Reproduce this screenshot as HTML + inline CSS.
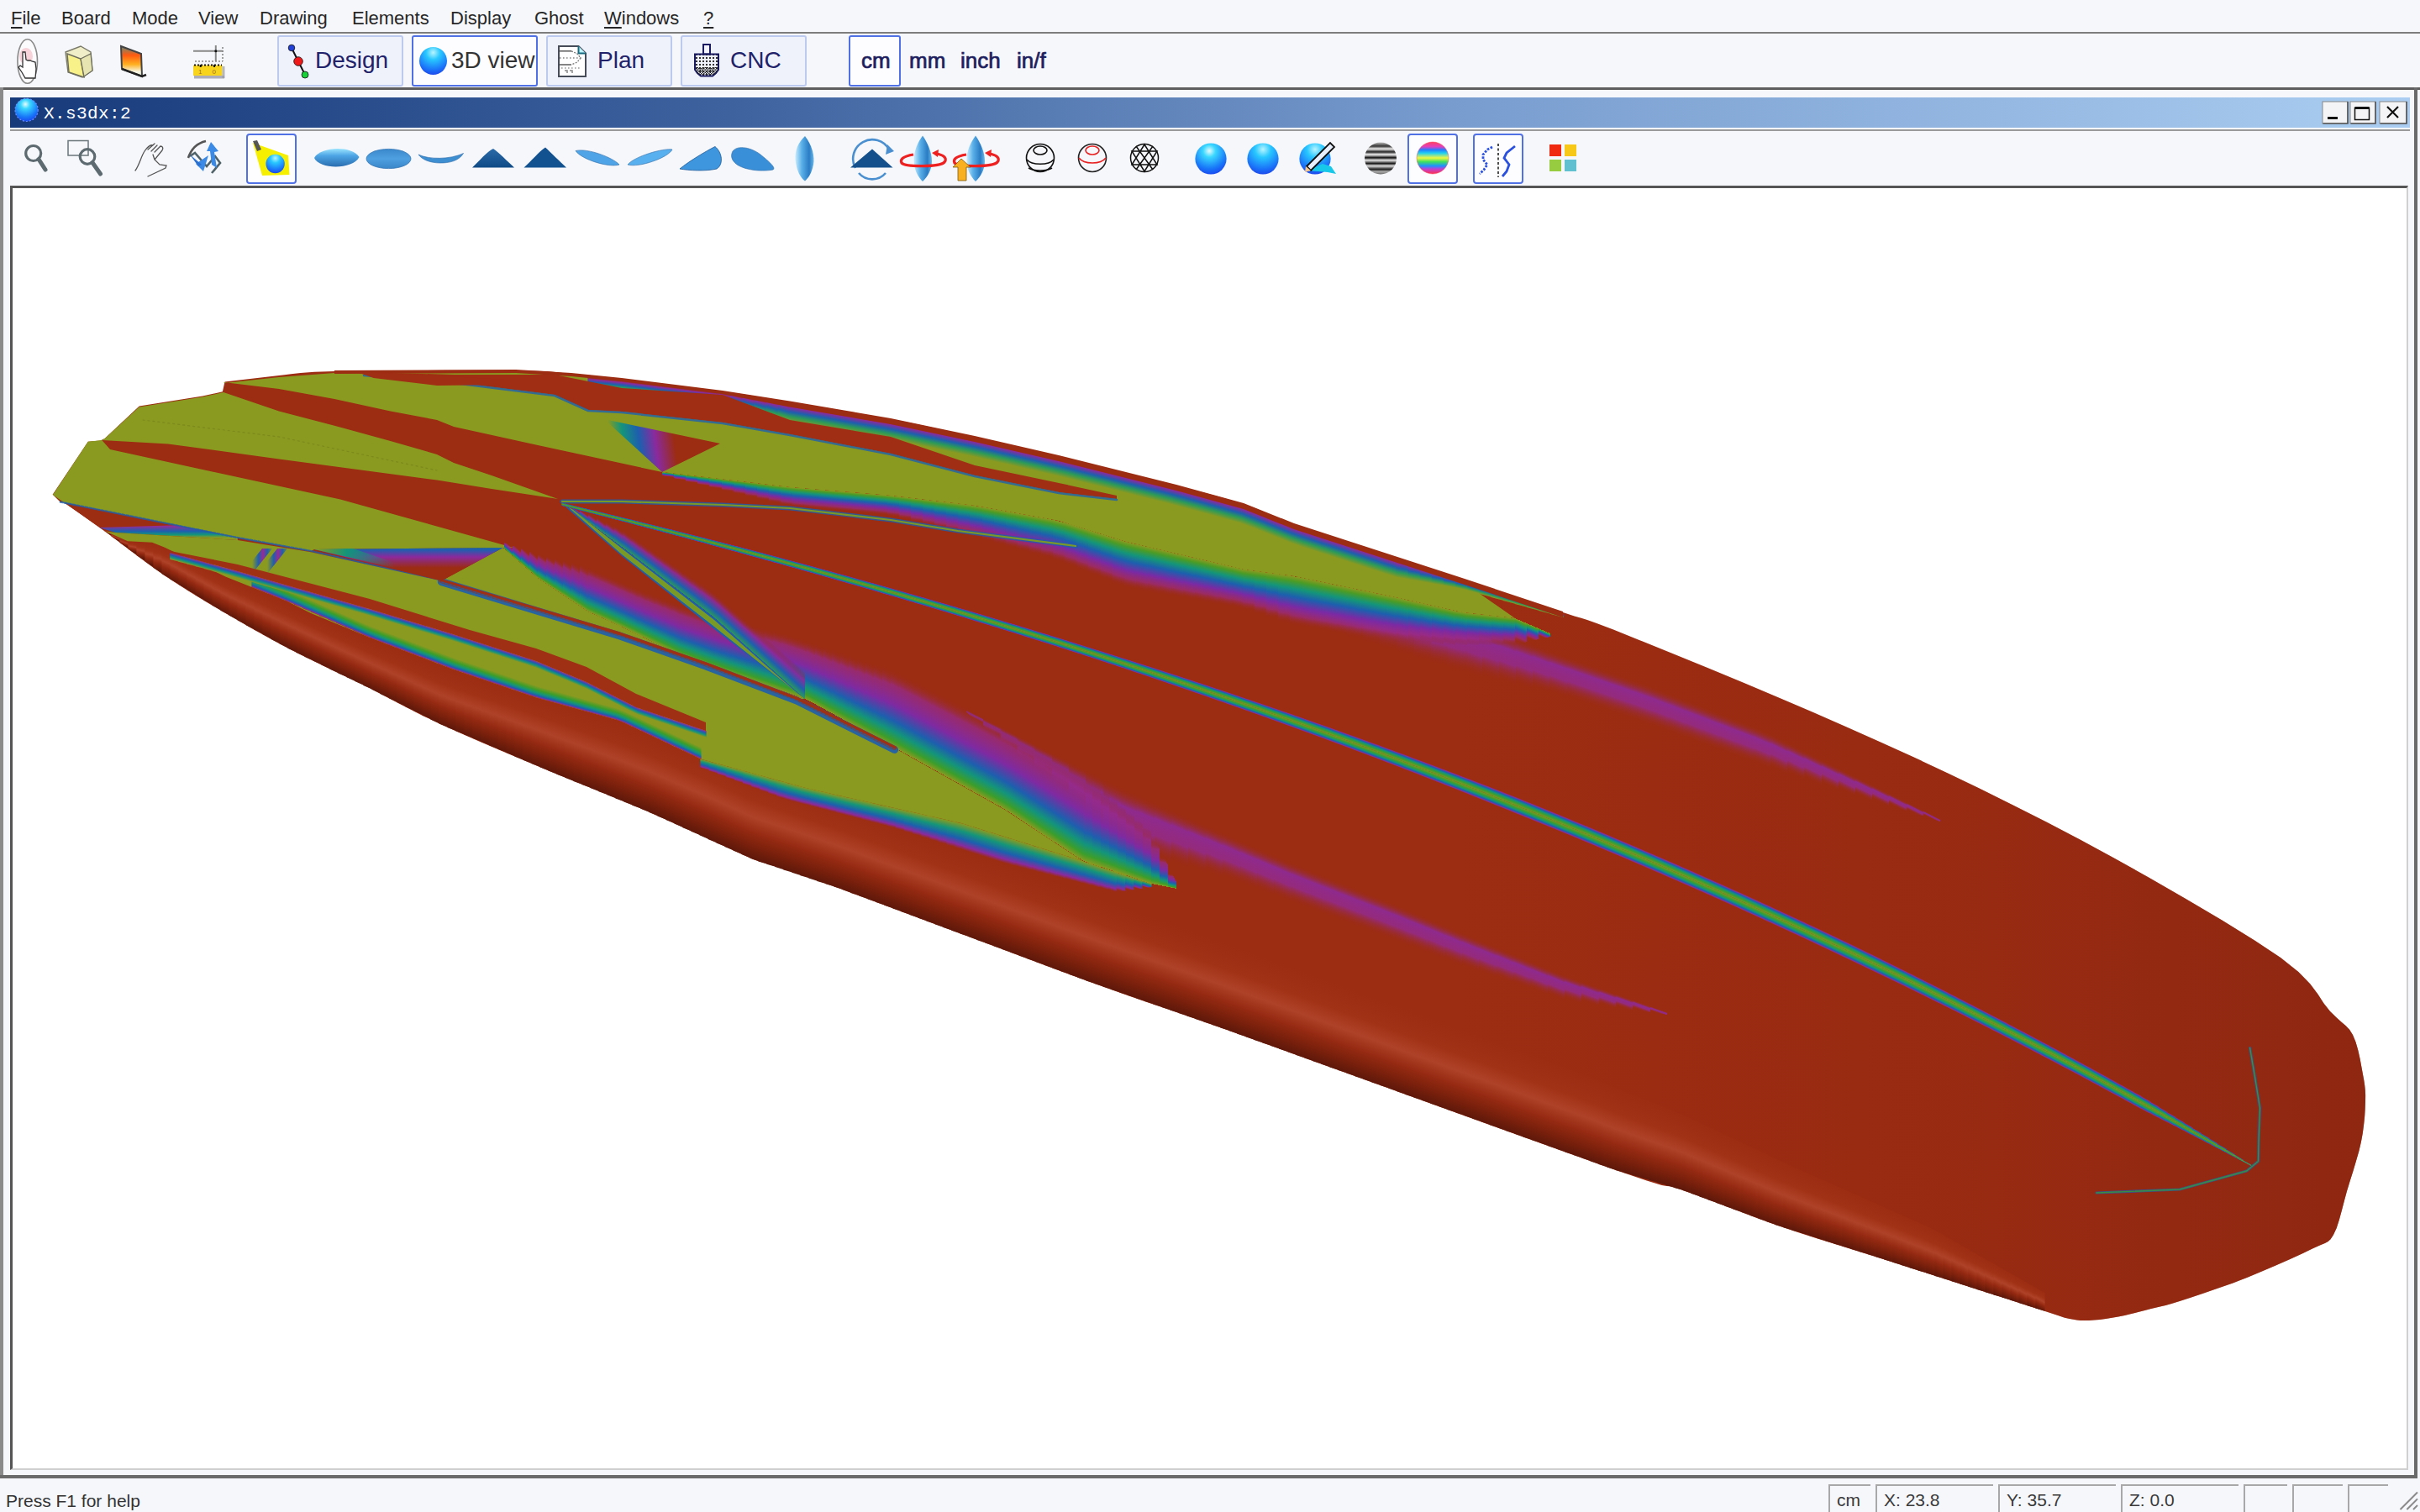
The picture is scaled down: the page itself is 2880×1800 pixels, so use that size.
<!DOCTYPE html>
<html><head><meta charset="utf-8">
<style>
*{margin:0;padding:0;box-sizing:border-box}
html,body{width:2880px;height:1800px;overflow:hidden;background:#f6f7fb;font-family:"Liberation Sans",sans-serif;position:relative}
.abs{position:absolute}
.menu{position:absolute;top:8px;font-size:22px;color:#262626;line-height:28px;white-space:nowrap}
.u{text-decoration:underline;text-underline-offset:3px}
.sep{position:absolute;left:0;width:2880px}
.tbtn{position:absolute;top:42px;height:61px;border:2px solid #bccaf0;border-radius:3px;background:#eff2fa}
.tbtn.sel{border-color:#5070e6;background:#fdfdff}
.tlbl{position:absolute;font-size:28px;line-height:32px;color:#22226a;white-space:nowrap}
.unit{position:absolute;top:56px;font-size:26px;line-height:32px;color:#1e1e5e;-webkit-text-stroke:0.7px #1e1e5e;white-space:nowrap}
.ibtn{position:absolute;top:159px;height:60px;border:2px solid #5070e6;border-radius:4px;background:#fdfdff}
.spane{position:absolute;top:1767px;height:40px;border-left:2px solid #a8a8a8;border-top:2px solid #a8a8a8;font-size:21px;color:#3a3a3a;padding-left:8px;line-height:34px;white-space:nowrap}
</style></head><body>
<!-- menu bar -->
<div class="menu" style="left:13px"><span class="u">F</span>ile</div>
<div class="menu" style="left:73px">Board</div>
<div class="menu" style="left:157px">Mode</div>
<div class="menu" style="left:236px">View</div>
<div class="menu" style="left:309px">Drawing</div>
<div class="menu" style="left:419px">Elements</div>
<div class="menu" style="left:536px">Display</div>
<div class="menu" style="left:636px">Ghost</div>
<div class="menu" style="left:719px"><span class="u">W</span>indows</div>
<div class="menu" style="left:837px"><span class="u">?</span></div>
<div class="sep" style="top:38px;height:2px;background:#7d7d7d"></div>

<!-- main toolbar -->
<div class="tbtn" style="left:330px;width:150px"></div>
<div class="tbtn sel" style="left:490px;width:150px"></div>
<div class="tbtn" style="left:650px;width:150px"></div>
<div class="tbtn" style="left:810px;width:150px"></div>
<div class="tbtn sel" style="left:1010px;width:62px"></div>
<div class="tlbl" style="left:375px;top:56px">Design</div>
<div class="tlbl" style="left:537px;top:56px;color:#333">3D view</div>
<div class="tlbl" style="left:711px;top:56px">Plan</div>
<div class="tlbl" style="left:869px;top:56px">CNC</div>
<div class="unit" style="left:1025px">cm</div>
<div class="unit" style="left:1082px">mm</div>
<div class="unit" style="left:1143px">inch</div>
<div class="unit" style="left:1210px">in/f</div>
<div class="sep" style="top:104px;height:3px;background:#5e5e5e"></div>

<!-- internal frame -->
<div class="abs" style="left:0;top:104px;width:4px;height:1656px;background:#8a8a8a"></div>
<div class="abs" style="left:2873px;top:104px;width:4px;height:1656px;background:#6a6a6a"></div>
<div class="abs" style="left:0;top:1756px;width:2877px;height:4px;background:#6a6a6a"></div>
<div class="abs" style="left:12px;top:116px;width:2856px;height:36px;background:linear-gradient(90deg,#173a7b 0%,#3d629e 30%,#789cce 60%,#aacdf1 100%)"></div>
<div class="abs" style="left:12px;top:154px;width:2856px;height:2px;background:#9a9a9a"></div>
<div class="abs" style="left:52px;top:121px;font-family:'Liberation Mono',monospace;font-size:21px;line-height:30px;color:#fff;letter-spacing:0.4px">X.s3dx:2</div>
<!-- canvas -->
<div class="abs" style="left:12px;top:221px;width:2854px;height:1529px;background:#fff;border-left:3px solid #555;border-top:3px solid #555;border-right:2px solid #d0d0d0;border-bottom:2px solid #d0d0d0"></div>

<!-- icon toolbar selected buttons -->
<div class="ibtn" style="left:293px;width:60px"></div>
<div class="ibtn" style="left:1675px;width:60px"></div>
<div class="ibtn" style="left:1753px;width:60px"></div>

<!-- status bar -->
<div class="abs" style="left:7px;top:1774px;font-size:21px;line-height:26px;color:#333">Press F1 for help</div>
<div class="spane" style="left:2176px;width:50px">cm</div>
<div class="spane" style="left:2232px;width:140px">X: 23.8</div>
<div class="spane" style="left:2378px;width:140px">Y: 35.7</div>
<div class="spane" style="left:2524px;width:140px">Z: 0.0</div>
<div class="spane" style="left:2670px;width:52px"></div>
<div class="spane" style="left:2728px;width:60px"></div>
<div class="spane" style="left:2794px;width:48px"></div>
<svg class="abs" style="left:0;top:0" width="2880" height="1800" viewBox="0 0 2880 1800" xmlns="http://www.w3.org/2000/svg"><defs><linearGradient id="tailtone" gradientUnits="userSpaceOnUse" x1="1700" y1="0" x2="2820" y2="0"><stop offset="0" stop-color="#9a2c12" stop-opacity="0"/><stop offset="1" stop-color="#862410" stop-opacity="0.6"/></linearGradient><linearGradient id="s0"><stop offset="0" stop-color="#9c2c12"/><stop offset="0.3" stop-color="#a23216"/><stop offset="0.5" stop-color="#ae4228"/><stop offset="0.68" stop-color="#962a12"/><stop offset="0.85" stop-color="#7a200c"/><stop offset="1.0" stop-color="#5e180a"/></linearGradient><linearGradient id="g1" href="#s0" gradientUnits="userSpaceOnUse" x1="128.0" y1="633.1" x2="127.4" y2="634.6"/><linearGradient id="g2" href="#s0" gradientUnits="userSpaceOnUse" x1="138.0" y1="637.7" x2="136.3" y2="641.5"/><linearGradient id="g3" href="#s0" gradientUnits="userSpaceOnUse" x1="148.0" y1="641.9" x2="145.4" y2="648.8"/><linearGradient id="g4" href="#s0" gradientUnits="userSpaceOnUse" x1="158.0" y1="644.6" x2="155.8" y2="656.8"/><linearGradient id="g5" href="#s0" gradientUnits="userSpaceOnUse" x1="168.0" y1="646.4" x2="164.9" y2="664.0"/><linearGradient id="g6" href="#s0" gradientUnits="userSpaceOnUse" x1="178.0" y1="648.2" x2="173.9" y2="671.3"/><linearGradient id="g7" href="#s0" gradientUnits="userSpaceOnUse" x1="188.0" y1="650.0" x2="182.9" y2="678.5"/><linearGradient id="g8" href="#s0" gradientUnits="userSpaceOnUse" x1="198.0" y1="652.8" x2="186.8" y2="682.1"/><linearGradient id="g9" href="#s0" gradientUnits="userSpaceOnUse" x1="208.0" y1="657.1" x2="194.1" y2="686.1"/><linearGradient id="g10" href="#s0" gradientUnits="userSpaceOnUse" x1="218.0" y1="661.9" x2="203.6" y2="692.0"/><linearGradient id="g11" href="#s0" gradientUnits="userSpaceOnUse" x1="228.0" y1="666.6" x2="213.0" y2="697.9"/><linearGradient id="g12" href="#s0" gradientUnits="userSpaceOnUse" x1="238.0" y1="671.4" x2="222.5" y2="703.8"/><linearGradient id="g13" href="#s0" gradientUnits="userSpaceOnUse" x1="248.0" y1="676.2" x2="231.9" y2="709.8"/><linearGradient id="g14" href="#s0" gradientUnits="userSpaceOnUse" x1="258.0" y1="681.0" x2="241.4" y2="715.7"/><linearGradient id="g15" href="#s0" gradientUnits="userSpaceOnUse" x1="268.0" y1="685.7" x2="251.6" y2="722.4"/><linearGradient id="g16" href="#s0" gradientUnits="userSpaceOnUse" x1="278.0" y1="689.9" x2="262.0" y2="728.9"/><linearGradient id="g17" href="#s0" gradientUnits="userSpaceOnUse" x1="288.0" y1="694.0" x2="271.5" y2="734.3"/><linearGradient id="g18" href="#s0" gradientUnits="userSpaceOnUse" x1="298.0" y1="698.1" x2="281.0" y2="739.7"/><linearGradient id="g19" href="#s0" gradientUnits="userSpaceOnUse" x1="308.0" y1="702.3" x2="290.4" y2="745.1"/><linearGradient id="g20" href="#s0" gradientUnits="userSpaceOnUse" x1="318.0" y1="706.4" x2="299.9" y2="750.5"/><linearGradient id="g21" href="#s0" gradientUnits="userSpaceOnUse" x1="328.0" y1="710.5" x2="309.4" y2="755.9"/><linearGradient id="g22" href="#s0" gradientUnits="userSpaceOnUse" x1="338.0" y1="714.6" x2="318.6" y2="761.0"/><linearGradient id="g23" href="#s0" gradientUnits="userSpaceOnUse" x1="348.0" y1="718.9" x2="327.5" y2="765.1"/><linearGradient id="g24" href="#s0" gradientUnits="userSpaceOnUse" x1="358.0" y1="723.4" x2="337.3" y2="770.0"/><linearGradient id="g25" href="#s0" gradientUnits="userSpaceOnUse" x1="368.0" y1="727.8" x2="347.1" y2="774.9"/><linearGradient id="g26" href="#s0" gradientUnits="userSpaceOnUse" x1="378.0" y1="732.2" x2="356.9" y2="779.7"/><linearGradient id="g27" href="#s0" gradientUnits="userSpaceOnUse" x1="388.0" y1="736.7" x2="366.7" y2="784.6"/><linearGradient id="g28" href="#s0" gradientUnits="userSpaceOnUse" x1="398.0" y1="741.1" x2="376.6" y2="789.6"/><linearGradient id="g29" href="#s0" gradientUnits="userSpaceOnUse" x1="408.0" y1="745.5" x2="386.7" y2="794.7"/><linearGradient id="g30" href="#s0" gradientUnits="userSpaceOnUse" x1="418.0" y1="749.8" x2="396.6" y2="799.4"/><linearGradient id="g31" href="#s0" gradientUnits="userSpaceOnUse" x1="428.0" y1="754.1" x2="406.4" y2="804.2"/><linearGradient id="g32" href="#s0" gradientUnits="userSpaceOnUse" x1="438.0" y1="758.4" x2="416.5" y2="809.3"/><linearGradient id="g33" href="#s0" gradientUnits="userSpaceOnUse" x1="448.0" y1="762.5" x2="427.1" y2="815.0"/><linearGradient id="g34" href="#s0" gradientUnits="userSpaceOnUse" x1="458.0" y1="766.5" x2="436.7" y2="820.0"/><linearGradient id="g35" href="#s0" gradientUnits="userSpaceOnUse" x1="468.0" y1="770.5" x2="446.3" y2="824.9"/><linearGradient id="g36" href="#s0" gradientUnits="userSpaceOnUse" x1="478.0" y1="774.4" x2="455.9" y2="829.8"/><linearGradient id="g37" href="#s0" gradientUnits="userSpaceOnUse" x1="488.0" y1="778.4" x2="465.6" y2="834.8"/><linearGradient id="g38" href="#s0" gradientUnits="userSpaceOnUse" x1="498.0" y1="782.4" x2="475.2" y2="839.7"/><linearGradient id="g39" href="#s0" gradientUnits="userSpaceOnUse" x1="508.0" y1="786.4" x2="484.8" y2="844.6"/><linearGradient id="g40" href="#s0" gradientUnits="userSpaceOnUse" x1="518.0" y1="790.4" x2="494.4" y2="849.6"/><linearGradient id="g41" href="#s0" gradientUnits="userSpaceOnUse" x1="528.0" y1="794.0" x2="507.3" y2="856.9"/><linearGradient id="g42" href="#s0" gradientUnits="userSpaceOnUse" x1="538.0" y1="797.2" x2="518.0" y2="861.8"/><linearGradient id="g43" href="#s0" gradientUnits="userSpaceOnUse" x1="548.0" y1="800.2" x2="529.2" y2="867.1"/><linearGradient id="g44" href="#s0" gradientUnits="userSpaceOnUse" x1="558.0" y1="803.0" x2="538.8" y2="871.3"/><linearGradient id="g45" href="#s0" gradientUnits="userSpaceOnUse" x1="568.0" y1="805.8" x2="548.4" y2="875.5"/><linearGradient id="g46" href="#s0" gradientUnits="userSpaceOnUse" x1="578.0" y1="808.6" x2="558.0" y2="879.7"/><linearGradient id="g47" href="#s0" gradientUnits="userSpaceOnUse" x1="588.0" y1="811.4" x2="567.6" y2="883.9"/><linearGradient id="g48" href="#s0" gradientUnits="userSpaceOnUse" x1="598.0" y1="814.2" x2="577.2" y2="888.1"/><linearGradient id="g49" href="#s0" gradientUnits="userSpaceOnUse" x1="608.0" y1="817.0" x2="586.8" y2="892.3"/><linearGradient id="g50" href="#s0" gradientUnits="userSpaceOnUse" x1="618.0" y1="819.9" x2="596.4" y2="896.5"/><linearGradient id="g51" href="#s0" gradientUnits="userSpaceOnUse" x1="628.0" y1="822.7" x2="606.0" y2="900.7"/><linearGradient id="g52" href="#s0" gradientUnits="userSpaceOnUse" x1="638.0" y1="825.6" x2="614.5" y2="904.1"/><linearGradient id="g53" href="#s0" gradientUnits="userSpaceOnUse" x1="648.0" y1="828.7" x2="622.1" y2="906.9"/><linearGradient id="g54" href="#s0" gradientUnits="userSpaceOnUse" x1="658.0" y1="832.0" x2="632.5" y2="911.4"/><linearGradient id="g55" href="#s0" gradientUnits="userSpaceOnUse" x1="668.0" y1="835.2" x2="642.2" y2="915.4"/><linearGradient id="g56" href="#s0" gradientUnits="userSpaceOnUse" x1="678.0" y1="838.4" x2="652.0" y2="919.5"/><linearGradient id="g57" href="#s0" gradientUnits="userSpaceOnUse" x1="688.0" y1="841.6" x2="661.7" y2="923.5"/><linearGradient id="g58" href="#s0" gradientUnits="userSpaceOnUse" x1="698.0" y1="844.8" x2="671.4" y2="927.5"/><linearGradient id="g59" href="#s0" gradientUnits="userSpaceOnUse" x1="708.0" y1="848.1" x2="681.2" y2="931.6"/><linearGradient id="g60" href="#s0" gradientUnits="userSpaceOnUse" x1="718.0" y1="851.3" x2="690.9" y2="935.6"/><linearGradient id="g61" href="#s0" gradientUnits="userSpaceOnUse" x1="728.0" y1="854.5" x2="700.6" y2="939.6"/><linearGradient id="g62" href="#s0" gradientUnits="userSpaceOnUse" x1="738.0" y1="857.8" x2="709.6" y2="943.0"/><linearGradient id="g63" href="#s0" gradientUnits="userSpaceOnUse" x1="748.0" y1="861.2" x2="717.5" y2="945.6"/><linearGradient id="g64" href="#s0" gradientUnits="userSpaceOnUse" x1="758.0" y1="864.8" x2="727.4" y2="949.7"/><linearGradient id="g65" href="#s0" gradientUnits="userSpaceOnUse" x1="768.0" y1="868.5" x2="736.9" y2="953.5"/><linearGradient id="g66" href="#s0" gradientUnits="userSpaceOnUse" x1="778.0" y1="872.3" x2="744.2" y2="955.5"/><linearGradient id="g67" href="#s0" gradientUnits="userSpaceOnUse" x1="788.0" y1="876.4" x2="754.1" y2="960.0"/><linearGradient id="g68" href="#s0" gradientUnits="userSpaceOnUse" x1="798.0" y1="880.4" x2="763.9" y2="964.5"/><linearGradient id="g69" href="#s0" gradientUnits="userSpaceOnUse" x1="808.0" y1="884.5" x2="773.7" y2="969.0"/><linearGradient id="g70" href="#s0" gradientUnits="userSpaceOnUse" x1="818.0" y1="888.6" x2="783.6" y2="973.5"/><linearGradient id="g71" href="#s0" gradientUnits="userSpaceOnUse" x1="828.0" y1="892.6" x2="793.4" y2="978.0"/><linearGradient id="g72" href="#s0" gradientUnits="userSpaceOnUse" x1="838.0" y1="896.7" x2="802.3" y2="981.6"/><linearGradient id="g73" href="#s0" gradientUnits="userSpaceOnUse" x1="848.0" y1="901.1" x2="810.3" y2="983.9"/><linearGradient id="g74" href="#s0" gradientUnits="userSpaceOnUse" x1="858.0" y1="905.7" x2="820.3" y2="988.5"/><linearGradient id="g75" href="#s0" gradientUnits="userSpaceOnUse" x1="868.0" y1="910.2" x2="830.3" y2="993.0"/><linearGradient id="g76" href="#s0" gradientUnits="userSpaceOnUse" x1="878.0" y1="914.8" x2="840.3" y2="997.6"/><linearGradient id="g77" href="#s0" gradientUnits="userSpaceOnUse" x1="888.0" y1="919.4" x2="850.3" y2="1002.2"/><linearGradient id="g78" href="#s0" gradientUnits="userSpaceOnUse" x1="898.0" y1="923.5" x2="865.3" y2="1011.3"/><linearGradient id="g79" href="#s0" gradientUnits="userSpaceOnUse" x1="908.0" y1="927.0" x2="877.8" y2="1016.9"/><linearGradient id="g80" href="#s0" gradientUnits="userSpaceOnUse" x1="918.0" y1="930.4" x2="887.8" y2="1020.2"/><linearGradient id="g81" href="#s0" gradientUnits="userSpaceOnUse" x1="928.0" y1="933.8" x2="897.8" y2="1023.6"/><linearGradient id="g82" href="#s0" gradientUnits="userSpaceOnUse" x1="938.0" y1="937.1" x2="907.8" y2="1027.0"/><linearGradient id="g83" href="#s0" gradientUnits="userSpaceOnUse" x1="948.0" y1="940.5" x2="917.8" y2="1030.3"/><linearGradient id="g84" href="#s0" gradientUnits="userSpaceOnUse" x1="958.0" y1="943.9" x2="927.8" y2="1033.7"/><linearGradient id="g85" href="#s0" gradientUnits="userSpaceOnUse" x1="968.0" y1="947.2" x2="937.8" y2="1037.1"/><linearGradient id="g86" href="#s0" gradientUnits="userSpaceOnUse" x1="978.0" y1="950.6" x2="947.8" y2="1040.4"/><linearGradient id="g87" href="#s0" gradientUnits="userSpaceOnUse" x1="988.0" y1="954.0" x2="957.8" y2="1043.8"/><linearGradient id="g88" href="#s0" gradientUnits="userSpaceOnUse" x1="998.0" y1="957.4" x2="967.3" y2="1046.8"/><linearGradient id="g89" href="#s0" gradientUnits="userSpaceOnUse" x1="1008.0" y1="960.9" x2="976.1" y2="1049.5"/><linearGradient id="g90" href="#s0" gradientUnits="userSpaceOnUse" x1="1018.0" y1="964.5" x2="986.1" y2="1053.2"/><linearGradient id="g91" href="#s0" gradientUnits="userSpaceOnUse" x1="1028.0" y1="968.1" x2="996.0" y2="1056.9"/><linearGradient id="g92" href="#s0" gradientUnits="userSpaceOnUse" x1="1038.0" y1="971.7" x2="1006.0" y2="1060.7"/><linearGradient id="g93" href="#s0" gradientUnits="userSpaceOnUse" x1="1048.0" y1="975.3" x2="1015.9" y2="1064.4"/><linearGradient id="g94" href="#s0" gradientUnits="userSpaceOnUse" x1="1058.0" y1="978.9" x2="1025.9" y2="1068.1"/><linearGradient id="g95" href="#s0" gradientUnits="userSpaceOnUse" x1="1068.0" y1="982.5" x2="1035.8" y2="1071.8"/><linearGradient id="g96" href="#s0" gradientUnits="userSpaceOnUse" x1="1078.0" y1="986.1" x2="1045.8" y2="1075.5"/><linearGradient id="g97" href="#s0" gradientUnits="userSpaceOnUse" x1="1088.0" y1="989.7" x2="1055.8" y2="1079.2"/><linearGradient id="g98" href="#s0" gradientUnits="userSpaceOnUse" x1="1098.0" y1="993.3" x2="1065.7" y2="1083.0"/><linearGradient id="g99" href="#s0" gradientUnits="userSpaceOnUse" x1="1108.0" y1="996.9" x2="1075.7" y2="1086.7"/><linearGradient id="g100" href="#s0" gradientUnits="userSpaceOnUse" x1="1118.0" y1="1000.5" x2="1085.6" y2="1090.4"/><linearGradient id="g101" href="#s0" gradientUnits="userSpaceOnUse" x1="1128.0" y1="1004.1" x2="1095.6" y2="1094.1"/><linearGradient id="g102" href="#s0" gradientUnits="userSpaceOnUse" x1="1138.0" y1="1007.7" x2="1105.5" y2="1097.8"/><linearGradient id="g103" href="#s0" gradientUnits="userSpaceOnUse" x1="1148.0" y1="1011.3" x2="1115.5" y2="1101.6"/><linearGradient id="g104" href="#s0" gradientUnits="userSpaceOnUse" x1="1158.0" y1="1014.9" x2="1125.5" y2="1105.3"/><linearGradient id="g105" href="#s0" gradientUnits="userSpaceOnUse" x1="1168.0" y1="1018.5" x2="1135.4" y2="1109.0"/><linearGradient id="g106" href="#s0" gradientUnits="userSpaceOnUse" x1="1178.0" y1="1022.1" x2="1145.4" y2="1112.7"/><linearGradient id="g107" href="#s0" gradientUnits="userSpaceOnUse" x1="1188.0" y1="1025.7" x2="1155.3" y2="1116.4"/><linearGradient id="g108" href="#s0" gradientUnits="userSpaceOnUse" x1="1198.0" y1="1029.3" x2="1165.3" y2="1120.1"/><linearGradient id="g109" href="#s0" gradientUnits="userSpaceOnUse" x1="1208.0" y1="1032.9" x2="1175.2" y2="1123.9"/><linearGradient id="g110" href="#s0" gradientUnits="userSpaceOnUse" x1="1218.0" y1="1036.5" x2="1185.2" y2="1127.6"/><linearGradient id="g111" href="#s0" gradientUnits="userSpaceOnUse" x1="1228.0" y1="1040.1" x2="1195.2" y2="1131.3"/><linearGradient id="g112" href="#s0" gradientUnits="userSpaceOnUse" x1="1238.0" y1="1043.7" x2="1205.1" y2="1135.0"/><linearGradient id="g113" href="#s0" gradientUnits="userSpaceOnUse" x1="1248.0" y1="1047.3" x2="1215.1" y2="1138.7"/><linearGradient id="g114" href="#s0" gradientUnits="userSpaceOnUse" x1="1258.0" y1="1050.9" x2="1225.0" y2="1142.5"/><linearGradient id="g115" href="#s0" gradientUnits="userSpaceOnUse" x1="1268.0" y1="1054.5" x2="1235.0" y2="1146.2"/><linearGradient id="g116" href="#s0" gradientUnits="userSpaceOnUse" x1="1278.0" y1="1058.1" x2="1244.9" y2="1149.9"/><linearGradient id="g117" href="#s0" gradientUnits="userSpaceOnUse" x1="1288.0" y1="1061.7" x2="1254.9" y2="1153.6"/><linearGradient id="g118" href="#s0" gradientUnits="userSpaceOnUse" x1="1298.0" y1="1065.3" x2="1264.9" y2="1157.4"/><linearGradient id="g119" href="#s0" gradientUnits="userSpaceOnUse" x1="1308.0" y1="1068.9" x2="1275.1" y2="1161.1"/><linearGradient id="g120" href="#s0" gradientUnits="userSpaceOnUse" x1="1318.0" y1="1072.4" x2="1285.1" y2="1164.6"/><linearGradient id="g121" href="#s0" gradientUnits="userSpaceOnUse" x1="1328.0" y1="1076.0" x2="1295.2" y2="1168.1"/><linearGradient id="g122" href="#s0" gradientUnits="userSpaceOnUse" x1="1338.0" y1="1079.6" x2="1305.2" y2="1171.6"/><linearGradient id="g123" href="#s0" gradientUnits="userSpaceOnUse" x1="1348.0" y1="1083.1" x2="1315.2" y2="1175.1"/><linearGradient id="g124" href="#s0" gradientUnits="userSpaceOnUse" x1="1358.0" y1="1086.7" x2="1325.2" y2="1178.6"/><linearGradient id="g125" href="#s0" gradientUnits="userSpaceOnUse" x1="1368.0" y1="1090.3" x2="1335.2" y2="1182.1"/><linearGradient id="g126" href="#s0" gradientUnits="userSpaceOnUse" x1="1378.0" y1="1093.8" x2="1345.3" y2="1185.6"/><linearGradient id="g127" href="#s0" gradientUnits="userSpaceOnUse" x1="1388.0" y1="1097.4" x2="1355.3" y2="1189.1"/><linearGradient id="g128" href="#s0" gradientUnits="userSpaceOnUse" x1="1398.0" y1="1101.0" x2="1365.3" y2="1192.6"/><linearGradient id="g129" href="#s0" gradientUnits="userSpaceOnUse" x1="1408.0" y1="1104.5" x2="1375.3" y2="1196.1"/><linearGradient id="g130" href="#s0" gradientUnits="userSpaceOnUse" x1="1418.0" y1="1108.1" x2="1385.3" y2="1199.7"/><linearGradient id="g131" href="#s0" gradientUnits="userSpaceOnUse" x1="1428.0" y1="1111.7" x2="1395.4" y2="1203.2"/><linearGradient id="g132" href="#s0" gradientUnits="userSpaceOnUse" x1="1438.0" y1="1115.2" x2="1405.4" y2="1206.7"/><linearGradient id="g133" href="#s0" gradientUnits="userSpaceOnUse" x1="1448.0" y1="1118.8" x2="1415.4" y2="1210.2"/><linearGradient id="g134" href="#s0" gradientUnits="userSpaceOnUse" x1="1458.0" y1="1122.4" x2="1425.2" y2="1213.5"/><linearGradient id="g135" href="#s0" gradientUnits="userSpaceOnUse" x1="1468.0" y1="1126.0" x2="1434.7" y2="1216.6"/><linearGradient id="g136" href="#s0" gradientUnits="userSpaceOnUse" x1="1478.0" y1="1129.7" x2="1444.7" y2="1220.3"/><linearGradient id="g137" href="#s0" gradientUnits="userSpaceOnUse" x1="1488.0" y1="1133.4" x2="1454.7" y2="1223.9"/><linearGradient id="g138" href="#s0" gradientUnits="userSpaceOnUse" x1="1498.0" y1="1137.0" x2="1464.8" y2="1227.5"/><linearGradient id="g139" href="#s0" gradientUnits="userSpaceOnUse" x1="1508.0" y1="1140.7" x2="1474.8" y2="1231.1"/><linearGradient id="g140" href="#s0" gradientUnits="userSpaceOnUse" x1="1518.0" y1="1144.4" x2="1484.8" y2="1234.7"/><linearGradient id="g141" href="#s0" gradientUnits="userSpaceOnUse" x1="1528.0" y1="1148.1" x2="1494.8" y2="1238.3"/><linearGradient id="g142" href="#s0" gradientUnits="userSpaceOnUse" x1="1538.0" y1="1151.7" x2="1504.8" y2="1242.0"/><linearGradient id="g143" href="#s0" gradientUnits="userSpaceOnUse" x1="1548.0" y1="1155.4" x2="1514.9" y2="1245.6"/><linearGradient id="g144" href="#s0" gradientUnits="userSpaceOnUse" x1="1558.0" y1="1159.1" x2="1524.9" y2="1249.2"/><linearGradient id="g145" href="#s0" gradientUnits="userSpaceOnUse" x1="1568.0" y1="1162.8" x2="1534.9" y2="1252.8"/><linearGradient id="g146" href="#s0" gradientUnits="userSpaceOnUse" x1="1578.0" y1="1166.4" x2="1544.9" y2="1256.4"/><linearGradient id="g147" href="#s0" gradientUnits="userSpaceOnUse" x1="1588.0" y1="1170.1" x2="1554.9" y2="1260.0"/><linearGradient id="g148" href="#s0" gradientUnits="userSpaceOnUse" x1="1598.0" y1="1173.8" x2="1565.0" y2="1263.7"/><linearGradient id="g149" href="#s0" gradientUnits="userSpaceOnUse" x1="1608.0" y1="1177.5" x2="1575.0" y2="1267.3"/><linearGradient id="g150" href="#s0" gradientUnits="userSpaceOnUse" x1="1618.0" y1="1181.1" x2="1585.0" y2="1270.9"/><linearGradient id="g151" href="#s0" gradientUnits="userSpaceOnUse" x1="1628.0" y1="1184.8" x2="1595.0" y2="1274.5"/><linearGradient id="g152" href="#s0" gradientUnits="userSpaceOnUse" x1="1638.0" y1="1188.5" x2="1605.1" y2="1278.1"/><linearGradient id="g153" href="#s0" gradientUnits="userSpaceOnUse" x1="1648.0" y1="1192.2" x2="1615.1" y2="1281.7"/><linearGradient id="g154" href="#s0" gradientUnits="userSpaceOnUse" x1="1658.0" y1="1195.8" x2="1625.1" y2="1285.4"/><linearGradient id="g155" href="#s0" gradientUnits="userSpaceOnUse" x1="1668.0" y1="1199.5" x2="1635.1" y2="1289.0"/><linearGradient id="g156" href="#s0" gradientUnits="userSpaceOnUse" x1="1678.0" y1="1203.2" x2="1645.1" y2="1292.6"/><linearGradient id="g157" href="#s0" gradientUnits="userSpaceOnUse" x1="1688.0" y1="1206.9" x2="1655.2" y2="1296.2"/><linearGradient id="g158" href="#s0" gradientUnits="userSpaceOnUse" x1="1698.0" y1="1210.5" x2="1665.2" y2="1299.8"/><linearGradient id="g159" href="#s0" gradientUnits="userSpaceOnUse" x1="1708.0" y1="1214.2" x2="1675.2" y2="1303.4"/><linearGradient id="g160" href="#s0" gradientUnits="userSpaceOnUse" x1="1718.0" y1="1217.9" x2="1685.2" y2="1307.1"/><linearGradient id="g161" href="#s0" gradientUnits="userSpaceOnUse" x1="1728.0" y1="1221.6" x2="1695.2" y2="1310.7"/><linearGradient id="g162" href="#s0" gradientUnits="userSpaceOnUse" x1="1738.0" y1="1225.2" x2="1705.3" y2="1314.3"/><linearGradient id="g163" href="#s0" gradientUnits="userSpaceOnUse" x1="1748.0" y1="1228.9" x2="1715.3" y2="1317.9"/><linearGradient id="g164" href="#s0" gradientUnits="userSpaceOnUse" x1="1758.0" y1="1232.6" x2="1725.3" y2="1321.5"/><linearGradient id="g165" href="#s0" gradientUnits="userSpaceOnUse" x1="1768.0" y1="1236.3" x2="1735.3" y2="1325.1"/><linearGradient id="g166" href="#s0" gradientUnits="userSpaceOnUse" x1="1778.0" y1="1239.9" x2="1745.4" y2="1328.8"/><linearGradient id="g167" href="#s0" gradientUnits="userSpaceOnUse" x1="1788.0" y1="1243.6" x2="1755.4" y2="1332.4"/><linearGradient id="g168" href="#s0" gradientUnits="userSpaceOnUse" x1="1798.0" y1="1247.3" x2="1765.4" y2="1336.0"/><linearGradient id="g169" href="#s0" gradientUnits="userSpaceOnUse" x1="1808.0" y1="1251.0" x2="1775.4" y2="1339.6"/><linearGradient id="g170" href="#s0" gradientUnits="userSpaceOnUse" x1="1818.0" y1="1254.6" x2="1785.4" y2="1343.2"/><linearGradient id="g171" href="#s0" gradientUnits="userSpaceOnUse" x1="1828.0" y1="1258.3" x2="1795.5" y2="1346.8"/><linearGradient id="g172" href="#s0" gradientUnits="userSpaceOnUse" x1="1838.0" y1="1262.0" x2="1805.5" y2="1350.5"/><linearGradient id="g173" href="#s0" gradientUnits="userSpaceOnUse" x1="1848.0" y1="1265.7" x2="1815.5" y2="1354.1"/><linearGradient id="g174" href="#s0" gradientUnits="userSpaceOnUse" x1="1858.0" y1="1269.3" x2="1825.5" y2="1357.7"/><linearGradient id="g175" href="#s0" gradientUnits="userSpaceOnUse" x1="1868.0" y1="1273.0" x2="1835.6" y2="1361.3"/><linearGradient id="g176" href="#s0" gradientUnits="userSpaceOnUse" x1="1878.0" y1="1276.7" x2="1845.6" y2="1364.9"/><linearGradient id="g177" href="#s0" gradientUnits="userSpaceOnUse" x1="1888.0" y1="1280.4" x2="1855.6" y2="1368.5"/><linearGradient id="g178" href="#s0" gradientUnits="userSpaceOnUse" x1="1898.0" y1="1284.2" x2="1863.8" y2="1370.5"/><linearGradient id="g179" href="#s0" gradientUnits="userSpaceOnUse" x1="1908.0" y1="1288.5" x2="1870.3" y2="1370.3"/><linearGradient id="g180" href="#s0" gradientUnits="userSpaceOnUse" x1="1918.0" y1="1293.0" x2="1881.7" y2="1375.1"/><linearGradient id="g181" href="#s0" gradientUnits="userSpaceOnUse" x1="1928.0" y1="1297.2" x2="1894.5" y2="1381.0"/><linearGradient id="g182" href="#s0" gradientUnits="userSpaceOnUse" x1="1938.0" y1="1301.2" x2="1904.8" y2="1384.1"/><linearGradient id="g183" href="#s0" gradientUnits="userSpaceOnUse" x1="1948.0" y1="1305.2" x2="1915.2" y2="1387.3"/><linearGradient id="g184" href="#s0" gradientUnits="userSpaceOnUse" x1="1958.0" y1="1309.2" x2="1925.5" y2="1390.4"/><linearGradient id="g185" href="#s0" gradientUnits="userSpaceOnUse" x1="1968.0" y1="1313.2" x2="1935.9" y2="1393.5"/><linearGradient id="g186" href="#s0" gradientUnits="userSpaceOnUse" x1="1978.0" y1="1317.2" x2="1946.2" y2="1396.7"/><linearGradient id="g187" href="#s0" gradientUnits="userSpaceOnUse" x1="1988.0" y1="1321.2" x2="1956.6" y2="1399.8"/><linearGradient id="g188" href="#s0" gradientUnits="userSpaceOnUse" x1="1998.0" y1="1325.3" x2="1965.7" y2="1401.9"/><linearGradient id="g189" href="#s0" gradientUnits="userSpaceOnUse" x1="2008.0" y1="1329.8" x2="1973.6" y2="1402.8"/><linearGradient id="g190" href="#s0" gradientUnits="userSpaceOnUse" x1="2018.0" y1="1334.5" x2="1984.0" y2="1406.7"/><linearGradient id="g191" href="#s0" gradientUnits="userSpaceOnUse" x1="2028.0" y1="1339.2" x2="1994.4" y2="1410.5"/><linearGradient id="g192" href="#s0" gradientUnits="userSpaceOnUse" x1="2038.0" y1="1343.9" x2="2004.8" y2="1414.4"/><linearGradient id="g193" href="#s0" gradientUnits="userSpaceOnUse" x1="2048.0" y1="1348.6" x2="2015.1" y2="1418.3"/><linearGradient id="g194" href="#s0" gradientUnits="userSpaceOnUse" x1="2058.0" y1="1353.3" x2="2025.5" y2="1422.2"/><linearGradient id="g195" href="#s0" gradientUnits="userSpaceOnUse" x1="2068.0" y1="1358.0" x2="2035.9" y2="1426.1"/><linearGradient id="g196" href="#s0" gradientUnits="userSpaceOnUse" x1="2078.0" y1="1362.8" x2="2046.3" y2="1430.0"/><linearGradient id="g197" href="#s0" gradientUnits="userSpaceOnUse" x1="2088.0" y1="1367.5" x2="2056.7" y2="1433.9"/><linearGradient id="g198" href="#s0" gradientUnits="userSpaceOnUse" x1="2098.0" y1="1372.2" x2="2066.8" y2="1437.4"/><linearGradient id="g199" href="#s0" gradientUnits="userSpaceOnUse" x1="2108.0" y1="1377.1" x2="2076.5" y2="1440.5"/><linearGradient id="g200" href="#s0" gradientUnits="userSpaceOnUse" x1="2118.0" y1="1381.9" x2="2088.7" y2="1446.3"/><linearGradient id="g201" href="#s0" gradientUnits="userSpaceOnUse" x1="2128.0" y1="1386.3" x2="2099.6" y2="1450.3"/><linearGradient id="g202" href="#s0" gradientUnits="userSpaceOnUse" x1="2138.0" y1="1390.8" x2="2110.1" y2="1453.6"/><linearGradient id="g203" href="#s0" gradientUnits="userSpaceOnUse" x1="2148.0" y1="1395.2" x2="2120.6" y2="1457.0"/><linearGradient id="g204" href="#s0" gradientUnits="userSpaceOnUse" x1="2158.0" y1="1399.7" x2="2131.0" y2="1460.4"/><linearGradient id="g205" href="#s0" gradientUnits="userSpaceOnUse" x1="2168.0" y1="1404.1" x2="2141.5" y2="1463.8"/><linearGradient id="g206" href="#s0" gradientUnits="userSpaceOnUse" x1="2178.0" y1="1408.5" x2="2151.9" y2="1467.2"/><linearGradient id="g207" href="#s0" gradientUnits="userSpaceOnUse" x1="2188.0" y1="1413.0" x2="2162.4" y2="1470.6"/><linearGradient id="g208" href="#s0" gradientUnits="userSpaceOnUse" x1="2198.0" y1="1417.4" x2="2172.9" y2="1474.0"/><linearGradient id="g209" href="#s0" gradientUnits="userSpaceOnUse" x1="2208.0" y1="1421.9" x2="2183.3" y2="1477.4"/><linearGradient id="g210" href="#s0" gradientUnits="userSpaceOnUse" x1="2218.0" y1="1426.3" x2="2193.8" y2="1480.8"/><linearGradient id="g211" href="#s0" gradientUnits="userSpaceOnUse" x1="2228.0" y1="1430.7" x2="2204.2" y2="1484.2"/><linearGradient id="g212" href="#s0" gradientUnits="userSpaceOnUse" x1="2238.0" y1="1435.2" x2="2214.6" y2="1487.5"/><linearGradient id="g213" href="#s0" gradientUnits="userSpaceOnUse" x1="2248.0" y1="1439.7" x2="2225.1" y2="1490.9"/><linearGradient id="g214" href="#s0" gradientUnits="userSpaceOnUse" x1="2258.0" y1="1444.1" x2="2235.6" y2="1494.4"/><linearGradient id="g215" href="#s0" gradientUnits="userSpaceOnUse" x1="2268.0" y1="1448.6" x2="2246.0" y2="1497.8"/><linearGradient id="g216" href="#s0" gradientUnits="userSpaceOnUse" x1="2278.0" y1="1453.1" x2="2256.5" y2="1501.2"/><linearGradient id="g217" href="#s0" gradientUnits="userSpaceOnUse" x1="2288.0" y1="1457.5" x2="2267.0" y2="1504.6"/><linearGradient id="g218" href="#s0" gradientUnits="userSpaceOnUse" x1="2298.0" y1="1462.2" x2="2276.4" y2="1506.8"/><linearGradient id="g219" href="#s0" gradientUnits="userSpaceOnUse" x1="2308.0" y1="1467.5" x2="2285.2" y2="1507.4"/><linearGradient id="g220" href="#s0" gradientUnits="userSpaceOnUse" x1="2318.0" y1="1473.2" x2="2296.2" y2="1511.2"/><linearGradient id="g221" href="#s0" gradientUnits="userSpaceOnUse" x1="2328.0" y1="1478.9" x2="2307.3" y2="1515.1"/><linearGradient id="g222" href="#s0" gradientUnits="userSpaceOnUse" x1="2338.0" y1="1484.6" x2="2318.4" y2="1518.9"/><linearGradient id="g223" href="#s0" gradientUnits="userSpaceOnUse" x1="2348.0" y1="1490.3" x2="2329.5" y2="1522.7"/><linearGradient id="g224" href="#s0" gradientUnits="userSpaceOnUse" x1="2358.0" y1="1496.0" x2="2340.5" y2="1526.5"/><linearGradient id="g225" href="#s0" gradientUnits="userSpaceOnUse" x1="2368.0" y1="1501.8" x2="2351.6" y2="1530.4"/><linearGradient id="g226" href="#s0" gradientUnits="userSpaceOnUse" x1="2378.0" y1="1507.5" x2="2362.7" y2="1534.2"/><linearGradient id="g227" href="#s0" gradientUnits="userSpaceOnUse" x1="2388.0" y1="1513.2" x2="2373.8" y2="1538.1"/><linearGradient id="g228" href="#s0" gradientUnits="userSpaceOnUse" x1="2398.0" y1="1519.0" x2="2384.8" y2="1541.9"/><linearGradient id="g229" href="#s0" gradientUnits="userSpaceOnUse" x1="2408.0" y1="1524.7" x2="2395.9" y2="1545.8"/><linearGradient id="g230" href="#s0" gradientUnits="userSpaceOnUse" x1="2418.0" y1="1530.4" x2="2407.0" y2="1549.6"/><linearGradient id="g231" href="#s0" gradientUnits="userSpaceOnUse" x1="2428.0" y1="1536.1" x2="2418.1" y2="1553.5"/><linearGradient id="s1"><stop offset="0" stop-color="#9c2c12" stop-opacity="0"/><stop offset="0.3" stop-color="#8e2a94" stop-opacity="0.95"/><stop offset="0.6" stop-color="#942a88" stop-opacity="0.9"/><stop offset="1" stop-color="#9c2c12" stop-opacity="0"/></linearGradient><linearGradient id="g232" href="#s1" gradientUnits="userSpaceOnUse" x1="1410.1" y1="662.0" x2="1408.5" y2="669.8"/><linearGradient id="g233" href="#s1" gradientUnits="userSpaceOnUse" x1="1430.3" y1="666.1" x2="1427.1" y2="681.9"/><linearGradient id="g234" href="#s1" gradientUnits="userSpaceOnUse" x1="1450.5" y1="670.1" x2="1445.7" y2="693.9"/><linearGradient id="g235" href="#s1" gradientUnits="userSpaceOnUse" x1="1470.7" y1="674.1" x2="1464.4" y2="705.9"/><linearGradient id="g236" href="#s1" gradientUnits="userSpaceOnUse" x1="1490.9" y1="678.2" x2="1482.9" y2="717.7"/><linearGradient id="g237" href="#s1" gradientUnits="userSpaceOnUse" x1="1511.1" y1="682.5" x2="1501.1" y2="726.2"/><linearGradient id="g238" href="#s1" gradientUnits="userSpaceOnUse" x1="1531.3" y1="687.2" x2="1520.9" y2="732.4"/><linearGradient id="g239" href="#s1" gradientUnits="userSpaceOnUse" x1="1551.5" y1="691.8" x2="1540.8" y2="738.6"/><linearGradient id="g240" href="#s1" gradientUnits="userSpaceOnUse" x1="1571.7" y1="696.4" x2="1560.6" y2="744.9"/><linearGradient id="g241" href="#s1" gradientUnits="userSpaceOnUse" x1="1591.9" y1="701.1" x2="1580.4" y2="751.1"/><linearGradient id="g242" href="#s1" gradientUnits="userSpaceOnUse" x1="1612.1" y1="705.7" x2="1600.3" y2="757.3"/><linearGradient id="g243" href="#s1" gradientUnits="userSpaceOnUse" x1="1632.3" y1="710.3" x2="1620.1" y2="763.5"/><linearGradient id="g244" href="#s1" gradientUnits="userSpaceOnUse" x1="1652.5" y1="714.9" x2="1639.9" y2="769.8"/><linearGradient id="g245" href="#s1" gradientUnits="userSpaceOnUse" x1="1672.7" y1="719.6" x2="1659.8" y2="776.0"/><linearGradient id="g246" href="#s1" gradientUnits="userSpaceOnUse" x1="1692.9" y1="724.2" x2="1679.6" y2="782.2"/><linearGradient id="g247" href="#s1" gradientUnits="userSpaceOnUse" x1="1713.1" y1="728.8" x2="1699.4" y2="788.5"/><linearGradient id="g248" href="#s1" gradientUnits="userSpaceOnUse" x1="1733.3" y1="733.7" x2="1718.0" y2="793.9"/><linearGradient id="g249" href="#s1" gradientUnits="userSpaceOnUse" x1="1753.5" y1="740.1" x2="1732.8" y2="795.4"/><linearGradient id="g250" href="#s1" gradientUnits="userSpaceOnUse" x1="1773.7" y1="747.6" x2="1753.9" y2="800.4"/><linearGradient id="g251" href="#s1" gradientUnits="userSpaceOnUse" x1="1793.9" y1="755.2" x2="1775.0" y2="805.5"/><linearGradient id="g252" href="#s1" gradientUnits="userSpaceOnUse" x1="1814.1" y1="762.8" x2="1796.2" y2="810.6"/><linearGradient id="g253" href="#s1" gradientUnits="userSpaceOnUse" x1="1834.3" y1="770.4" x2="1817.3" y2="815.6"/><linearGradient id="g254" href="#s1" gradientUnits="userSpaceOnUse" x1="1854.5" y1="777.9" x2="1838.5" y2="821.1"/><linearGradient id="g255" href="#s1" gradientUnits="userSpaceOnUse" x1="1874.7" y1="785.1" x2="1859.8" y2="827.8"/><linearGradient id="g256" href="#s1" gradientUnits="userSpaceOnUse" x1="1894.9" y1="792.2" x2="1880.0" y2="834.7"/><linearGradient id="g257" href="#s1" gradientUnits="userSpaceOnUse" x1="1915.1" y1="799.3" x2="1900.3" y2="841.6"/><linearGradient id="g258" href="#s1" gradientUnits="userSpaceOnUse" x1="1935.3" y1="806.4" x2="1920.6" y2="848.4"/><linearGradient id="g259" href="#s1" gradientUnits="userSpaceOnUse" x1="1955.5" y1="813.5" x2="1940.5" y2="855.1"/><linearGradient id="g260" href="#s1" gradientUnits="userSpaceOnUse" x1="1975.7" y1="821.2" x2="1959.9" y2="861.4"/><linearGradient id="g261" href="#s1" gradientUnits="userSpaceOnUse" x1="1995.9" y1="829.1" x2="1980.3" y2="868.7"/><linearGradient id="g262" href="#s1" gradientUnits="userSpaceOnUse" x1="2016.1" y1="837.0" x2="2000.8" y2="876.0"/><linearGradient id="g263" href="#s1" gradientUnits="userSpaceOnUse" x1="2036.3" y1="845.0" x2="2021.2" y2="883.3"/><linearGradient id="g264" href="#s1" gradientUnits="userSpaceOnUse" x1="2056.5" y1="852.9" x2="2041.7" y2="890.6"/><linearGradient id="g265" href="#s1" gradientUnits="userSpaceOnUse" x1="2076.7" y1="860.8" x2="2062.1" y2="898.0"/><linearGradient id="g266" href="#s1" gradientUnits="userSpaceOnUse" x1="2096.9" y1="869.2" x2="2081.8" y2="904.2"/><linearGradient id="g267" href="#s1" gradientUnits="userSpaceOnUse" x1="2117.1" y1="878.6" x2="2101.5" y2="909.6"/><linearGradient id="g268" href="#s1" gradientUnits="userSpaceOnUse" x1="2137.3" y1="888.7" x2="2123.2" y2="916.7"/><linearGradient id="g269" href="#s1" gradientUnits="userSpaceOnUse" x1="2157.5" y1="898.9" x2="2145.0" y2="923.9"/><linearGradient id="g270" href="#s1" gradientUnits="userSpaceOnUse" x1="2177.7" y1="909.0" x2="2166.7" y2="931.0"/><linearGradient id="g271" href="#s1" gradientUnits="userSpaceOnUse" x1="2197.9" y1="919.2" x2="2188.4" y2="938.1"/><linearGradient id="g272" href="#s1" gradientUnits="userSpaceOnUse" x1="2218.1" y1="929.3" x2="2210.1" y2="945.3"/><linearGradient id="g273" href="#s1" gradientUnits="userSpaceOnUse" x1="2238.3" y1="939.5" x2="2231.8" y2="952.4"/><linearGradient id="g274" href="#s1" gradientUnits="userSpaceOnUse" x1="2258.5" y1="949.6" x2="2253.5" y2="959.5"/><linearGradient id="g275" href="#s1" gradientUnits="userSpaceOnUse" x1="2278.7" y1="959.8" x2="2275.2" y2="966.7"/><linearGradient id="g276" href="#s1" gradientUnits="userSpaceOnUse" x1="2298.9" y1="969.9" x2="2296.9" y2="973.8"/><linearGradient id="s2"><stop offset="0" stop-color="#8a9a20"/><stop offset="0.1" stop-color="#4a9c26"/><stop offset="0.25" stop-color="#14957a"/><stop offset="0.42" stop-color="#1d5fae"/><stop offset="0.62" stop-color="#7a2aa4"/><stop offset="0.8" stop-color="#9a2a86" stop-opacity="0.7"/><stop offset="1.0" stop-color="#9c2c12" stop-opacity="0"/></linearGradient><linearGradient id="g277" href="#s2" gradientUnits="userSpaceOnUse" x1="795.0" y1="562.8" x2="794.5" y2="567.6"/><linearGradient id="g278" href="#s2" gradientUnits="userSpaceOnUse" x1="809.1" y1="564.5" x2="808.4" y2="571.1"/><linearGradient id="g279" href="#s2" gradientUnits="userSpaceOnUse" x1="823.2" y1="566.2" x2="822.3" y2="574.5"/><linearGradient id="g280" href="#s2" gradientUnits="userSpaceOnUse" x1="837.3" y1="567.8" x2="836.1" y2="577.9"/><linearGradient id="g281" href="#s2" gradientUnits="userSpaceOnUse" x1="851.4" y1="569.5" x2="850.0" y2="581.3"/><linearGradient id="g282" href="#s2" gradientUnits="userSpaceOnUse" x1="865.5" y1="571.2" x2="863.9" y2="584.7"/><linearGradient id="g283" href="#s2" gradientUnits="userSpaceOnUse" x1="879.6" y1="572.8" x2="877.8" y2="588.1"/><linearGradient id="g284" href="#s2" gradientUnits="userSpaceOnUse" x1="893.7" y1="574.5" x2="891.7" y2="591.5"/><linearGradient id="g285" href="#s2" gradientUnits="userSpaceOnUse" x1="907.8" y1="576.2" x2="905.6" y2="594.9"/><linearGradient id="g286" href="#s2" gradientUnits="userSpaceOnUse" x1="921.9" y1="577.9" x2="919.5" y2="598.3"/><linearGradient id="g287" href="#s2" gradientUnits="userSpaceOnUse" x1="936.0" y1="579.5" x2="933.5" y2="601.5"/><linearGradient id="g288" href="#s2" gradientUnits="userSpaceOnUse" x1="950.1" y1="580.8" x2="948.2" y2="603.8"/><linearGradient id="g289" href="#s2" gradientUnits="userSpaceOnUse" x1="964.2" y1="582.0" x2="962.2" y2="605.1"/><linearGradient id="g290" href="#s2" gradientUnits="userSpaceOnUse" x1="978.3" y1="583.2" x2="976.3" y2="606.3"/><linearGradient id="g291" href="#s2" gradientUnits="userSpaceOnUse" x1="992.4" y1="584.4" x2="990.4" y2="607.6"/><linearGradient id="g292" href="#s2" gradientUnits="userSpaceOnUse" x1="1006.4" y1="585.5" x2="1004.5" y2="608.9"/><linearGradient id="g293" href="#s2" gradientUnits="userSpaceOnUse" x1="1020.5" y1="586.7" x2="1018.6" y2="610.2"/><linearGradient id="g294" href="#s2" gradientUnits="userSpaceOnUse" x1="1034.6" y1="587.9" x2="1032.7" y2="611.5"/><linearGradient id="g295" href="#s2" gradientUnits="userSpaceOnUse" x1="1048.7" y1="589.1" x2="1046.7" y2="612.8"/><linearGradient id="g296" href="#s2" gradientUnits="userSpaceOnUse" x1="1062.8" y1="590.4" x2="1060.2" y2="614.8"/><linearGradient id="g297" href="#s2" gradientUnits="userSpaceOnUse" x1="1076.9" y1="592.0" x2="1073.8" y2="618.0"/><linearGradient id="g298" href="#s2" gradientUnits="userSpaceOnUse" x1="1091.0" y1="593.7" x2="1087.7" y2="621.7"/><linearGradient id="g299" href="#s2" gradientUnits="userSpaceOnUse" x1="1105.1" y1="595.4" x2="1101.5" y2="625.3"/><linearGradient id="g300" href="#s2" gradientUnits="userSpaceOnUse" x1="1119.2" y1="597.1" x2="1115.4" y2="628.9"/><linearGradient id="g301" href="#s2" gradientUnits="userSpaceOnUse" x1="1133.3" y1="598.8" x2="1129.2" y2="632.6"/><linearGradient id="g302" href="#s2" gradientUnits="userSpaceOnUse" x1="1147.4" y1="600.5" x2="1143.1" y2="636.2"/><linearGradient id="g303" href="#s2" gradientUnits="userSpaceOnUse" x1="1161.5" y1="602.4" x2="1155.7" y2="639.6"/><linearGradient id="g304" href="#s2" gradientUnits="userSpaceOnUse" x1="1175.6" y1="604.8" x2="1168.7" y2="643.1"/><linearGradient id="g305" href="#s2" gradientUnits="userSpaceOnUse" x1="1189.7" y1="607.3" x2="1182.5" y2="647.0"/><linearGradient id="g306" href="#s2" gradientUnits="userSpaceOnUse" x1="1203.8" y1="609.9" x2="1196.4" y2="650.9"/><linearGradient id="g307" href="#s2" gradientUnits="userSpaceOnUse" x1="1217.8" y1="612.4" x2="1210.2" y2="654.8"/><linearGradient id="g308" href="#s2" gradientUnits="userSpaceOnUse" x1="1231.9" y1="614.9" x2="1224.1" y2="658.7"/><linearGradient id="g309" href="#s2" gradientUnits="userSpaceOnUse" x1="1246.0" y1="617.5" x2="1237.9" y2="662.6"/><linearGradient id="g310" href="#s2" gradientUnits="userSpaceOnUse" x1="1260.1" y1="620.5" x2="1248.9" y2="665.7"/><linearGradient id="g311" href="#s2" gradientUnits="userSpaceOnUse" x1="1274.2" y1="624.4" x2="1260.2" y2="669.3"/><linearGradient id="g312" href="#s2" gradientUnits="userSpaceOnUse" x1="1288.3" y1="628.8" x2="1273.9" y2="674.8"/><linearGradient id="g313" href="#s2" gradientUnits="userSpaceOnUse" x1="1302.4" y1="633.3" x2="1287.7" y2="680.4"/><linearGradient id="g314" href="#s2" gradientUnits="userSpaceOnUse" x1="1316.5" y1="637.7" x2="1301.4" y2="685.9"/><linearGradient id="g315" href="#s2" gradientUnits="userSpaceOnUse" x1="1330.6" y1="642.1" x2="1315.2" y2="691.4"/><linearGradient id="g316" href="#s2" gradientUnits="userSpaceOnUse" x1="1344.7" y1="646.0" x2="1331.9" y2="697.4"/><linearGradient id="g317" href="#s2" gradientUnits="userSpaceOnUse" x1="1358.8" y1="649.4" x2="1346.7" y2="700.5"/><linearGradient id="g318" href="#s2" gradientUnits="userSpaceOnUse" x1="1372.9" y1="652.7" x2="1361.0" y2="703.1"/><linearGradient id="g319" href="#s2" gradientUnits="userSpaceOnUse" x1="1387.0" y1="656.1" x2="1375.3" y2="705.6"/><linearGradient id="g320" href="#s2" gradientUnits="userSpaceOnUse" x1="1401.1" y1="659.4" x2="1389.6" y2="708.2"/><linearGradient id="g321" href="#s2" gradientUnits="userSpaceOnUse" x1="1415.2" y1="662.7" x2="1403.8" y2="710.8"/><linearGradient id="g322" href="#s2" gradientUnits="userSpaceOnUse" x1="1429.2" y1="666.0" x2="1418.1" y2="713.3"/><linearGradient id="g323" href="#s2" gradientUnits="userSpaceOnUse" x1="1443.3" y1="669.4" x2="1432.4" y2="715.9"/><linearGradient id="g324" href="#s2" gradientUnits="userSpaceOnUse" x1="1457.4" y1="672.7" x2="1446.6" y2="718.4"/><linearGradient id="g325" href="#s2" gradientUnits="userSpaceOnUse" x1="1471.5" y1="676.0" x2="1460.9" y2="721.0"/><linearGradient id="g326" href="#s2" gradientUnits="userSpaceOnUse" x1="1485.6" y1="678.7" x2="1478.8" y2="726.0"/><linearGradient id="g327" href="#s2" gradientUnits="userSpaceOnUse" x1="1499.7" y1="680.6" x2="1493.0" y2="730.7"/><linearGradient id="g328" href="#s2" gradientUnits="userSpaceOnUse" x1="1513.8" y1="682.5" x2="1506.8" y2="735.3"/><linearGradient id="g329" href="#s2" gradientUnits="userSpaceOnUse" x1="1527.9" y1="684.4" x2="1520.5" y2="740.0"/><linearGradient id="g330" href="#s2" gradientUnits="userSpaceOnUse" x1="1542.0" y1="686.6" x2="1531.8" y2="743.0"/><linearGradient id="g331" href="#s2" gradientUnits="userSpaceOnUse" x1="1556.1" y1="689.4" x2="1544.5" y2="745.1"/><linearGradient id="g332" href="#s2" gradientUnits="userSpaceOnUse" x1="1570.2" y1="692.3" x2="1558.7" y2="747.4"/><linearGradient id="g333" href="#s2" gradientUnits="userSpaceOnUse" x1="1584.3" y1="695.2" x2="1572.9" y2="749.6"/><linearGradient id="g334" href="#s2" gradientUnits="userSpaceOnUse" x1="1598.4" y1="698.2" x2="1587.2" y2="751.9"/><linearGradient id="g335" href="#s2" gradientUnits="userSpaceOnUse" x1="1612.5" y1="701.1" x2="1601.4" y2="754.2"/><linearGradient id="g336" href="#s2" gradientUnits="userSpaceOnUse" x1="1626.6" y1="704.0" x2="1615.6" y2="756.4"/><linearGradient id="g337" href="#s2" gradientUnits="userSpaceOnUse" x1="1640.6" y1="707.0" x2="1629.9" y2="758.7"/><linearGradient id="g338" href="#s2" gradientUnits="userSpaceOnUse" x1="1654.7" y1="709.9" x2="1644.0" y2="760.8"/><linearGradient id="g339" href="#s2" gradientUnits="userSpaceOnUse" x1="1668.8" y1="713.0" x2="1657.8" y2="762.0"/><linearGradient id="g340" href="#s2" gradientUnits="userSpaceOnUse" x1="1682.9" y1="716.2" x2="1672.4" y2="762.8"/><linearGradient id="g341" href="#s2" gradientUnits="userSpaceOnUse" x1="1697.0" y1="719.3" x2="1687.1" y2="763.6"/><linearGradient id="g342" href="#s2" gradientUnits="userSpaceOnUse" x1="1711.1" y1="722.5" x2="1701.7" y2="764.4"/><linearGradient id="g343" href="#s2" gradientUnits="userSpaceOnUse" x1="1725.2" y1="725.7" x2="1716.3" y2="765.3"/><linearGradient id="g344" href="#s2" gradientUnits="userSpaceOnUse" x1="1739.3" y1="728.5" x2="1732.7" y2="766.7"/><linearGradient id="g345" href="#s2" gradientUnits="userSpaceOnUse" x1="1753.4" y1="730.5" x2="1749.3" y2="767.5"/><linearGradient id="g346" href="#s2" gradientUnits="userSpaceOnUse" x1="1767.5" y1="732.1" x2="1763.5" y2="767.6"/><linearGradient id="g347" href="#s2" gradientUnits="userSpaceOnUse" x1="1781.6" y1="733.6" x2="1777.8" y2="767.6"/><linearGradient id="g348" href="#s2" gradientUnits="userSpaceOnUse" x1="1795.7" y1="735.2" x2="1792.1" y2="767.3"/><linearGradient id="g349" href="#s2" gradientUnits="userSpaceOnUse" x1="1809.8" y1="738.9" x2="1800.1" y2="761.8"/><linearGradient id="g350" href="#s2" gradientUnits="userSpaceOnUse" x1="1823.9" y1="744.9" x2="1817.4" y2="759.9"/><linearGradient id="g351" href="#s2" gradientUnits="userSpaceOnUse" x1="1838.0" y1="751.0" x2="1834.8" y2="758.2"/><linearGradient id="s3"><stop offset="0" stop-color="#8a9a20"/><stop offset="0.3" stop-color="#2a9a5a"/><stop offset="0.55" stop-color="#1d5fae"/><stop offset="0.8" stop-color="#8a2a9e"/><stop offset="1" stop-color="#9c2c12"/></linearGradient><linearGradient id="g352" href="#s3" gradientUnits="userSpaceOnUse" x1="707.1" y1="461.7" x2="708.3" y2="449.8"/><linearGradient id="g353" href="#s3" gradientUnits="userSpaceOnUse" x1="721.2" y1="463.1" x2="722.4" y2="451.2"/><linearGradient id="g354" href="#s3" gradientUnits="userSpaceOnUse" x1="735.4" y1="464.6" x2="736.6" y2="452.7"/><linearGradient id="g355" href="#s3" gradientUnits="userSpaceOnUse" x1="749.5" y1="466.2" x2="751.0" y2="454.4"/><linearGradient id="g356" href="#s3" gradientUnits="userSpaceOnUse" x1="763.7" y1="468.0" x2="765.1" y2="456.1"/><linearGradient id="g357" href="#s3" gradientUnits="userSpaceOnUse" x1="777.8" y1="469.7" x2="779.3" y2="457.9"/><linearGradient id="g358" href="#s3" gradientUnits="userSpaceOnUse" x1="792.0" y1="471.5" x2="793.4" y2="459.7"/><linearGradient id="g359" href="#s3" gradientUnits="userSpaceOnUse" x1="806.1" y1="473.3" x2="807.6" y2="461.4"/><linearGradient id="g360" href="#s3" gradientUnits="userSpaceOnUse" x1="820.2" y1="475.0" x2="821.7" y2="463.2"/><linearGradient id="g361" href="#s3" gradientUnits="userSpaceOnUse" x1="834.4" y1="476.8" x2="835.9" y2="465.0"/><linearGradient id="g362" href="#s3" gradientUnits="userSpaceOnUse" x1="848.5" y1="478.6" x2="850.0" y2="466.8"/><linearGradient id="g363" href="#s3" gradientUnits="userSpaceOnUse" x1="862.7" y1="481.1" x2="865.5" y2="469.1"/><linearGradient id="g364" href="#s3" gradientUnits="userSpaceOnUse" x1="876.8" y1="484.7" x2="880.5" y2="471.7"/><linearGradient id="g365" href="#s3" gradientUnits="userSpaceOnUse" x1="891.0" y1="488.7" x2="895.1" y2="474.0"/><linearGradient id="g366" href="#s3" gradientUnits="userSpaceOnUse" x1="905.1" y1="492.7" x2="909.7" y2="476.3"/><linearGradient id="g367" href="#s3" gradientUnits="userSpaceOnUse" x1="919.3" y1="496.7" x2="924.3" y2="478.7"/><linearGradient id="g368" href="#s3" gradientUnits="userSpaceOnUse" x1="933.4" y1="500.6" x2="938.9" y2="481.0"/><linearGradient id="g369" href="#s3" gradientUnits="userSpaceOnUse" x1="947.6" y1="503.8" x2="951.2" y2="482.4"/><linearGradient id="g370" href="#s3" gradientUnits="userSpaceOnUse" x1="961.7" y1="506.2" x2="965.4" y2="484.8"/><linearGradient id="g371" href="#s3" gradientUnits="userSpaceOnUse" x1="975.9" y1="508.6" x2="979.5" y2="487.2"/><linearGradient id="g372" href="#s3" gradientUnits="userSpaceOnUse" x1="990.0" y1="511.0" x2="993.7" y2="489.7"/><linearGradient id="g373" href="#s3" gradientUnits="userSpaceOnUse" x1="1004.1" y1="513.5" x2="1007.8" y2="492.1"/><linearGradient id="g374" href="#s3" gradientUnits="userSpaceOnUse" x1="1018.3" y1="515.9" x2="1021.9" y2="494.5"/><linearGradient id="g375" href="#s3" gradientUnits="userSpaceOnUse" x1="1032.4" y1="518.3" x2="1036.1" y2="496.9"/><linearGradient id="g376" href="#s3" gradientUnits="userSpaceOnUse" x1="1046.6" y1="520.7" x2="1050.2" y2="499.3"/><linearGradient id="g377" href="#s3" gradientUnits="userSpaceOnUse" x1="1060.7" y1="523.3" x2="1064.8" y2="502.1"/><linearGradient id="g378" href="#s3" gradientUnits="userSpaceOnUse" x1="1074.9" y1="526.1" x2="1079.3" y2="505.1"/><linearGradient id="g379" href="#s3" gradientUnits="userSpaceOnUse" x1="1089.0" y1="529.1" x2="1093.4" y2="508.0"/><linearGradient id="g380" href="#s3" gradientUnits="userSpaceOnUse" x1="1103.2" y1="532.1" x2="1107.6" y2="511.0"/><linearGradient id="g381" href="#s3" gradientUnits="userSpaceOnUse" x1="1117.3" y1="535.0" x2="1121.7" y2="514.0"/><linearGradient id="g382" href="#s3" gradientUnits="userSpaceOnUse" x1="1131.5" y1="538.0" x2="1135.9" y2="516.9"/><linearGradient id="g383" href="#s3" gradientUnits="userSpaceOnUse" x1="1145.6" y1="541.0" x2="1150.0" y2="519.9"/><linearGradient id="g384" href="#s3" gradientUnits="userSpaceOnUse" x1="1159.8" y1="544.0" x2="1164.4" y2="523.0"/><linearGradient id="g385" href="#s3" gradientUnits="userSpaceOnUse" x1="1173.9" y1="547.2" x2="1178.7" y2="526.3"/><linearGradient id="g386" href="#s3" gradientUnits="userSpaceOnUse" x1="1188.0" y1="550.5" x2="1192.9" y2="529.6"/><linearGradient id="g387" href="#s3" gradientUnits="userSpaceOnUse" x1="1202.2" y1="553.7" x2="1207.0" y2="532.8"/><linearGradient id="g388" href="#s3" gradientUnits="userSpaceOnUse" x1="1216.3" y1="557.0" x2="1221.1" y2="536.1"/><linearGradient id="g389" href="#s3" gradientUnits="userSpaceOnUse" x1="1230.5" y1="560.2" x2="1235.3" y2="539.3"/><linearGradient id="g390" href="#s3" gradientUnits="userSpaceOnUse" x1="1244.6" y1="563.5" x2="1249.4" y2="542.6"/><linearGradient id="g391" href="#s3" gradientUnits="userSpaceOnUse" x1="1258.8" y1="566.8" x2="1263.7" y2="546.0"/><linearGradient id="g392" href="#s3" gradientUnits="userSpaceOnUse" x1="1272.9" y1="570.2" x2="1278.1" y2="549.5"/><linearGradient id="g393" href="#s3" gradientUnits="userSpaceOnUse" x1="1287.1" y1="573.8" x2="1292.2" y2="553.1"/><linearGradient id="g394" href="#s3" gradientUnits="userSpaceOnUse" x1="1301.2" y1="577.3" x2="1306.4" y2="556.6"/><linearGradient id="g395" href="#s3" gradientUnits="userSpaceOnUse" x1="1315.4" y1="580.8" x2="1320.5" y2="560.1"/><linearGradient id="g396" href="#s3" gradientUnits="userSpaceOnUse" x1="1329.5" y1="584.4" x2="1334.7" y2="563.7"/><linearGradient id="g397" href="#s3" gradientUnits="userSpaceOnUse" x1="1343.7" y1="587.9" x2="1348.8" y2="567.2"/><linearGradient id="g398" href="#s3" gradientUnits="userSpaceOnUse" x1="1357.8" y1="591.5" x2="1363.0" y2="570.7"/><linearGradient id="g399" href="#s3" gradientUnits="userSpaceOnUse" x1="1372.0" y1="595.0" x2="1377.1" y2="574.3"/><linearGradient id="g400" href="#s3" gradientUnits="userSpaceOnUse" x1="1386.1" y1="598.5" x2="1391.3" y2="577.8"/><linearGradient id="g401" href="#s3" gradientUnits="userSpaceOnUse" x1="1400.2" y1="602.2" x2="1405.7" y2="581.6"/><linearGradient id="g402" href="#s3" gradientUnits="userSpaceOnUse" x1="1414.4" y1="606.0" x2="1420.0" y2="585.5"/><linearGradient id="g403" href="#s3" gradientUnits="userSpaceOnUse" x1="1428.5" y1="609.8" x2="1434.2" y2="589.4"/><linearGradient id="g404" href="#s3" gradientUnits="userSpaceOnUse" x1="1442.7" y1="613.7" x2="1448.3" y2="593.3"/><linearGradient id="g405" href="#s3" gradientUnits="userSpaceOnUse" x1="1456.8" y1="617.6" x2="1462.5" y2="597.2"/><linearGradient id="g406" href="#s3" gradientUnits="userSpaceOnUse" x1="1471.0" y1="621.5" x2="1476.6" y2="601.1"/><linearGradient id="g407" href="#s3" gradientUnits="userSpaceOnUse" x1="1485.1" y1="626.2" x2="1492.5" y2="607.0"/><linearGradient id="g408" href="#s3" gradientUnits="userSpaceOnUse" x1="1499.3" y1="631.7" x2="1506.9" y2="612.7"/><linearGradient id="g409" href="#s3" gradientUnits="userSpaceOnUse" x1="1513.4" y1="637.4" x2="1521.0" y2="618.4"/><linearGradient id="g410" href="#s3" gradientUnits="userSpaceOnUse" x1="1527.6" y1="643.0" x2="1535.1" y2="624.1"/><linearGradient id="g411" href="#s3" gradientUnits="userSpaceOnUse" x1="1541.7" y1="648.4" x2="1548.6" y2="628.8"/><linearGradient id="g412" href="#s3" gradientUnits="userSpaceOnUse" x1="1555.9" y1="653.2" x2="1562.3" y2="633.3"/><linearGradient id="g413" href="#s3" gradientUnits="userSpaceOnUse" x1="1570.0" y1="657.8" x2="1576.5" y2="637.9"/><linearGradient id="g414" href="#s3" gradientUnits="userSpaceOnUse" x1="1584.1" y1="662.3" x2="1590.6" y2="642.4"/><linearGradient id="g415" href="#s3" gradientUnits="userSpaceOnUse" x1="1598.3" y1="666.9" x2="1604.8" y2="647.0"/><linearGradient id="g416" href="#s3" gradientUnits="userSpaceOnUse" x1="1612.4" y1="671.5" x2="1618.9" y2="651.6"/><linearGradient id="g417" href="#s3" gradientUnits="userSpaceOnUse" x1="1626.6" y1="676.1" x2="1633.1" y2="656.2"/><linearGradient id="g418" href="#s3" gradientUnits="userSpaceOnUse" x1="1640.7" y1="680.7" x2="1647.2" y2="660.8"/><linearGradient id="g419" href="#s3" gradientUnits="userSpaceOnUse" x1="1654.9" y1="685.2" x2="1661.0" y2="665.2"/><linearGradient id="g420" href="#s3" gradientUnits="userSpaceOnUse" x1="1669.0" y1="688.6" x2="1672.5" y2="668.5"/><linearGradient id="g421" href="#s3" gradientUnits="userSpaceOnUse" x1="1683.2" y1="691.1" x2="1686.3" y2="673.1"/><linearGradient id="g422" href="#s3" gradientUnits="userSpaceOnUse" x1="1697.3" y1="693.5" x2="1700.1" y2="677.6"/><linearGradient id="g423" href="#s3" gradientUnits="userSpaceOnUse" x1="1711.5" y1="696.0" x2="1713.9" y2="682.1"/><linearGradient id="g424" href="#s3" gradientUnits="userSpaceOnUse" x1="1725.6" y1="698.5" x2="1727.7" y2="686.7"/><linearGradient id="g425" href="#s3" gradientUnits="userSpaceOnUse" x1="1739.8" y1="701.3" x2="1742.0" y2="691.5"/><linearGradient id="g426" href="#s3" gradientUnits="userSpaceOnUse" x1="1753.9" y1="704.9" x2="1756.3" y2="696.3"/><linearGradient id="g427" href="#s3" gradientUnits="userSpaceOnUse" x1="1768.0" y1="708.9" x2="1770.3" y2="701.0"/><linearGradient id="g428" href="#s3" gradientUnits="userSpaceOnUse" x1="1782.2" y1="713.0" x2="1784.3" y2="705.7"/><linearGradient id="g429" href="#s3" gradientUnits="userSpaceOnUse" x1="1796.3" y1="717.0" x2="1798.2" y2="710.3"/><linearGradient id="g430" href="#s3" gradientUnits="userSpaceOnUse" x1="1810.5" y1="721.0" x2="1812.2" y2="715.0"/><linearGradient id="g431" href="#s3" gradientUnits="userSpaceOnUse" x1="1824.6" y1="725.0" x2="1826.1" y2="719.6"/><linearGradient id="g432" href="#s3" gradientUnits="userSpaceOnUse" x1="1838.8" y1="729.0" x2="1840.1" y2="724.3"/><linearGradient id="g433" href="#s3" gradientUnits="userSpaceOnUse" x1="1852.9" y1="733.0" x2="1854.1" y2="729.0"/><linearGradient id="s4"><stop offset="0" stop-color="#8a9a20"/><stop offset="0.2" stop-color="#14957a"/><stop offset="0.45" stop-color="#1d5fae"/><stop offset="0.7" stop-color="#8a2a9e"/><stop offset="1" stop-color="#9c2c12"/></linearGradient><linearGradient id="g434" href="#s4" gradientUnits="userSpaceOnUse" x1="725.0" y1="515.0" x2="800.0" y2="505.0"/><linearGradient id="s5"><stop offset="0" stop-color="#9a2a96"/><stop offset="0.45" stop-color="#1d5fae"/><stop offset="0.75" stop-color="#14957a"/><stop offset="1" stop-color="#8a9a20"/></linearGradient><linearGradient id="g435" href="#s5" gradientUnits="userSpaceOnUse" x1="0.0" y1="626.0" x2="0.0" y2="640.0"/><linearGradient id="g436" href="#s1" gradientUnits="userSpaceOnUse" x1="1160.2" y1="850.1" x2="1157.8" y2="854.9"/><linearGradient id="g437" href="#s1" gradientUnits="userSpaceOnUse" x1="1180.5" y1="860.3" x2="1175.8" y2="869.8"/><linearGradient id="g438" href="#s1" gradientUnits="userSpaceOnUse" x1="1200.9" y1="870.4" x2="1193.7" y2="884.7"/><linearGradient id="g439" href="#s1" gradientUnits="userSpaceOnUse" x1="1221.2" y1="880.6" x2="1211.7" y2="899.6"/><linearGradient id="g440" href="#s1" gradientUnits="userSpaceOnUse" x1="1241.5" y1="890.8" x2="1229.7" y2="914.5"/><linearGradient id="g441" href="#s1" gradientUnits="userSpaceOnUse" x1="1261.9" y1="900.9" x2="1247.0" y2="930.7"/><linearGradient id="g442" href="#s1" gradientUnits="userSpaceOnUse" x1="1282.2" y1="911.1" x2="1263.1" y2="949.3"/><linearGradient id="g443" href="#s1" gradientUnits="userSpaceOnUse" x1="1302.6" y1="921.3" x2="1278.8" y2="968.7"/><linearGradient id="g444" href="#s1" gradientUnits="userSpaceOnUse" x1="1322.9" y1="931.4" x2="1295.3" y2="987.6"/><linearGradient id="g445" href="#s1" gradientUnits="userSpaceOnUse" x1="1343.2" y1="940.9" x2="1316.2" y2="1001.5"/><linearGradient id="g446" href="#s1" gradientUnits="userSpaceOnUse" x1="1363.6" y1="950.0" x2="1337.9" y2="1007.6"/><linearGradient id="g447" href="#s1" gradientUnits="userSpaceOnUse" x1="1383.9" y1="959.1" x2="1359.6" y2="1013.7"/><linearGradient id="g448" href="#s1" gradientUnits="userSpaceOnUse" x1="1404.3" y1="968.1" x2="1381.3" y2="1019.7"/><linearGradient id="g449" href="#s1" gradientUnits="userSpaceOnUse" x1="1424.6" y1="977.2" x2="1402.9" y2="1025.8"/><linearGradient id="g450" href="#s1" gradientUnits="userSpaceOnUse" x1="1445.0" y1="986.3" x2="1424.6" y2="1031.9"/><linearGradient id="g451" href="#s1" gradientUnits="userSpaceOnUse" x1="1465.3" y1="995.3" x2="1446.2" y2="1038.8"/><linearGradient id="g452" href="#s1" gradientUnits="userSpaceOnUse" x1="1485.6" y1="1004.2" x2="1467.1" y2="1046.5"/><linearGradient id="g453" href="#s1" gradientUnits="userSpaceOnUse" x1="1506.0" y1="1013.1" x2="1487.9" y2="1054.3"/><linearGradient id="g454" href="#s1" gradientUnits="userSpaceOnUse" x1="1526.3" y1="1022.0" x2="1508.7" y2="1062.2"/><linearGradient id="g455" href="#s1" gradientUnits="userSpaceOnUse" x1="1546.7" y1="1030.6" x2="1530.3" y2="1070.8"/><linearGradient id="g456" href="#s1" gradientUnits="userSpaceOnUse" x1="1567.0" y1="1038.8" x2="1551.0" y2="1078.7"/><linearGradient id="g457" href="#s1" gradientUnits="userSpaceOnUse" x1="1587.3" y1="1046.9" x2="1571.5" y2="1086.4"/><linearGradient id="g458" href="#s1" gradientUnits="userSpaceOnUse" x1="1607.7" y1="1055.1" x2="1592.1" y2="1094.1"/><linearGradient id="g459" href="#s1" gradientUnits="userSpaceOnUse" x1="1628.0" y1="1063.2" x2="1612.6" y2="1101.8"/><linearGradient id="g460" href="#s1" gradientUnits="userSpaceOnUse" x1="1648.4" y1="1071.3" x2="1633.1" y2="1109.5"/><linearGradient id="g461" href="#s1" gradientUnits="userSpaceOnUse" x1="1668.7" y1="1079.7" x2="1653.1" y2="1116.7"/><linearGradient id="g462" href="#s1" gradientUnits="userSpaceOnUse" x1="1689.0" y1="1088.3" x2="1673.7" y2="1124.4"/><linearGradient id="g463" href="#s1" gradientUnits="userSpaceOnUse" x1="1709.4" y1="1097.0" x2="1694.4" y2="1132.2"/><linearGradient id="g464" href="#s1" gradientUnits="userSpaceOnUse" x1="1729.7" y1="1105.6" x2="1715.1" y2="1140.0"/><linearGradient id="g465" href="#s1" gradientUnits="userSpaceOnUse" x1="1750.1" y1="1114.2" x2="1736.2" y2="1147.6"/><linearGradient id="g466" href="#s1" gradientUnits="userSpaceOnUse" x1="1770.4" y1="1122.7" x2="1757.1" y2="1154.6"/><linearGradient id="g467" href="#s1" gradientUnits="userSpaceOnUse" x1="1790.8" y1="1131.1" x2="1778.1" y2="1161.6"/><linearGradient id="g468" href="#s1" gradientUnits="userSpaceOnUse" x1="1811.1" y1="1139.6" x2="1799.0" y2="1168.7"/><linearGradient id="g469" href="#s1" gradientUnits="userSpaceOnUse" x1="1831.4" y1="1148.1" x2="1819.9" y2="1175.7"/><linearGradient id="g470" href="#s1" gradientUnits="userSpaceOnUse" x1="1851.8" y1="1156.5" x2="1841.0" y2="1182.7"/><linearGradient id="g471" href="#s1" gradientUnits="userSpaceOnUse" x1="1872.1" y1="1164.4" x2="1863.3" y2="1188.6"/><linearGradient id="g472" href="#s1" gradientUnits="userSpaceOnUse" x1="1892.5" y1="1171.8" x2="1885.1" y2="1192.0"/><linearGradient id="g473" href="#s1" gradientUnits="userSpaceOnUse" x1="1912.8" y1="1179.2" x2="1906.9" y2="1195.5"/><linearGradient id="g474" href="#s1" gradientUnits="userSpaceOnUse" x1="1933.1" y1="1186.5" x2="1928.6" y2="1199.0"/><linearGradient id="g475" href="#s1" gradientUnits="userSpaceOnUse" x1="1953.5" y1="1193.9" x2="1950.4" y2="1202.4"/><linearGradient id="g476" href="#s1" gradientUnits="userSpaceOnUse" x1="1973.8" y1="1201.3" x2="1972.2" y2="1205.9"/><linearGradient id="s6"><stop offset="0" stop-color="#8a9a20"/><stop offset="0.08" stop-color="#3c9e2a"/><stop offset="0.2" stop-color="#14957a"/><stop offset="0.34" stop-color="#1d5fae"/><stop offset="0.55" stop-color="#7e2aa2"/><stop offset="0.8" stop-color="#962a8c" stop-opacity="0.75"/><stop offset="1" stop-color="#9c2c12" stop-opacity="0"/></linearGradient><linearGradient id="g477" href="#s6" gradientUnits="userSpaceOnUse" x1="605.0" y1="657.5" x2="609.8" y2="652.0"/><linearGradient id="g478" href="#s6" gradientUnits="userSpaceOnUse" x1="615.0" y1="666.2" x2="622.4" y2="657.7"/><linearGradient id="g479" href="#s6" gradientUnits="userSpaceOnUse" x1="625.0" y1="674.9" x2="635.0" y2="663.5"/><linearGradient id="g480" href="#s6" gradientUnits="userSpaceOnUse" x1="635.0" y1="683.6" x2="647.6" y2="669.2"/><linearGradient id="g481" href="#s6" gradientUnits="userSpaceOnUse" x1="645.0" y1="691.3" x2="658.9" y2="670.5"/><linearGradient id="g482" href="#s6" gradientUnits="userSpaceOnUse" x1="655.0" y1="698.0" x2="670.8" y2="674.3"/><linearGradient id="g483" href="#s6" gradientUnits="userSpaceOnUse" x1="665.0" y1="704.7" x2="682.7" y2="678.1"/><linearGradient id="g484" href="#s6" gradientUnits="userSpaceOnUse" x1="675.0" y1="711.3" x2="694.7" y2="681.9"/><linearGradient id="g485" href="#s6" gradientUnits="userSpaceOnUse" x1="685.0" y1="718.0" x2="706.6" y2="685.6"/><linearGradient id="g486" href="#s6" gradientUnits="userSpaceOnUse" x1="695.0" y1="724.7" x2="718.5" y2="689.4"/><linearGradient id="g487" href="#s6" gradientUnits="userSpaceOnUse" x1="705.0" y1="730.3" x2="724.9" y2="686.2"/><linearGradient id="g488" href="#s6" gradientUnits="userSpaceOnUse" x1="715.0" y1="734.8" x2="735.0" y2="690.6"/><linearGradient id="g489" href="#s6" gradientUnits="userSpaceOnUse" x1="725.0" y1="739.3" x2="745.1" y2="694.9"/><linearGradient id="g490" href="#s6" gradientUnits="userSpaceOnUse" x1="735.0" y1="743.9" x2="755.4" y2="699.6"/><linearGradient id="g491" href="#s6" gradientUnits="userSpaceOnUse" x1="745.0" y1="748.6" x2="766.2" y2="704.8"/><linearGradient id="g492" href="#s6" gradientUnits="userSpaceOnUse" x1="755.0" y1="753.4" x2="776.4" y2="709.2"/><linearGradient id="g493" href="#s6" gradientUnits="userSpaceOnUse" x1="765.0" y1="758.2" x2="786.7" y2="713.3"/><linearGradient id="g494" href="#s6" gradientUnits="userSpaceOnUse" x1="775.0" y1="763.1" x2="797.1" y2="717.4"/><linearGradient id="g495" href="#s6" gradientUnits="userSpaceOnUse" x1="785.0" y1="767.9" x2="807.5" y2="721.4"/><linearGradient id="g496" href="#s6" gradientUnits="userSpaceOnUse" x1="795.0" y1="772.7" x2="817.9" y2="725.4"/><linearGradient id="g497" href="#s6" gradientUnits="userSpaceOnUse" x1="805.0" y1="777.6" x2="828.3" y2="729.4"/><linearGradient id="g498" href="#s6" gradientUnits="userSpaceOnUse" x1="815.0" y1="781.9" x2="834.6" y2="729.1"/><linearGradient id="g499" href="#s6" gradientUnits="userSpaceOnUse" x1="825.0" y1="785.6" x2="844.7" y2="732.6"/><linearGradient id="g500" href="#s6" gradientUnits="userSpaceOnUse" x1="835.0" y1="789.3" x2="854.8" y2="736.1"/><linearGradient id="g501" href="#s6" gradientUnits="userSpaceOnUse" x1="845.0" y1="793.0" x2="864.9" y2="739.6"/><linearGradient id="g502" href="#s6" gradientUnits="userSpaceOnUse" x1="855.0" y1="796.6" x2="874.1" y2="742.0"/><linearGradient id="g503" href="#s6" gradientUnits="userSpaceOnUse" x1="865.0" y1="800.1" x2="884.0" y2="744.2"/><linearGradient id="g504" href="#s6" gradientUnits="userSpaceOnUse" x1="875.0" y1="803.5" x2="894.4" y2="746.6"/><linearGradient id="g505" href="#s6" gradientUnits="userSpaceOnUse" x1="885.0" y1="806.9" x2="904.7" y2="749.0"/><linearGradient id="g506" href="#s6" gradientUnits="userSpaceOnUse" x1="895.0" y1="810.3" x2="915.1" y2="751.4"/><linearGradient id="g507" href="#s6" gradientUnits="userSpaceOnUse" x1="905.0" y1="813.7" x2="925.4" y2="753.8"/><linearGradient id="g508" href="#s6" gradientUnits="userSpaceOnUse" x1="915.0" y1="817.1" x2="935.7" y2="756.2"/><linearGradient id="g509" href="#s6" gradientUnits="userSpaceOnUse" x1="925.0" y1="820.5" x2="946.1" y2="758.6"/><linearGradient id="g510" href="#s6" gradientUnits="userSpaceOnUse" x1="935.0" y1="823.9" x2="956.3" y2="761.4"/><linearGradient id="g511" href="#s6" gradientUnits="userSpaceOnUse" x1="945.0" y1="827.3" x2="966.3" y2="764.7"/><linearGradient id="g512" href="#s6" gradientUnits="userSpaceOnUse" x1="955.0" y1="830.9" x2="977.7" y2="769.1"/><linearGradient id="g513" href="#s6" gradientUnits="userSpaceOnUse" x1="965.0" y1="835.5" x2="995.0" y2="780.6"/><linearGradient id="g514" href="#s6" gradientUnits="userSpaceOnUse" x1="975.0" y1="840.9" x2="1005.9" y2="784.5"/><linearGradient id="g515" href="#s6" gradientUnits="userSpaceOnUse" x1="985.0" y1="846.4" x2="1016.8" y2="788.4"/><linearGradient id="g516" href="#s6" gradientUnits="userSpaceOnUse" x1="995.0" y1="851.9" x2="1027.7" y2="792.3"/><linearGradient id="g517" href="#s6" gradientUnits="userSpaceOnUse" x1="1005.0" y1="857.4" x2="1038.5" y2="796.1"/><linearGradient id="g518" href="#s6" gradientUnits="userSpaceOnUse" x1="1015.0" y1="862.8" x2="1049.4" y2="800.0"/><linearGradient id="g519" href="#s6" gradientUnits="userSpaceOnUse" x1="1025.0" y1="868.3" x2="1060.3" y2="803.9"/><linearGradient id="g520" href="#s6" gradientUnits="userSpaceOnUse" x1="1035.0" y1="873.8" x2="1071.2" y2="807.8"/><linearGradient id="g521" href="#s6" gradientUnits="userSpaceOnUse" x1="1045.0" y1="879.3" x2="1082.0" y2="811.6"/><linearGradient id="g522" href="#s6" gradientUnits="userSpaceOnUse" x1="1055.0" y1="884.7" x2="1092.9" y2="815.5"/><linearGradient id="g523" href="#s6" gradientUnits="userSpaceOnUse" x1="1065.0" y1="890.3" x2="1103.9" y2="820.1"/><linearGradient id="g524" href="#s6" gradientUnits="userSpaceOnUse" x1="1075.0" y1="895.8" x2="1114.4" y2="825.4"/><linearGradient id="g525" href="#s6" gradientUnits="userSpaceOnUse" x1="1085.0" y1="901.4" x2="1124.6" y2="830.7"/><linearGradient id="g526" href="#s6" gradientUnits="userSpaceOnUse" x1="1095.0" y1="907.0" x2="1134.8" y2="835.9"/><linearGradient id="g527" href="#s6" gradientUnits="userSpaceOnUse" x1="1105.0" y1="912.6" x2="1145.0" y2="841.2"/><linearGradient id="g528" href="#s6" gradientUnits="userSpaceOnUse" x1="1115.0" y1="918.2" x2="1155.2" y2="846.4"/><linearGradient id="g529" href="#s6" gradientUnits="userSpaceOnUse" x1="1125.0" y1="923.8" x2="1165.4" y2="851.7"/><linearGradient id="g530" href="#s6" gradientUnits="userSpaceOnUse" x1="1135.0" y1="929.4" x2="1175.6" y2="856.9"/><linearGradient id="g531" href="#s6" gradientUnits="userSpaceOnUse" x1="1145.0" y1="935.0" x2="1185.8" y2="862.2"/><linearGradient id="g532" href="#s6" gradientUnits="userSpaceOnUse" x1="1155.0" y1="940.6" x2="1196.0" y2="867.4"/><linearGradient id="g533" href="#s6" gradientUnits="userSpaceOnUse" x1="1165.0" y1="946.2" x2="1206.2" y2="872.7"/><linearGradient id="g534" href="#s6" gradientUnits="userSpaceOnUse" x1="1175.0" y1="951.8" x2="1216.3" y2="877.9"/><linearGradient id="g535" href="#s6" gradientUnits="userSpaceOnUse" x1="1185.0" y1="957.4" x2="1226.5" y2="883.2"/><linearGradient id="g536" href="#s6" gradientUnits="userSpaceOnUse" x1="1195.0" y1="963.2" x2="1238.0" y2="890.6"/><linearGradient id="g537" href="#s6" gradientUnits="userSpaceOnUse" x1="1205.0" y1="969.4" x2="1250.4" y2="900.8"/><linearGradient id="g538" href="#s6" gradientUnits="userSpaceOnUse" x1="1215.0" y1="976.0" x2="1260.7" y2="906.9"/><linearGradient id="g539" href="#s6" gradientUnits="userSpaceOnUse" x1="1225.0" y1="982.7" x2="1271.1" y2="913.0"/><linearGradient id="g540" href="#s6" gradientUnits="userSpaceOnUse" x1="1235.0" y1="989.3" x2="1281.4" y2="919.1"/><linearGradient id="g541" href="#s6" gradientUnits="userSpaceOnUse" x1="1245.0" y1="995.9" x2="1291.8" y2="925.2"/><linearGradient id="g542" href="#s6" gradientUnits="userSpaceOnUse" x1="1255.0" y1="1002.5" x2="1302.1" y2="931.3"/><linearGradient id="g543" href="#s6" gradientUnits="userSpaceOnUse" x1="1265.0" y1="1009.1" x2="1312.5" y2="937.4"/><linearGradient id="g544" href="#s6" gradientUnits="userSpaceOnUse" x1="1275.0" y1="1015.7" x2="1322.8" y2="943.4"/><linearGradient id="g545" href="#s6" gradientUnits="userSpaceOnUse" x1="1285.0" y1="1022.2" x2="1332.0" y2="947.4"/><linearGradient id="g546" href="#s6" gradientUnits="userSpaceOnUse" x1="1295.0" y1="1027.0" x2="1325.5" y2="935.4"/><linearGradient id="g547" href="#s6" gradientUnits="userSpaceOnUse" x1="1305.0" y1="1030.3" x2="1334.0" y2="943.5"/><linearGradient id="g548" href="#s6" gradientUnits="userSpaceOnUse" x1="1315.0" y1="1033.7" x2="1342.4" y2="951.6"/><linearGradient id="g549" href="#s6" gradientUnits="userSpaceOnUse" x1="1325.0" y1="1037.0" x2="1350.8" y2="959.7"/><linearGradient id="g550" href="#s6" gradientUnits="userSpaceOnUse" x1="1335.0" y1="1040.3" x2="1359.2" y2="967.8"/><linearGradient id="g551" href="#s6" gradientUnits="userSpaceOnUse" x1="1345.0" y1="1043.7" x2="1367.6" y2="975.9"/><linearGradient id="g552" href="#s6" gradientUnits="userSpaceOnUse" x1="1355.0" y1="1047.0" x2="1376.0" y2="984.0"/><linearGradient id="g553" href="#s6" gradientUnits="userSpaceOnUse" x1="1365.0" y1="1050.3" x2="1384.4" y2="992.1"/><linearGradient id="g554" href="#s6" gradientUnits="userSpaceOnUse" x1="1375.0" y1="1053.0" x2="1385.2" y2="1002.0"/><linearGradient id="g555" href="#s6" gradientUnits="userSpaceOnUse" x1="1385.0" y1="1055.0" x2="1391.7" y2="1021.3"/><linearGradient id="g556" href="#s6" gradientUnits="userSpaceOnUse" x1="1395.0" y1="1057.0" x2="1398.3" y2="1040.7"/><linearGradient id="s7"><stop offset="0" stop-color="#8a9a20"/><stop offset="0.3" stop-color="#14957a"/><stop offset="0.6" stop-color="#1d5fae"/><stop offset="0.85" stop-color="#8a2a9e"/><stop offset="1" stop-color="#9c2c12"/></linearGradient><linearGradient id="g557" href="#s7" gradientUnits="userSpaceOnUse" x1="839.1" y1="905.0" x2="836.4" y2="915.1"/><linearGradient id="g558" href="#s7" gradientUnits="userSpaceOnUse" x1="849.2" y1="907.8" x2="846.1" y2="918.8"/><linearGradient id="g559" href="#s7" gradientUnits="userSpaceOnUse" x1="859.3" y1="910.6" x2="856.0" y2="922.5"/><linearGradient id="g560" href="#s7" gradientUnits="userSpaceOnUse" x1="869.4" y1="913.4" x2="865.8" y2="926.3"/><linearGradient id="g561" href="#s7" gradientUnits="userSpaceOnUse" x1="879.5" y1="916.1" x2="875.7" y2="930.0"/><linearGradient id="g562" href="#s7" gradientUnits="userSpaceOnUse" x1="889.6" y1="918.9" x2="885.5" y2="933.8"/><linearGradient id="g563" href="#s7" gradientUnits="userSpaceOnUse" x1="899.7" y1="921.7" x2="895.4" y2="937.6"/><linearGradient id="g564" href="#s7" gradientUnits="userSpaceOnUse" x1="909.8" y1="924.5" x2="905.2" y2="941.3"/><linearGradient id="g565" href="#s7" gradientUnits="userSpaceOnUse" x1="920.0" y1="927.3" x2="915.1" y2="945.1"/><linearGradient id="g566" href="#s7" gradientUnits="userSpaceOnUse" x1="930.1" y1="930.1" x2="925.0" y2="948.7"/><linearGradient id="g567" href="#s7" gradientUnits="userSpaceOnUse" x1="940.2" y1="932.9" x2="935.0" y2="951.7"/><linearGradient id="g568" href="#s7" gradientUnits="userSpaceOnUse" x1="950.3" y1="935.7" x2="945.1" y2="954.4"/><linearGradient id="g569" href="#s7" gradientUnits="userSpaceOnUse" x1="960.4" y1="938.3" x2="955.8" y2="957.3"/><linearGradient id="g570" href="#s7" gradientUnits="userSpaceOnUse" x1="970.5" y1="940.7" x2="966.1" y2="960.1"/><linearGradient id="g571" href="#s7" gradientUnits="userSpaceOnUse" x1="980.6" y1="943.0" x2="976.2" y2="962.7"/><linearGradient id="g572" href="#s7" gradientUnits="userSpaceOnUse" x1="990.8" y1="945.3" x2="986.2" y2="965.3"/><linearGradient id="g573" href="#s7" gradientUnits="userSpaceOnUse" x1="1000.9" y1="947.6" x2="996.2" y2="968.0"/><linearGradient id="g574" href="#s7" gradientUnits="userSpaceOnUse" x1="1011.0" y1="949.9" x2="1006.3" y2="970.6"/><linearGradient id="g575" href="#s7" gradientUnits="userSpaceOnUse" x1="1021.1" y1="952.1" x2="1016.3" y2="973.2"/><linearGradient id="g576" href="#s7" gradientUnits="userSpaceOnUse" x1="1031.2" y1="954.4" x2="1026.4" y2="975.9"/><linearGradient id="g577" href="#s7" gradientUnits="userSpaceOnUse" x1="1041.3" y1="956.7" x2="1036.4" y2="978.5"/><linearGradient id="g578" href="#s7" gradientUnits="userSpaceOnUse" x1="1051.4" y1="959.0" x2="1046.4" y2="981.1"/><linearGradient id="g579" href="#s7" gradientUnits="userSpaceOnUse" x1="1061.5" y1="961.3" x2="1056.4" y2="983.8"/><linearGradient id="g580" href="#s7" gradientUnits="userSpaceOnUse" x1="1071.7" y1="963.6" x2="1066.4" y2="986.8"/><linearGradient id="g581" href="#s7" gradientUnits="userSpaceOnUse" x1="1081.8" y1="965.9" x2="1076.3" y2="990.0"/><linearGradient id="g582" href="#s7" gradientUnits="userSpaceOnUse" x1="1091.9" y1="968.2" x2="1086.2" y2="993.1"/><linearGradient id="g583" href="#s7" gradientUnits="userSpaceOnUse" x1="1102.0" y1="970.5" x2="1096.1" y2="996.3"/><linearGradient id="g584" href="#s7" gradientUnits="userSpaceOnUse" x1="1112.1" y1="972.8" x2="1106.0" y2="999.5"/><linearGradient id="g585" href="#s7" gradientUnits="userSpaceOnUse" x1="1122.2" y1="975.1" x2="1116.0" y2="1002.7"/><linearGradient id="g586" href="#s7" gradientUnits="userSpaceOnUse" x1="1132.3" y1="977.4" x2="1125.9" y2="1005.9"/><linearGradient id="g587" href="#s7" gradientUnits="userSpaceOnUse" x1="1142.5" y1="979.8" x2="1135.0" y2="1008.7"/><linearGradient id="g588" href="#s7" gradientUnits="userSpaceOnUse" x1="1152.6" y1="982.7" x2="1143.7" y2="1011.1"/><linearGradient id="g589" href="#s7" gradientUnits="userSpaceOnUse" x1="1162.7" y1="985.8" x2="1153.8" y2="1014.3"/><linearGradient id="g590" href="#s7" gradientUnits="userSpaceOnUse" x1="1172.8" y1="989.0" x2="1163.9" y2="1017.5"/><linearGradient id="g591" href="#s7" gradientUnits="userSpaceOnUse" x1="1182.9" y1="992.1" x2="1174.0" y2="1020.8"/><linearGradient id="g592" href="#s7" gradientUnits="userSpaceOnUse" x1="1193.0" y1="995.3" x2="1184.1" y2="1024.0"/><linearGradient id="g593" href="#s7" gradientUnits="userSpaceOnUse" x1="1203.1" y1="998.5" x2="1194.3" y2="1026.9"/><linearGradient id="g594" href="#s7" gradientUnits="userSpaceOnUse" x1="1213.2" y1="1001.6" x2="1204.5" y2="1029.5"/><linearGradient id="g595" href="#s7" gradientUnits="userSpaceOnUse" x1="1223.4" y1="1004.8" x2="1214.8" y2="1032.2"/><linearGradient id="g596" href="#s7" gradientUnits="userSpaceOnUse" x1="1233.5" y1="1007.9" x2="1225.1" y2="1034.8"/><linearGradient id="g597" href="#s7" gradientUnits="userSpaceOnUse" x1="1243.6" y1="1011.1" x2="1235.4" y2="1037.5"/><linearGradient id="g598" href="#s7" gradientUnits="userSpaceOnUse" x1="1253.7" y1="1014.3" x2="1245.6" y2="1040.1"/><linearGradient id="g599" href="#s7" gradientUnits="userSpaceOnUse" x1="1263.8" y1="1017.4" x2="1255.9" y2="1042.8"/><linearGradient id="g600" href="#s7" gradientUnits="userSpaceOnUse" x1="1273.9" y1="1020.6" x2="1266.2" y2="1045.4"/><linearGradient id="g601" href="#s7" gradientUnits="userSpaceOnUse" x1="1284.0" y1="1023.7" x2="1276.4" y2="1048.1"/><linearGradient id="g602" href="#s7" gradientUnits="userSpaceOnUse" x1="1294.2" y1="1027.0" x2="1286.4" y2="1050.5"/><linearGradient id="g603" href="#s7" gradientUnits="userSpaceOnUse" x1="1304.3" y1="1030.3" x2="1296.7" y2="1053.2"/><linearGradient id="g604" href="#s7" gradientUnits="userSpaceOnUse" x1="1314.4" y1="1033.6" x2="1307.1" y2="1055.8"/><linearGradient id="g605" href="#s7" gradientUnits="userSpaceOnUse" x1="1324.5" y1="1037.0" x2="1317.4" y2="1058.4"/><linearGradient id="g606" href="#s7" gradientUnits="userSpaceOnUse" x1="1334.6" y1="1040.3" x2="1328.4" y2="1059.1"/><linearGradient id="g607" href="#s7" gradientUnits="userSpaceOnUse" x1="1344.7" y1="1043.7" x2="1339.9" y2="1058.1"/><linearGradient id="g608" href="#s7" gradientUnits="userSpaceOnUse" x1="1354.8" y1="1047.0" x2="1351.5" y2="1057.1"/><linearGradient id="g609" href="#s7" gradientUnits="userSpaceOnUse" x1="1364.9" y1="1050.3" x2="1363.0" y2="1056.1"/><linearGradient id="s8"><stop offset="0" stop-color="#8a9a20"/><stop offset="0.35" stop-color="#3c9e2a"/><stop offset="0.6" stop-color="#14957a"/><stop offset="0.82" stop-color="#1d5fae"/><stop offset="0.95" stop-color="#8a2a9e"/><stop offset="1" stop-color="#9a2c30"/></linearGradient><linearGradient id="g610" href="#s8" gradientUnits="userSpaceOnUse" x1="305.0" y1="687.1" x2="300.2" y2="699.2"/><linearGradient id="g611" href="#s8" gradientUnits="userSpaceOnUse" x1="315.1" y1="691.1" x2="310.3" y2="703.2"/><linearGradient id="g612" href="#s8" gradientUnits="userSpaceOnUse" x1="325.2" y1="695.2" x2="320.4" y2="707.2"/><linearGradient id="g613" href="#s8" gradientUnits="userSpaceOnUse" x1="335.3" y1="699.2" x2="330.4" y2="711.3"/><linearGradient id="g614" href="#s8" gradientUnits="userSpaceOnUse" x1="345.3" y1="703.4" x2="340.2" y2="715.2"/><linearGradient id="g615" href="#s8" gradientUnits="userSpaceOnUse" x1="355.4" y1="707.8" x2="350.3" y2="719.6"/><linearGradient id="g616" href="#s8" gradientUnits="userSpaceOnUse" x1="365.5" y1="712.3" x2="360.3" y2="724.0"/><linearGradient id="g617" href="#s8" gradientUnits="userSpaceOnUse" x1="375.6" y1="716.7" x2="370.4" y2="728.4"/><linearGradient id="g618" href="#s8" gradientUnits="userSpaceOnUse" x1="385.6" y1="721.1" x2="380.5" y2="732.8"/><linearGradient id="g619" href="#s8" gradientUnits="userSpaceOnUse" x1="395.7" y1="725.5" x2="390.6" y2="737.3"/><linearGradient id="g620" href="#s8" gradientUnits="userSpaceOnUse" x1="405.8" y1="730.0" x2="400.6" y2="741.7"/><linearGradient id="g621" href="#s8" gradientUnits="userSpaceOnUse" x1="415.9" y1="734.4" x2="410.7" y2="746.1"/><linearGradient id="g622" href="#s8" gradientUnits="userSpaceOnUse" x1="425.9" y1="738.8" x2="420.8" y2="750.6"/><linearGradient id="g623" href="#s8" gradientUnits="userSpaceOnUse" x1="436.0" y1="743.2" x2="430.9" y2="755.0"/><linearGradient id="g624" href="#s8" gradientUnits="userSpaceOnUse" x1="446.1" y1="747.3" x2="441.4" y2="759.5"/><linearGradient id="g625" href="#s8" gradientUnits="userSpaceOnUse" x1="456.2" y1="751.2" x2="451.5" y2="763.4"/><linearGradient id="g626" href="#s8" gradientUnits="userSpaceOnUse" x1="466.2" y1="755.0" x2="461.6" y2="767.2"/><linearGradient id="g627" href="#s8" gradientUnits="userSpaceOnUse" x1="476.3" y1="758.8" x2="471.7" y2="771.1"/><linearGradient id="g628" href="#s8" gradientUnits="userSpaceOnUse" x1="486.4" y1="762.7" x2="481.7" y2="774.9"/><linearGradient id="g629" href="#s8" gradientUnits="userSpaceOnUse" x1="496.5" y1="766.5" x2="491.8" y2="778.7"/><linearGradient id="g630" href="#s8" gradientUnits="userSpaceOnUse" x1="506.5" y1="770.3" x2="501.9" y2="782.6"/><linearGradient id="g631" href="#s8" gradientUnits="userSpaceOnUse" x1="516.6" y1="774.2" x2="512.0" y2="786.4"/><linearGradient id="g632" href="#s8" gradientUnits="userSpaceOnUse" x1="526.7" y1="778.0" x2="522.0" y2="790.2"/><linearGradient id="g633" href="#s8" gradientUnits="userSpaceOnUse" x1="536.8" y1="781.8" x2="532.2" y2="794.1"/><linearGradient id="g634" href="#s8" gradientUnits="userSpaceOnUse" x1="546.8" y1="785.4" x2="542.6" y2="797.9"/><linearGradient id="g635" href="#s8" gradientUnits="userSpaceOnUse" x1="556.9" y1="788.8" x2="552.7" y2="801.3"/><linearGradient id="g636" href="#s8" gradientUnits="userSpaceOnUse" x1="567.0" y1="792.2" x2="562.7" y2="804.8"/><linearGradient id="g637" href="#s8" gradientUnits="userSpaceOnUse" x1="577.1" y1="795.6" x2="572.8" y2="808.2"/><linearGradient id="g638" href="#s8" gradientUnits="userSpaceOnUse" x1="587.2" y1="799.1" x2="582.9" y2="811.6"/><linearGradient id="g639" href="#s8" gradientUnits="userSpaceOnUse" x1="597.2" y1="802.5" x2="593.0" y2="815.0"/><linearGradient id="g640" href="#s8" gradientUnits="userSpaceOnUse" x1="607.3" y1="805.9" x2="603.0" y2="818.5"/><linearGradient id="g641" href="#s8" gradientUnits="userSpaceOnUse" x1="617.4" y1="809.4" x2="613.1" y2="821.9"/><linearGradient id="g642" href="#s8" gradientUnits="userSpaceOnUse" x1="627.5" y1="812.8" x2="623.2" y2="825.3"/><linearGradient id="g643" href="#s8" gradientUnits="userSpaceOnUse" x1="637.5" y1="816.1" x2="633.5" y2="828.8"/><linearGradient id="g644" href="#s8" gradientUnits="userSpaceOnUse" x1="647.6" y1="819.1" x2="644.0" y2="832.1"/><linearGradient id="g645" href="#s8" gradientUnits="userSpaceOnUse" x1="657.7" y1="821.8" x2="654.1" y2="834.8"/><linearGradient id="g646" href="#s8" gradientUnits="userSpaceOnUse" x1="667.8" y1="824.6" x2="664.2" y2="837.6"/><linearGradient id="g647" href="#s8" gradientUnits="userSpaceOnUse" x1="677.8" y1="827.4" x2="674.2" y2="840.4"/><linearGradient id="g648" href="#s8" gradientUnits="userSpaceOnUse" x1="687.9" y1="830.2" x2="684.3" y2="843.2"/><linearGradient id="g649" href="#s8" gradientUnits="userSpaceOnUse" x1="698.0" y1="833.0" x2="694.4" y2="846.0"/><linearGradient id="g650" href="#s8" gradientUnits="userSpaceOnUse" x1="708.1" y1="835.8" x2="704.5" y2="848.8"/><linearGradient id="g651" href="#s8" gradientUnits="userSpaceOnUse" x1="718.1" y1="838.6" x2="714.5" y2="851.6"/><linearGradient id="g652" href="#s8" gradientUnits="userSpaceOnUse" x1="728.2" y1="841.4" x2="724.6" y2="854.4"/><linearGradient id="g653" href="#s8" gradientUnits="userSpaceOnUse" x1="738.3" y1="844.7" x2="733.6" y2="856.9"/><linearGradient id="g654" href="#s8" gradientUnits="userSpaceOnUse" x1="748.4" y1="849.1" x2="743.0" y2="860.5"/><linearGradient id="g655" href="#s8" gradientUnits="userSpaceOnUse" x1="758.4" y1="853.8" x2="753.0" y2="865.3"/><linearGradient id="g656" href="#s8" gradientUnits="userSpaceOnUse" x1="768.5" y1="858.6" x2="763.1" y2="870.0"/><linearGradient id="g657" href="#s8" gradientUnits="userSpaceOnUse" x1="778.6" y1="863.3" x2="773.2" y2="874.8"/><linearGradient id="g658" href="#s8" gradientUnits="userSpaceOnUse" x1="788.7" y1="868.1" x2="783.3" y2="879.6"/><linearGradient id="g659" href="#s8" gradientUnits="userSpaceOnUse" x1="798.7" y1="872.9" x2="793.3" y2="884.3"/><linearGradient id="g660" href="#s8" gradientUnits="userSpaceOnUse" x1="808.8" y1="877.6" x2="803.4" y2="889.1"/><linearGradient id="g661" href="#s8" gradientUnits="userSpaceOnUse" x1="818.9" y1="882.4" x2="813.5" y2="893.8"/><linearGradient id="g662" href="#s8" gradientUnits="userSpaceOnUse" x1="829.0" y1="887.1" x2="823.6" y2="898.6"/><linearGradient id="s9"><stop offset="0" stop-color="#14957a"/><stop offset="0.25" stop-color="#1d5fae"/><stop offset="0.55" stop-color="#8a2a9e"/><stop offset="1" stop-color="#9c2c12"/></linearGradient><linearGradient id="g663" href="#s9" gradientUnits="userSpaceOnUse" x1="0.0" y1="647.0" x2="0.0" y2="676.0"/><linearGradient id="s10"><stop offset="0" stop-color="#8a9a20"/><stop offset="0.4" stop-color="#14957a"/><stop offset="1" stop-color="#14957a" stop-opacity="0"/></linearGradient><linearGradient id="g664" href="#s10" gradientUnits="userSpaceOnUse" x1="374.0" y1="0.0" x2="470.0" y2="0.0"/><linearGradient id="s11"><stop offset="0" stop-color="#8a9a20"/><stop offset="0.3" stop-color="#1d5fae"/><stop offset="0.5" stop-color="#9a2a96"/><stop offset="0.7" stop-color="#1d5fae"/><stop offset="1" stop-color="#8a9a20"/></linearGradient><linearGradient id="g665" href="#s11" gradientUnits="userSpaceOnUse" x1="300.0" y1="0.0" x2="326.0" y2="0.0"/><linearGradient id="g666" href="#s11" gradientUnits="userSpaceOnUse" x1="318.0" y1="0.0" x2="344.0" y2="0.0"/><linearGradient id="s12"><stop offset="0" stop-color="#9a2a96"/><stop offset="0.35" stop-color="#1d5fae"/><stop offset="0.65" stop-color="#14957a"/><stop offset="1" stop-color="#8a9a20"/></linearGradient><linearGradient id="g667" href="#s12" gradientUnits="userSpaceOnUse" x1="207.9" y1="659.4" x2="205.8" y2="666.8"/><linearGradient id="g668" href="#s12" gradientUnits="userSpaceOnUse" x1="218.0" y1="662.2" x2="215.9" y2="669.6"/><linearGradient id="g669" href="#s12" gradientUnits="userSpaceOnUse" x1="228.1" y1="665.0" x2="226.0" y2="672.4"/><linearGradient id="g670" href="#s12" gradientUnits="userSpaceOnUse" x1="238.2" y1="667.7" x2="236.2" y2="675.2"/><linearGradient id="g671" href="#s12" gradientUnits="userSpaceOnUse" x1="248.3" y1="670.5" x2="246.3" y2="678.0"/><linearGradient id="g672" href="#s12" gradientUnits="userSpaceOnUse" x1="258.4" y1="673.3" x2="256.4" y2="680.7"/><linearGradient id="g673" href="#s12" gradientUnits="userSpaceOnUse" x1="268.5" y1="676.1" x2="266.5" y2="683.5"/><linearGradient id="g674" href="#s12" gradientUnits="userSpaceOnUse" x1="278.7" y1="678.9" x2="276.6" y2="686.3"/><linearGradient id="g675" href="#s12" gradientUnits="userSpaceOnUse" x1="288.8" y1="681.7" x2="286.7" y2="689.1"/><linearGradient id="g676" href="#s12" gradientUnits="userSpaceOnUse" x1="298.9" y1="684.6" x2="296.8" y2="692.0"/><linearGradient id="g677" href="#s12" gradientUnits="userSpaceOnUse" x1="309.0" y1="687.5" x2="306.9" y2="694.9"/><linearGradient id="g678" href="#s12" gradientUnits="userSpaceOnUse" x1="319.1" y1="690.4" x2="317.0" y2="697.8"/><linearGradient id="g679" href="#s12" gradientUnits="userSpaceOnUse" x1="329.2" y1="693.3" x2="327.1" y2="700.7"/><linearGradient id="g680" href="#s12" gradientUnits="userSpaceOnUse" x1="339.3" y1="696.2" x2="337.2" y2="703.6"/><linearGradient id="g681" href="#s12" gradientUnits="userSpaceOnUse" x1="349.5" y1="699.1" x2="347.3" y2="706.5"/><linearGradient id="g682" href="#s12" gradientUnits="userSpaceOnUse" x1="359.6" y1="702.0" x2="357.5" y2="709.4"/><linearGradient id="g683" href="#s12" gradientUnits="userSpaceOnUse" x1="369.7" y1="704.9" x2="367.6" y2="712.3"/><linearGradient id="g684" href="#s12" gradientUnits="userSpaceOnUse" x1="379.8" y1="707.8" x2="377.7" y2="715.2"/><linearGradient id="g685" href="#s12" gradientUnits="userSpaceOnUse" x1="389.9" y1="710.7" x2="387.8" y2="718.1"/><linearGradient id="g686" href="#s12" gradientUnits="userSpaceOnUse" x1="400.0" y1="713.6" x2="397.9" y2="721.0"/><linearGradient id="g687" href="#s12" gradientUnits="userSpaceOnUse" x1="410.1" y1="716.5" x2="408.0" y2="723.8"/><linearGradient id="g688" href="#s12" gradientUnits="userSpaceOnUse" x1="420.3" y1="719.3" x2="418.1" y2="726.7"/><linearGradient id="g689" href="#s12" gradientUnits="userSpaceOnUse" x1="430.4" y1="722.2" x2="428.3" y2="729.6"/><linearGradient id="g690" href="#s12" gradientUnits="userSpaceOnUse" x1="440.5" y1="725.2" x2="438.3" y2="732.5"/><linearGradient id="g691" href="#s12" gradientUnits="userSpaceOnUse" x1="450.6" y1="728.2" x2="448.4" y2="735.5"/><linearGradient id="g692" href="#s12" gradientUnits="userSpaceOnUse" x1="460.7" y1="731.3" x2="458.5" y2="738.6"/><linearGradient id="g693" href="#s12" gradientUnits="userSpaceOnUse" x1="470.8" y1="734.3" x2="468.6" y2="741.7"/><linearGradient id="g694" href="#s12" gradientUnits="userSpaceOnUse" x1="480.9" y1="737.4" x2="478.7" y2="744.7"/><linearGradient id="g695" href="#s12" gradientUnits="userSpaceOnUse" x1="491.1" y1="740.5" x2="488.8" y2="747.8"/><linearGradient id="g696" href="#s12" gradientUnits="userSpaceOnUse" x1="501.2" y1="743.5" x2="499.0" y2="750.9"/><linearGradient id="g697" href="#s12" gradientUnits="userSpaceOnUse" x1="511.3" y1="746.6" x2="509.1" y2="753.9"/><linearGradient id="g698" href="#s12" gradientUnits="userSpaceOnUse" x1="521.4" y1="749.7" x2="519.2" y2="757.0"/><linearGradient id="g699" href="#s12" gradientUnits="userSpaceOnUse" x1="531.5" y1="752.7" x2="529.3" y2="760.1"/><linearGradient id="g700" href="#s12" gradientUnits="userSpaceOnUse" x1="541.6" y1="755.9" x2="539.3" y2="763.1"/><linearGradient id="g701" href="#s12" gradientUnits="userSpaceOnUse" x1="551.7" y1="759.1" x2="549.4" y2="766.4"/><linearGradient id="g702" href="#s12" gradientUnits="userSpaceOnUse" x1="561.9" y1="762.4" x2="559.5" y2="769.6"/><linearGradient id="g703" href="#s12" gradientUnits="userSpaceOnUse" x1="572.0" y1="765.7" x2="569.6" y2="772.9"/><linearGradient id="g704" href="#s12" gradientUnits="userSpaceOnUse" x1="582.1" y1="768.9" x2="579.7" y2="776.2"/><linearGradient id="g705" href="#s12" gradientUnits="userSpaceOnUse" x1="592.2" y1="772.2" x2="589.9" y2="779.4"/><linearGradient id="g706" href="#s12" gradientUnits="userSpaceOnUse" x1="602.3" y1="775.5" x2="600.0" y2="782.7"/><linearGradient id="g707" href="#s12" gradientUnits="userSpaceOnUse" x1="612.4" y1="778.7" x2="610.1" y2="786.0"/><linearGradient id="g708" href="#s12" gradientUnits="userSpaceOnUse" x1="622.5" y1="782.0" x2="620.2" y2="789.2"/><linearGradient id="g709" href="#s12" gradientUnits="userSpaceOnUse" x1="632.7" y1="785.3" x2="630.3" y2="792.5"/><linearGradient id="g710" href="#s12" gradientUnits="userSpaceOnUse" x1="642.8" y1="789.0" x2="639.9" y2="795.8"/><linearGradient id="g711" href="#s12" gradientUnits="userSpaceOnUse" x1="652.9" y1="793.2" x2="650.0" y2="800.0"/><linearGradient id="g712" href="#s12" gradientUnits="userSpaceOnUse" x1="663.0" y1="797.4" x2="660.2" y2="804.2"/><linearGradient id="g713" href="#s12" gradientUnits="userSpaceOnUse" x1="673.1" y1="801.6" x2="670.3" y2="808.4"/><linearGradient id="g714" href="#s12" gradientUnits="userSpaceOnUse" x1="683.2" y1="805.8" x2="680.4" y2="812.7"/><linearGradient id="g715" href="#s12" gradientUnits="userSpaceOnUse" x1="693.3" y1="810.1" x2="690.5" y2="816.9"/><linearGradient id="g716" href="#s12" gradientUnits="userSpaceOnUse" x1="703.5" y1="814.8" x2="700.2" y2="821.1"/><linearGradient id="g717" href="#s12" gradientUnits="userSpaceOnUse" x1="713.6" y1="819.9" x2="710.3" y2="826.3"/><linearGradient id="g718" href="#s12" gradientUnits="userSpaceOnUse" x1="723.7" y1="825.1" x2="720.5" y2="831.4"/><linearGradient id="g719" href="#s12" gradientUnits="userSpaceOnUse" x1="733.8" y1="830.2" x2="730.6" y2="836.6"/><linearGradient id="g720" href="#s12" gradientUnits="userSpaceOnUse" x1="743.9" y1="835.3" x2="740.7" y2="841.7"/><linearGradient id="g721" href="#s12" gradientUnits="userSpaceOnUse" x1="754.0" y1="840.3" x2="750.9" y2="846.8"/><linearGradient id="g722" href="#s12" gradientUnits="userSpaceOnUse" x1="764.1" y1="844.4" x2="761.7" y2="851.6"/><linearGradient id="g723" href="#s12" gradientUnits="userSpaceOnUse" x1="774.3" y1="847.8" x2="771.8" y2="855.0"/><linearGradient id="g724" href="#s12" gradientUnits="userSpaceOnUse" x1="784.4" y1="851.2" x2="781.9" y2="858.4"/><linearGradient id="g725" href="#s12" gradientUnits="userSpaceOnUse" x1="794.5" y1="854.6" x2="792.1" y2="861.8"/><linearGradient id="g726" href="#s12" gradientUnits="userSpaceOnUse" x1="804.6" y1="858.1" x2="802.2" y2="865.2"/><linearGradient id="g727" href="#s12" gradientUnits="userSpaceOnUse" x1="814.7" y1="861.5" x2="812.3" y2="868.7"/><linearGradient id="g728" href="#s12" gradientUnits="userSpaceOnUse" x1="824.8" y1="864.9" x2="822.4" y2="872.1"/><linearGradient id="g729" href="#s12" gradientUnits="userSpaceOnUse" x1="834.9" y1="868.3" x2="832.5" y2="875.5"/><linearGradient id="s13"><stop offset="0" stop-color="#2a9a5a"/><stop offset="0.3" stop-color="#1d5fae"/><stop offset="0.65" stop-color="#8a2a9e" stop-opacity="0.9"/><stop offset="1" stop-color="#9c2c12" stop-opacity="0"/></linearGradient><linearGradient id="g730" href="#s13" gradientUnits="userSpaceOnUse" x1="674.2" y1="601.9" x2="674.9" y2="600.9"/><linearGradient id="g731" href="#s13" gradientUnits="userSpaceOnUse" x1="684.5" y1="609.6" x2="686.7" y2="606.6"/><linearGradient id="g732" href="#s13" gradientUnits="userSpaceOnUse" x1="694.8" y1="617.3" x2="698.5" y2="612.4"/><linearGradient id="g733" href="#s13" gradientUnits="userSpaceOnUse" x1="705.1" y1="625.0" x2="710.2" y2="618.1"/><linearGradient id="g734" href="#s13" gradientUnits="userSpaceOnUse" x1="715.4" y1="632.7" x2="722.0" y2="623.8"/><linearGradient id="g735" href="#s13" gradientUnits="userSpaceOnUse" x1="725.8" y1="640.4" x2="733.8" y2="629.6"/><linearGradient id="g736" href="#s13" gradientUnits="userSpaceOnUse" x1="736.1" y1="648.1" x2="745.5" y2="635.5"/><linearGradient id="g737" href="#s13" gradientUnits="userSpaceOnUse" x1="746.4" y1="655.9" x2="756.8" y2="642.3"/><linearGradient id="g738" href="#s13" gradientUnits="userSpaceOnUse" x1="756.7" y1="663.8" x2="767.5" y2="649.6"/><linearGradient id="g739" href="#s13" gradientUnits="userSpaceOnUse" x1="767.1" y1="671.7" x2="778.3" y2="657.0"/><linearGradient id="g740" href="#s13" gradientUnits="userSpaceOnUse" x1="777.4" y1="679.5" x2="789.0" y2="664.3"/><linearGradient id="g741" href="#s13" gradientUnits="userSpaceOnUse" x1="787.7" y1="687.4" x2="799.7" y2="671.7"/><linearGradient id="g742" href="#s13" gradientUnits="userSpaceOnUse" x1="798.0" y1="695.3" x2="810.4" y2="679.0"/><linearGradient id="g743" href="#s13" gradientUnits="userSpaceOnUse" x1="808.3" y1="703.2" x2="821.2" y2="686.4"/><linearGradient id="g744" href="#s13" gradientUnits="userSpaceOnUse" x1="818.7" y1="711.1" x2="831.9" y2="693.7"/><linearGradient id="g745" href="#s13" gradientUnits="userSpaceOnUse" x1="829.0" y1="719.0" x2="842.6" y2="701.1"/><linearGradient id="g746" href="#s13" gradientUnits="userSpaceOnUse" x1="839.3" y1="726.8" x2="853.4" y2="708.4"/><linearGradient id="g747" href="#s13" gradientUnits="userSpaceOnUse" x1="849.6" y1="735.0" x2="864.3" y2="717.3"/><linearGradient id="g748" href="#s13" gradientUnits="userSpaceOnUse" x1="859.9" y1="743.9" x2="875.0" y2="727.2"/><linearGradient id="g749" href="#s13" gradientUnits="userSpaceOnUse" x1="870.3" y1="753.2" x2="885.4" y2="736.4"/><linearGradient id="g750" href="#s13" gradientUnits="userSpaceOnUse" x1="880.6" y1="762.5" x2="895.8" y2="745.6"/><linearGradient id="g751" href="#s13" gradientUnits="userSpaceOnUse" x1="890.9" y1="771.7" x2="906.2" y2="754.7"/><linearGradient id="g752" href="#s13" gradientUnits="userSpaceOnUse" x1="901.2" y1="781.0" x2="916.6" y2="763.9"/><linearGradient id="g753" href="#s13" gradientUnits="userSpaceOnUse" x1="911.6" y1="790.3" x2="927.0" y2="773.0"/><linearGradient id="g754" href="#s13" gradientUnits="userSpaceOnUse" x1="921.9" y1="799.6" x2="937.5" y2="782.2"/><linearGradient id="g755" href="#s13" gradientUnits="userSpaceOnUse" x1="932.2" y1="808.8" x2="947.9" y2="791.4"/><linearGradient id="g756" href="#s13" gradientUnits="userSpaceOnUse" x1="942.5" y1="818.1" x2="958.3" y2="800.5"/><linearGradient id="g757" href="#s13" gradientUnits="userSpaceOnUse" x1="952.8" y1="827.4" x2="968.7" y2="809.7"/><linearGradient id="s14"><stop offset="0" stop-color="#7a9a26"/><stop offset="0.3" stop-color="#3a9e30"/><stop offset="0.5" stop-color="#14957a"/><stop offset="0.72" stop-color="#1d5fae"/><stop offset="0.88" stop-color="#8a2a9e"/><stop offset="1" stop-color="#9c2c12"/></linearGradient><linearGradient id="g758" href="#s14" gradientUnits="userSpaceOnUse" x1="674.0" y1="601.6" x2="674.5" y2="599.7"/><linearGradient id="g759" href="#s14" gradientUnits="userSpaceOnUse" x1="684.0" y1="604.1" x2="684.5" y2="602.1"/><linearGradient id="g760" href="#s14" gradientUnits="userSpaceOnUse" x1="694.0" y1="606.6" x2="694.5" y2="604.5"/><linearGradient id="g761" href="#s14" gradientUnits="userSpaceOnUse" x1="704.0" y1="609.1" x2="704.5" y2="606.9"/><linearGradient id="g762" href="#s14" gradientUnits="userSpaceOnUse" x1="714.0" y1="611.6" x2="714.6" y2="609.3"/><linearGradient id="g763" href="#s14" gradientUnits="userSpaceOnUse" x1="724.0" y1="614.1" x2="724.6" y2="611.8"/><linearGradient id="g764" href="#s14" gradientUnits="userSpaceOnUse" x1="734.0" y1="616.6" x2="734.6" y2="614.2"/><linearGradient id="g765" href="#s14" gradientUnits="userSpaceOnUse" x1="744.0" y1="619.2" x2="744.6" y2="616.7"/><linearGradient id="g766" href="#s14" gradientUnits="userSpaceOnUse" x1="754.0" y1="621.7" x2="754.7" y2="619.1"/><linearGradient id="g767" href="#s14" gradientUnits="userSpaceOnUse" x1="764.0" y1="624.3" x2="764.7" y2="621.6"/><linearGradient id="g768" href="#s14" gradientUnits="userSpaceOnUse" x1="774.0" y1="626.8" x2="774.7" y2="624.1"/><linearGradient id="g769" href="#s14" gradientUnits="userSpaceOnUse" x1="784.0" y1="629.4" x2="784.7" y2="626.6"/><linearGradient id="g770" href="#s14" gradientUnits="userSpaceOnUse" x1="794.0" y1="632.0" x2="794.7" y2="629.1"/><linearGradient id="g771" href="#s14" gradientUnits="userSpaceOnUse" x1="804.0" y1="634.6" x2="804.8" y2="631.6"/><linearGradient id="g772" href="#s14" gradientUnits="userSpaceOnUse" x1="814.0" y1="637.2" x2="814.8" y2="634.1"/><linearGradient id="g773" href="#s14" gradientUnits="userSpaceOnUse" x1="824.0" y1="639.8" x2="824.8" y2="636.7"/><linearGradient id="g774" href="#s14" gradientUnits="userSpaceOnUse" x1="834.0" y1="642.4" x2="834.8" y2="639.2"/><linearGradient id="g775" href="#s14" gradientUnits="userSpaceOnUse" x1="844.0" y1="645.1" x2="844.9" y2="641.8"/><linearGradient id="g776" href="#s14" gradientUnits="userSpaceOnUse" x1="854.0" y1="647.7" x2="854.9" y2="644.3"/><linearGradient id="g777" href="#s14" gradientUnits="userSpaceOnUse" x1="864.0" y1="650.4" x2="864.9" y2="646.9"/><linearGradient id="g778" href="#s14" gradientUnits="userSpaceOnUse" x1="874.0" y1="653.0" x2="874.9" y2="649.5"/><linearGradient id="g779" href="#s14" gradientUnits="userSpaceOnUse" x1="884.0" y1="655.7" x2="885.0" y2="652.1"/><linearGradient id="g780" href="#s14" gradientUnits="userSpaceOnUse" x1="894.0" y1="658.4" x2="895.0" y2="654.7"/><linearGradient id="g781" href="#s14" gradientUnits="userSpaceOnUse" x1="904.0" y1="661.1" x2="905.0" y2="657.3"/><linearGradient id="g782" href="#s14" gradientUnits="userSpaceOnUse" x1="914.0" y1="663.8" x2="915.0" y2="660.0"/><linearGradient id="g783" href="#s14" gradientUnits="userSpaceOnUse" x1="924.0" y1="666.5" x2="925.0" y2="662.7"/><linearGradient id="g784" href="#s14" gradientUnits="userSpaceOnUse" x1="934.0" y1="669.3" x2="935.1" y2="665.4"/><linearGradient id="g785" href="#s14" gradientUnits="userSpaceOnUse" x1="944.0" y1="672.0" x2="945.1" y2="668.1"/><linearGradient id="g786" href="#s14" gradientUnits="userSpaceOnUse" x1="954.0" y1="674.8" x2="955.1" y2="670.8"/><linearGradient id="g787" href="#s14" gradientUnits="userSpaceOnUse" x1="964.0" y1="677.5" x2="965.1" y2="673.5"/><linearGradient id="g788" href="#s14" gradientUnits="userSpaceOnUse" x1="974.0" y1="680.3" x2="975.1" y2="676.3"/><linearGradient id="g789" href="#s14" gradientUnits="userSpaceOnUse" x1="984.0" y1="683.1" x2="985.1" y2="679.0"/><linearGradient id="g790" href="#s14" gradientUnits="userSpaceOnUse" x1="994.0" y1="685.9" x2="995.2" y2="681.8"/><linearGradient id="g791" href="#s14" gradientUnits="userSpaceOnUse" x1="1004.0" y1="688.7" x2="1005.2" y2="684.5"/><linearGradient id="g792" href="#s14" gradientUnits="userSpaceOnUse" x1="1014.0" y1="691.5" x2="1015.2" y2="687.3"/><linearGradient id="g793" href="#s14" gradientUnits="userSpaceOnUse" x1="1024.0" y1="694.4" x2="1025.2" y2="690.1"/><linearGradient id="g794" href="#s14" gradientUnits="userSpaceOnUse" x1="1034.0" y1="697.2" x2="1035.2" y2="692.9"/><linearGradient id="g795" href="#s14" gradientUnits="userSpaceOnUse" x1="1044.0" y1="700.1" x2="1045.3" y2="695.7"/><linearGradient id="g796" href="#s14" gradientUnits="userSpaceOnUse" x1="1054.0" y1="703.0" x2="1055.3" y2="698.6"/><linearGradient id="g797" href="#s14" gradientUnits="userSpaceOnUse" x1="1064.0" y1="705.8" x2="1065.3" y2="701.4"/><linearGradient id="g798" href="#s14" gradientUnits="userSpaceOnUse" x1="1074.0" y1="708.7" x2="1075.3" y2="704.2"/><linearGradient id="g799" href="#s14" gradientUnits="userSpaceOnUse" x1="1084.0" y1="711.7" x2="1085.3" y2="707.1"/><linearGradient id="g800" href="#s14" gradientUnits="userSpaceOnUse" x1="1094.0" y1="714.6" x2="1095.3" y2="710.0"/><linearGradient id="g801" href="#s14" gradientUnits="userSpaceOnUse" x1="1104.0" y1="717.5" x2="1105.4" y2="712.9"/><linearGradient id="g802" href="#s14" gradientUnits="userSpaceOnUse" x1="1114.0" y1="720.5" x2="1115.4" y2="715.8"/><linearGradient id="g803" href="#s14" gradientUnits="userSpaceOnUse" x1="1124.0" y1="723.4" x2="1125.4" y2="718.7"/><linearGradient id="g804" href="#s14" gradientUnits="userSpaceOnUse" x1="1134.0" y1="726.4" x2="1135.4" y2="721.6"/><linearGradient id="g805" href="#s14" gradientUnits="userSpaceOnUse" x1="1144.0" y1="729.4" x2="1145.4" y2="724.6"/><linearGradient id="g806" href="#s14" gradientUnits="userSpaceOnUse" x1="1154.0" y1="732.4" x2="1155.5" y2="727.5"/><linearGradient id="g807" href="#s14" gradientUnits="userSpaceOnUse" x1="1164.0" y1="735.4" x2="1165.5" y2="730.5"/><linearGradient id="g808" href="#s14" gradientUnits="userSpaceOnUse" x1="1174.0" y1="738.4" x2="1175.5" y2="733.5"/><linearGradient id="g809" href="#s14" gradientUnits="userSpaceOnUse" x1="1184.0" y1="741.4" x2="1185.5" y2="736.5"/><linearGradient id="g810" href="#s14" gradientUnits="userSpaceOnUse" x1="1194.0" y1="744.5" x2="1195.5" y2="739.5"/><linearGradient id="g811" href="#s14" gradientUnits="userSpaceOnUse" x1="1204.0" y1="747.6" x2="1205.5" y2="742.5"/><linearGradient id="g812" href="#s14" gradientUnits="userSpaceOnUse" x1="1214.0" y1="750.6" x2="1215.6" y2="745.6"/><linearGradient id="g813" href="#s14" gradientUnits="userSpaceOnUse" x1="1224.0" y1="753.7" x2="1225.6" y2="748.6"/><linearGradient id="g814" href="#s14" gradientUnits="userSpaceOnUse" x1="1234.0" y1="756.8" x2="1235.6" y2="751.7"/><linearGradient id="g815" href="#s14" gradientUnits="userSpaceOnUse" x1="1244.0" y1="760.0" x2="1245.6" y2="754.7"/><linearGradient id="g816" href="#s14" gradientUnits="userSpaceOnUse" x1="1254.0" y1="763.1" x2="1255.6" y2="757.8"/><linearGradient id="g817" href="#s14" gradientUnits="userSpaceOnUse" x1="1264.0" y1="766.2" x2="1265.7" y2="760.9"/><linearGradient id="g818" href="#s14" gradientUnits="userSpaceOnUse" x1="1274.0" y1="769.4" x2="1275.7" y2="764.1"/><linearGradient id="g819" href="#s14" gradientUnits="userSpaceOnUse" x1="1284.0" y1="772.6" x2="1285.7" y2="767.2"/><linearGradient id="g820" href="#s14" gradientUnits="userSpaceOnUse" x1="1294.0" y1="775.8" x2="1295.7" y2="770.3"/><linearGradient id="g821" href="#s14" gradientUnits="userSpaceOnUse" x1="1304.0" y1="779.0" x2="1305.8" y2="773.5"/><linearGradient id="g822" href="#s14" gradientUnits="userSpaceOnUse" x1="1314.0" y1="782.2" x2="1315.8" y2="776.6"/><linearGradient id="g823" href="#s14" gradientUnits="userSpaceOnUse" x1="1324.0" y1="785.4" x2="1325.8" y2="779.8"/><linearGradient id="g824" href="#s14" gradientUnits="userSpaceOnUse" x1="1334.0" y1="788.6" x2="1335.8" y2="783.0"/><linearGradient id="g825" href="#s14" gradientUnits="userSpaceOnUse" x1="1344.0" y1="791.9" x2="1345.9" y2="786.2"/><linearGradient id="g826" href="#s14" gradientUnits="userSpaceOnUse" x1="1354.0" y1="795.2" x2="1355.9" y2="789.4"/><linearGradient id="g827" href="#s14" gradientUnits="userSpaceOnUse" x1="1364.0" y1="798.5" x2="1365.9" y2="792.6"/><linearGradient id="g828" href="#s14" gradientUnits="userSpaceOnUse" x1="1374.0" y1="801.8" x2="1376.0" y2="795.8"/><linearGradient id="g829" href="#s14" gradientUnits="userSpaceOnUse" x1="1384.0" y1="805.1" x2="1386.0" y2="799.1"/><linearGradient id="g830" href="#s14" gradientUnits="userSpaceOnUse" x1="1394.0" y1="808.4" x2="1396.0" y2="802.3"/><linearGradient id="g831" href="#s14" gradientUnits="userSpaceOnUse" x1="1404.0" y1="811.8" x2="1406.1" y2="805.6"/><linearGradient id="g832" href="#s14" gradientUnits="userSpaceOnUse" x1="1414.0" y1="815.1" x2="1416.1" y2="808.9"/><linearGradient id="g833" href="#s14" gradientUnits="userSpaceOnUse" x1="1424.0" y1="818.5" x2="1426.1" y2="812.2"/><linearGradient id="g834" href="#s14" gradientUnits="userSpaceOnUse" x1="1434.0" y1="821.9" x2="1436.2" y2="815.5"/><linearGradient id="g835" href="#s14" gradientUnits="userSpaceOnUse" x1="1444.0" y1="825.3" x2="1446.2" y2="818.9"/><linearGradient id="g836" href="#s14" gradientUnits="userSpaceOnUse" x1="1454.0" y1="828.7" x2="1456.2" y2="822.2"/><linearGradient id="g837" href="#s14" gradientUnits="userSpaceOnUse" x1="1464.0" y1="832.1" x2="1466.3" y2="825.6"/><linearGradient id="g838" href="#s14" gradientUnits="userSpaceOnUse" x1="1474.0" y1="835.6" x2="1476.3" y2="829.0"/><linearGradient id="g839" href="#s14" gradientUnits="userSpaceOnUse" x1="1484.0" y1="839.1" x2="1486.3" y2="832.4"/><linearGradient id="g840" href="#s14" gradientUnits="userSpaceOnUse" x1="1494.0" y1="842.5" x2="1496.3" y2="835.8"/><linearGradient id="g841" href="#s14" gradientUnits="userSpaceOnUse" x1="1504.0" y1="846.0" x2="1506.4" y2="839.3"/><linearGradient id="g842" href="#s14" gradientUnits="userSpaceOnUse" x1="1514.0" y1="849.6" x2="1516.4" y2="842.7"/><linearGradient id="g843" href="#s14" gradientUnits="userSpaceOnUse" x1="1524.0" y1="853.1" x2="1526.5" y2="846.2"/><linearGradient id="g844" href="#s14" gradientUnits="userSpaceOnUse" x1="1534.0" y1="856.6" x2="1536.5" y2="849.6"/><linearGradient id="g845" href="#s14" gradientUnits="userSpaceOnUse" x1="1544.0" y1="860.2" x2="1546.5" y2="853.1"/><linearGradient id="g846" href="#s14" gradientUnits="userSpaceOnUse" x1="1554.0" y1="863.8" x2="1556.6" y2="856.7"/><linearGradient id="g847" href="#s14" gradientUnits="userSpaceOnUse" x1="1564.0" y1="867.4" x2="1566.6" y2="860.2"/><linearGradient id="g848" href="#s14" gradientUnits="userSpaceOnUse" x1="1574.0" y1="871.0" x2="1576.6" y2="863.7"/><linearGradient id="g849" href="#s14" gradientUnits="userSpaceOnUse" x1="1584.0" y1="874.6" x2="1586.7" y2="867.3"/><linearGradient id="g850" href="#s14" gradientUnits="userSpaceOnUse" x1="1594.0" y1="878.3" x2="1596.7" y2="870.9"/><linearGradient id="g851" href="#s14" gradientUnits="userSpaceOnUse" x1="1604.0" y1="881.9" x2="1606.7" y2="874.5"/><linearGradient id="g852" href="#s14" gradientUnits="userSpaceOnUse" x1="1614.0" y1="885.6" x2="1616.8" y2="878.1"/><linearGradient id="g853" href="#s14" gradientUnits="userSpaceOnUse" x1="1624.0" y1="889.3" x2="1626.8" y2="881.7"/><linearGradient id="g854" href="#s14" gradientUnits="userSpaceOnUse" x1="1634.0" y1="893.0" x2="1636.8" y2="885.4"/><linearGradient id="g855" href="#s14" gradientUnits="userSpaceOnUse" x1="1644.0" y1="896.7" x2="1646.9" y2="889.0"/><linearGradient id="g856" href="#s14" gradientUnits="userSpaceOnUse" x1="1654.0" y1="900.5" x2="1656.9" y2="892.7"/><linearGradient id="g857" href="#s14" gradientUnits="userSpaceOnUse" x1="1664.0" y1="904.2" x2="1666.9" y2="896.4"/><linearGradient id="g858" href="#s14" gradientUnits="userSpaceOnUse" x1="1674.0" y1="908.0" x2="1677.0" y2="900.1"/><linearGradient id="g859" href="#s14" gradientUnits="userSpaceOnUse" x1="1684.0" y1="911.8" x2="1687.0" y2="903.9"/><linearGradient id="g860" href="#s14" gradientUnits="userSpaceOnUse" x1="1694.0" y1="915.6" x2="1697.1" y2="907.6"/><linearGradient id="g861" href="#s14" gradientUnits="userSpaceOnUse" x1="1704.0" y1="919.4" x2="1707.1" y2="911.4"/><linearGradient id="g862" href="#s14" gradientUnits="userSpaceOnUse" x1="1714.0" y1="923.3" x2="1717.1" y2="915.2"/><linearGradient id="g863" href="#s14" gradientUnits="userSpaceOnUse" x1="1724.0" y1="927.1" x2="1727.2" y2="919.0"/><linearGradient id="g864" href="#s14" gradientUnits="userSpaceOnUse" x1="1734.0" y1="931.0" x2="1737.2" y2="922.8"/><linearGradient id="g865" href="#s14" gradientUnits="userSpaceOnUse" x1="1744.0" y1="934.9" x2="1747.2" y2="926.6"/><linearGradient id="g866" href="#s14" gradientUnits="userSpaceOnUse" x1="1754.0" y1="938.8" x2="1757.3" y2="930.5"/><linearGradient id="g867" href="#s14" gradientUnits="userSpaceOnUse" x1="1764.0" y1="942.8" x2="1767.3" y2="934.3"/><linearGradient id="g868" href="#s14" gradientUnits="userSpaceOnUse" x1="1774.0" y1="946.7" x2="1777.4" y2="938.2"/><linearGradient id="g869" href="#s14" gradientUnits="userSpaceOnUse" x1="1784.0" y1="950.7" x2="1787.4" y2="942.1"/><linearGradient id="g870" href="#s14" gradientUnits="userSpaceOnUse" x1="1794.0" y1="954.7" x2="1797.4" y2="946.1"/><linearGradient id="g871" href="#s14" gradientUnits="userSpaceOnUse" x1="1804.0" y1="958.7" x2="1807.5" y2="950.0"/><linearGradient id="g872" href="#s14" gradientUnits="userSpaceOnUse" x1="1814.0" y1="962.7" x2="1817.5" y2="954.1"/><linearGradient id="g873" href="#s14" gradientUnits="userSpaceOnUse" x1="1824.0" y1="966.7" x2="1827.5" y2="958.1"/><linearGradient id="g874" href="#s14" gradientUnits="userSpaceOnUse" x1="1834.0" y1="970.8" x2="1837.5" y2="962.2"/><linearGradient id="g875" href="#s14" gradientUnits="userSpaceOnUse" x1="1844.0" y1="974.9" x2="1847.5" y2="966.3"/><linearGradient id="g876" href="#s14" gradientUnits="userSpaceOnUse" x1="1854.0" y1="978.9" x2="1857.5" y2="970.4"/><linearGradient id="g877" href="#s14" gradientUnits="userSpaceOnUse" x1="1864.0" y1="983.1" x2="1867.5" y2="974.5"/><linearGradient id="g878" href="#s14" gradientUnits="userSpaceOnUse" x1="1874.0" y1="987.2" x2="1877.5" y2="978.7"/><linearGradient id="g879" href="#s14" gradientUnits="userSpaceOnUse" x1="1884.0" y1="991.3" x2="1887.5" y2="982.8"/><linearGradient id="g880" href="#s14" gradientUnits="userSpaceOnUse" x1="1894.0" y1="995.5" x2="1897.6" y2="987.0"/><linearGradient id="g881" href="#s14" gradientUnits="userSpaceOnUse" x1="1904.0" y1="999.7" x2="1907.6" y2="991.2"/><linearGradient id="g882" href="#s14" gradientUnits="userSpaceOnUse" x1="1914.0" y1="1003.9" x2="1917.6" y2="995.4"/><linearGradient id="g883" href="#s14" gradientUnits="userSpaceOnUse" x1="1924.0" y1="1008.1" x2="1927.6" y2="999.7"/><linearGradient id="g884" href="#s14" gradientUnits="userSpaceOnUse" x1="1934.0" y1="1012.4" x2="1937.6" y2="1003.9"/><linearGradient id="g885" href="#s14" gradientUnits="userSpaceOnUse" x1="1944.0" y1="1016.6" x2="1947.6" y2="1008.2"/><linearGradient id="g886" href="#s14" gradientUnits="userSpaceOnUse" x1="1954.0" y1="1020.9" x2="1957.6" y2="1012.5"/><linearGradient id="g887" href="#s14" gradientUnits="userSpaceOnUse" x1="1964.0" y1="1025.2" x2="1967.6" y2="1016.8"/><linearGradient id="g888" href="#s14" gradientUnits="userSpaceOnUse" x1="1974.0" y1="1029.5" x2="1977.6" y2="1021.1"/><linearGradient id="g889" href="#s14" gradientUnits="userSpaceOnUse" x1="1984.0" y1="1033.9" x2="1987.7" y2="1025.5"/><linearGradient id="g890" href="#s14" gradientUnits="userSpaceOnUse" x1="1994.0" y1="1038.2" x2="1997.7" y2="1029.8"/><linearGradient id="g891" href="#s14" gradientUnits="userSpaceOnUse" x1="2004.0" y1="1042.6" x2="2007.7" y2="1034.2"/><linearGradient id="g892" href="#s14" gradientUnits="userSpaceOnUse" x1="2014.0" y1="1047.0" x2="2017.7" y2="1038.6"/><linearGradient id="g893" href="#s14" gradientUnits="userSpaceOnUse" x1="2024.0" y1="1051.4" x2="2027.7" y2="1043.1"/><linearGradient id="g894" href="#s14" gradientUnits="userSpaceOnUse" x1="2034.0" y1="1055.9" x2="2037.7" y2="1047.5"/><linearGradient id="g895" href="#s14" gradientUnits="userSpaceOnUse" x1="2044.0" y1="1060.3" x2="2047.7" y2="1052.0"/><linearGradient id="g896" href="#s14" gradientUnits="userSpaceOnUse" x1="2054.0" y1="1064.8" x2="2057.7" y2="1056.5"/><linearGradient id="g897" href="#s14" gradientUnits="userSpaceOnUse" x1="2064.0" y1="1069.3" x2="2067.7" y2="1061.0"/><linearGradient id="g898" href="#s14" gradientUnits="userSpaceOnUse" x1="2074.0" y1="1073.8" x2="2077.8" y2="1065.5"/><linearGradient id="g899" href="#s14" gradientUnits="userSpaceOnUse" x1="2084.0" y1="1078.4" x2="2087.8" y2="1070.1"/><linearGradient id="g900" href="#s14" gradientUnits="userSpaceOnUse" x1="2094.0" y1="1082.9" x2="2097.8" y2="1074.7"/><linearGradient id="g901" href="#s14" gradientUnits="userSpaceOnUse" x1="2104.0" y1="1087.5" x2="2107.8" y2="1079.2"/><linearGradient id="g902" href="#s14" gradientUnits="userSpaceOnUse" x1="2114.0" y1="1092.1" x2="2117.8" y2="1083.9"/><linearGradient id="g903" href="#s14" gradientUnits="userSpaceOnUse" x1="2124.0" y1="1096.7" x2="2127.8" y2="1088.5"/><linearGradient id="g904" href="#s14" gradientUnits="userSpaceOnUse" x1="2134.0" y1="1101.4" x2="2137.8" y2="1093.1"/><linearGradient id="g905" href="#s14" gradientUnits="userSpaceOnUse" x1="2144.0" y1="1106.0" x2="2147.8" y2="1097.8"/><linearGradient id="g906" href="#s14" gradientUnits="userSpaceOnUse" x1="2154.0" y1="1110.7" x2="2157.8" y2="1102.5"/><linearGradient id="g907" href="#s14" gradientUnits="userSpaceOnUse" x1="2164.0" y1="1115.4" x2="2167.9" y2="1107.2"/><linearGradient id="g908" href="#s14" gradientUnits="userSpaceOnUse" x1="2174.0" y1="1120.1" x2="2177.9" y2="1112.0"/><linearGradient id="g909" href="#s14" gradientUnits="userSpaceOnUse" x1="2184.0" y1="1124.9" x2="2187.9" y2="1116.7"/><linearGradient id="g910" href="#s14" gradientUnits="userSpaceOnUse" x1="2194.0" y1="1129.6" x2="2197.9" y2="1121.5"/><linearGradient id="g911" href="#s14" gradientUnits="userSpaceOnUse" x1="2204.0" y1="1134.4" x2="2207.9" y2="1126.3"/><linearGradient id="g912" href="#s14" gradientUnits="userSpaceOnUse" x1="2214.0" y1="1139.2" x2="2217.9" y2="1131.2"/><linearGradient id="g913" href="#s14" gradientUnits="userSpaceOnUse" x1="2224.0" y1="1144.1" x2="2227.9" y2="1136.1"/><linearGradient id="g914" href="#s14" gradientUnits="userSpaceOnUse" x1="2234.0" y1="1148.9" x2="2237.9" y2="1141.0"/><linearGradient id="g915" href="#s14" gradientUnits="userSpaceOnUse" x1="2244.0" y1="1153.8" x2="2247.8" y2="1145.9"/><linearGradient id="g916" href="#s14" gradientUnits="userSpaceOnUse" x1="2254.0" y1="1158.7" x2="2257.8" y2="1150.9"/><linearGradient id="g917" href="#s14" gradientUnits="userSpaceOnUse" x1="2264.0" y1="1163.6" x2="2267.8" y2="1155.8"/><linearGradient id="g918" href="#s14" gradientUnits="userSpaceOnUse" x1="2274.0" y1="1168.5" x2="2277.8" y2="1160.8"/><linearGradient id="g919" href="#s14" gradientUnits="userSpaceOnUse" x1="2284.0" y1="1173.5" x2="2287.8" y2="1165.8"/><linearGradient id="g920" href="#s14" gradientUnits="userSpaceOnUse" x1="2294.0" y1="1178.5" x2="2297.8" y2="1170.9"/><linearGradient id="g921" href="#s14" gradientUnits="userSpaceOnUse" x1="2304.0" y1="1183.5" x2="2307.8" y2="1175.9"/><linearGradient id="g922" href="#s14" gradientUnits="userSpaceOnUse" x1="2314.0" y1="1188.5" x2="2317.8" y2="1181.0"/><linearGradient id="g923" href="#s14" gradientUnits="userSpaceOnUse" x1="2324.0" y1="1193.5" x2="2327.7" y2="1186.1"/><linearGradient id="g924" href="#s14" gradientUnits="userSpaceOnUse" x1="2334.0" y1="1198.6" x2="2337.7" y2="1191.3"/><linearGradient id="g925" href="#s14" gradientUnits="userSpaceOnUse" x1="2344.0" y1="1203.7" x2="2347.7" y2="1196.4"/><linearGradient id="g926" href="#s14" gradientUnits="userSpaceOnUse" x1="2354.0" y1="1208.8" x2="2357.7" y2="1201.6"/><linearGradient id="g927" href="#s14" gradientUnits="userSpaceOnUse" x1="2364.0" y1="1213.9" x2="2367.7" y2="1206.8"/><linearGradient id="g928" href="#s14" gradientUnits="userSpaceOnUse" x1="2374.0" y1="1219.1" x2="2377.7" y2="1212.0"/><linearGradient id="g929" href="#s14" gradientUnits="userSpaceOnUse" x1="2384.0" y1="1224.3" x2="2387.7" y2="1217.2"/><linearGradient id="g930" href="#s14" gradientUnits="userSpaceOnUse" x1="2394.0" y1="1229.5" x2="2397.6" y2="1222.5"/><linearGradient id="g931" href="#s14" gradientUnits="userSpaceOnUse" x1="2404.0" y1="1234.7" x2="2407.6" y2="1227.8"/><linearGradient id="g932" href="#s14" gradientUnits="userSpaceOnUse" x1="2414.0" y1="1239.9" x2="2417.6" y2="1233.1"/><linearGradient id="g933" href="#s14" gradientUnits="userSpaceOnUse" x1="2424.0" y1="1245.2" x2="2427.6" y2="1238.4"/><linearGradient id="g934" href="#s14" gradientUnits="userSpaceOnUse" x1="2434.0" y1="1250.5" x2="2437.6" y2="1243.7"/><linearGradient id="g935" href="#s14" gradientUnits="userSpaceOnUse" x1="2444.0" y1="1255.8" x2="2447.6" y2="1249.1"/><linearGradient id="g936" href="#s14" gradientUnits="userSpaceOnUse" x1="2454.0" y1="1261.2" x2="2457.6" y2="1254.5"/><linearGradient id="g937" href="#s14" gradientUnits="userSpaceOnUse" x1="2464.0" y1="1266.5" x2="2467.5" y2="1259.9"/><linearGradient id="g938" href="#s14" gradientUnits="userSpaceOnUse" x1="2474.0" y1="1271.9" x2="2477.5" y2="1265.4"/><linearGradient id="g939" href="#s14" gradientUnits="userSpaceOnUse" x1="2484.0" y1="1277.3" x2="2487.5" y2="1270.8"/><linearGradient id="g940" href="#s14" gradientUnits="userSpaceOnUse" x1="2494.0" y1="1282.7" x2="2497.5" y2="1276.3"/><linearGradient id="g941" href="#s14" gradientUnits="userSpaceOnUse" x1="2504.0" y1="1288.2" x2="2507.5" y2="1281.8"/><linearGradient id="g942" href="#s14" gradientUnits="userSpaceOnUse" x1="2514.0" y1="1293.7" x2="2517.5" y2="1287.4"/><linearGradient id="g943" href="#s14" gradientUnits="userSpaceOnUse" x1="2524.0" y1="1299.2" x2="2527.4" y2="1292.9"/><linearGradient id="g944" href="#s14" gradientUnits="userSpaceOnUse" x1="2534.0" y1="1304.7" x2="2537.4" y2="1298.5"/><linearGradient id="g945" href="#s14" gradientUnits="userSpaceOnUse" x1="2544.0" y1="1310.3" x2="2547.4" y2="1304.1"/><linearGradient id="g946" href="#s14" gradientUnits="userSpaceOnUse" x1="2554.0" y1="1315.8" x2="2557.3" y2="1309.9"/><linearGradient id="g947" href="#s14" gradientUnits="userSpaceOnUse" x1="2564.0" y1="1321.4" x2="2567.1" y2="1315.9"/><linearGradient id="g948" href="#s14" gradientUnits="userSpaceOnUse" x1="2574.0" y1="1327.0" x2="2576.9" y2="1322.0"/><linearGradient id="g949" href="#s14" gradientUnits="userSpaceOnUse" x1="2584.0" y1="1332.7" x2="2586.6" y2="1328.0"/><linearGradient id="g950" href="#s14" gradientUnits="userSpaceOnUse" x1="2594.0" y1="1338.4" x2="2596.4" y2="1334.1"/><linearGradient id="g951" href="#s14" gradientUnits="userSpaceOnUse" x1="2604.0" y1="1344.1" x2="2606.2" y2="1340.2"/><linearGradient id="g952" href="#s14" gradientUnits="userSpaceOnUse" x1="2614.0" y1="1349.8" x2="2615.9" y2="1346.4"/><linearGradient id="g953" href="#s14" gradientUnits="userSpaceOnUse" x1="2624.0" y1="1355.5" x2="2625.7" y2="1352.5"/><linearGradient id="g954" href="#s14" gradientUnits="userSpaceOnUse" x1="2634.0" y1="1361.3" x2="2635.5" y2="1358.7"/><linearGradient id="g955" href="#s14" gradientUnits="userSpaceOnUse" x1="2644.0" y1="1367.1" x2="2645.2" y2="1364.9"/><linearGradient id="g956" href="#s14" gradientUnits="userSpaceOnUse" x1="2654.0" y1="1372.9" x2="2655.0" y2="1371.2"/><linearGradient id="g957" href="#s14" gradientUnits="userSpaceOnUse" x1="2664.0" y1="1378.7" x2="2664.8" y2="1377.4"/><linearGradient id="g958" href="#s14" gradientUnits="userSpaceOnUse" x1="2674.0" y1="1384.6" x2="2674.5" y2="1383.7"/><linearGradient id="g959" href="#s14" gradientUnits="userSpaceOnUse" x1="674.0" y1="601.6" x2="673.5" y2="603.5"/><linearGradient id="g960" href="#s14" gradientUnits="userSpaceOnUse" x1="684.0" y1="604.1" x2="683.5" y2="606.1"/><linearGradient id="g961" href="#s14" gradientUnits="userSpaceOnUse" x1="694.0" y1="606.6" x2="693.5" y2="608.7"/><linearGradient id="g962" href="#s14" gradientUnits="userSpaceOnUse" x1="704.0" y1="609.1" x2="703.5" y2="611.2"/><linearGradient id="g963" href="#s14" gradientUnits="userSpaceOnUse" x1="714.0" y1="611.6" x2="713.4" y2="613.8"/><linearGradient id="g964" href="#s14" gradientUnits="userSpaceOnUse" x1="724.0" y1="614.1" x2="723.4" y2="616.4"/><linearGradient id="g965" href="#s14" gradientUnits="userSpaceOnUse" x1="734.0" y1="616.6" x2="733.4" y2="619.0"/><linearGradient id="g966" href="#s14" gradientUnits="userSpaceOnUse" x1="744.0" y1="619.2" x2="743.4" y2="621.6"/><linearGradient id="g967" href="#s14" gradientUnits="userSpaceOnUse" x1="754.0" y1="621.7" x2="753.3" y2="624.3"/><linearGradient id="g968" href="#s14" gradientUnits="userSpaceOnUse" x1="764.0" y1="624.3" x2="763.3" y2="626.9"/><linearGradient id="g969" href="#s14" gradientUnits="userSpaceOnUse" x1="774.0" y1="626.8" x2="773.3" y2="629.6"/><linearGradient id="g970" href="#s14" gradientUnits="userSpaceOnUse" x1="784.0" y1="629.4" x2="783.3" y2="632.2"/><linearGradient id="g971" href="#s14" gradientUnits="userSpaceOnUse" x1="794.0" y1="632.0" x2="793.3" y2="634.9"/><linearGradient id="g972" href="#s14" gradientUnits="userSpaceOnUse" x1="804.0" y1="634.6" x2="803.2" y2="637.5"/><linearGradient id="g973" href="#s14" gradientUnits="userSpaceOnUse" x1="814.0" y1="637.2" x2="813.2" y2="640.2"/><linearGradient id="g974" href="#s14" gradientUnits="userSpaceOnUse" x1="824.0" y1="639.8" x2="823.2" y2="642.9"/><linearGradient id="g975" href="#s14" gradientUnits="userSpaceOnUse" x1="834.0" y1="642.4" x2="833.2" y2="645.6"/><linearGradient id="g976" href="#s14" gradientUnits="userSpaceOnUse" x1="844.0" y1="645.1" x2="843.1" y2="648.3"/><linearGradient id="g977" href="#s14" gradientUnits="userSpaceOnUse" x1="854.0" y1="647.7" x2="853.1" y2="651.1"/><linearGradient id="g978" href="#s14" gradientUnits="userSpaceOnUse" x1="864.0" y1="650.4" x2="863.1" y2="653.8"/><linearGradient id="g979" href="#s14" gradientUnits="userSpaceOnUse" x1="874.0" y1="653.0" x2="873.1" y2="656.5"/><linearGradient id="g980" href="#s14" gradientUnits="userSpaceOnUse" x1="884.0" y1="655.7" x2="883.0" y2="659.3"/><linearGradient id="g981" href="#s14" gradientUnits="userSpaceOnUse" x1="894.0" y1="658.4" x2="893.0" y2="662.1"/><linearGradient id="g982" href="#s14" gradientUnits="userSpaceOnUse" x1="904.0" y1="661.1" x2="903.0" y2="664.8"/><linearGradient id="g983" href="#s14" gradientUnits="userSpaceOnUse" x1="914.0" y1="663.8" x2="913.0" y2="667.6"/><linearGradient id="g984" href="#s14" gradientUnits="userSpaceOnUse" x1="924.0" y1="666.5" x2="923.0" y2="670.4"/><linearGradient id="g985" href="#s14" gradientUnits="userSpaceOnUse" x1="934.0" y1="669.3" x2="932.9" y2="673.1"/><linearGradient id="g986" href="#s14" gradientUnits="userSpaceOnUse" x1="944.0" y1="672.0" x2="942.9" y2="675.9"/><linearGradient id="g987" href="#s14" gradientUnits="userSpaceOnUse" x1="954.0" y1="674.8" x2="952.9" y2="678.7"/><linearGradient id="g988" href="#s14" gradientUnits="userSpaceOnUse" x1="964.0" y1="677.5" x2="962.9" y2="681.5"/><linearGradient id="g989" href="#s14" gradientUnits="userSpaceOnUse" x1="974.0" y1="680.3" x2="972.9" y2="684.4"/><linearGradient id="g990" href="#s14" gradientUnits="userSpaceOnUse" x1="984.0" y1="683.1" x2="982.9" y2="687.2"/><linearGradient id="g991" href="#s14" gradientUnits="userSpaceOnUse" x1="994.0" y1="685.9" x2="992.8" y2="690.0"/><linearGradient id="g992" href="#s14" gradientUnits="userSpaceOnUse" x1="1004.0" y1="688.7" x2="1002.8" y2="692.9"/><linearGradient id="g993" href="#s14" gradientUnits="userSpaceOnUse" x1="1014.0" y1="691.5" x2="1012.8" y2="695.8"/><linearGradient id="g994" href="#s14" gradientUnits="userSpaceOnUse" x1="1024.0" y1="694.4" x2="1022.8" y2="698.6"/><linearGradient id="g995" href="#s14" gradientUnits="userSpaceOnUse" x1="1034.0" y1="697.2" x2="1032.8" y2="701.5"/><linearGradient id="g996" href="#s14" gradientUnits="userSpaceOnUse" x1="1044.0" y1="700.1" x2="1042.7" y2="704.4"/><linearGradient id="g997" href="#s14" gradientUnits="userSpaceOnUse" x1="1054.0" y1="703.0" x2="1052.7" y2="707.4"/><linearGradient id="g998" href="#s14" gradientUnits="userSpaceOnUse" x1="1064.0" y1="705.8" x2="1062.7" y2="710.3"/><linearGradient id="g999" href="#s14" gradientUnits="userSpaceOnUse" x1="1074.0" y1="708.7" x2="1072.7" y2="713.2"/><linearGradient id="g1000" href="#s14" gradientUnits="userSpaceOnUse" x1="1084.0" y1="711.7" x2="1082.7" y2="716.2"/><linearGradient id="g1001" href="#s14" gradientUnits="userSpaceOnUse" x1="1094.0" y1="714.6" x2="1092.7" y2="719.2"/><linearGradient id="g1002" href="#s14" gradientUnits="userSpaceOnUse" x1="1104.0" y1="717.5" x2="1102.6" y2="722.1"/><linearGradient id="g1003" href="#s14" gradientUnits="userSpaceOnUse" x1="1114.0" y1="720.5" x2="1112.6" y2="725.1"/><linearGradient id="g1004" href="#s14" gradientUnits="userSpaceOnUse" x1="1124.0" y1="723.4" x2="1122.6" y2="728.1"/><linearGradient id="g1005" href="#s14" gradientUnits="userSpaceOnUse" x1="1134.0" y1="726.4" x2="1132.6" y2="731.1"/><linearGradient id="g1006" href="#s14" gradientUnits="userSpaceOnUse" x1="1144.0" y1="729.4" x2="1142.6" y2="734.2"/><linearGradient id="g1007" href="#s14" gradientUnits="userSpaceOnUse" x1="1154.0" y1="732.4" x2="1152.5" y2="737.2"/><linearGradient id="g1008" href="#s14" gradientUnits="userSpaceOnUse" x1="1164.0" y1="735.4" x2="1162.5" y2="740.3"/><linearGradient id="g1009" href="#s14" gradientUnits="userSpaceOnUse" x1="1174.0" y1="738.4" x2="1172.5" y2="743.3"/><linearGradient id="g1010" href="#s14" gradientUnits="userSpaceOnUse" x1="1184.0" y1="741.4" x2="1182.5" y2="746.4"/><linearGradient id="g1011" href="#s14" gradientUnits="userSpaceOnUse" x1="1194.0" y1="744.5" x2="1192.5" y2="749.5"/><linearGradient id="g1012" href="#s14" gradientUnits="userSpaceOnUse" x1="1204.0" y1="747.6" x2="1202.5" y2="752.6"/><linearGradient id="g1013" href="#s14" gradientUnits="userSpaceOnUse" x1="1214.0" y1="750.6" x2="1212.4" y2="755.7"/><linearGradient id="g1014" href="#s14" gradientUnits="userSpaceOnUse" x1="1224.0" y1="753.7" x2="1222.4" y2="758.9"/><linearGradient id="g1015" href="#s14" gradientUnits="userSpaceOnUse" x1="1234.0" y1="756.8" x2="1232.4" y2="762.0"/><linearGradient id="g1016" href="#s14" gradientUnits="userSpaceOnUse" x1="1244.0" y1="760.0" x2="1242.4" y2="765.2"/><linearGradient id="g1017" href="#s14" gradientUnits="userSpaceOnUse" x1="1254.0" y1="763.1" x2="1252.4" y2="768.3"/><linearGradient id="g1018" href="#s14" gradientUnits="userSpaceOnUse" x1="1264.0" y1="766.2" x2="1262.3" y2="771.5"/><linearGradient id="g1019" href="#s14" gradientUnits="userSpaceOnUse" x1="1274.0" y1="769.4" x2="1272.3" y2="774.7"/><linearGradient id="g1020" href="#s14" gradientUnits="userSpaceOnUse" x1="1284.0" y1="772.6" x2="1282.3" y2="777.9"/><linearGradient id="g1021" href="#s14" gradientUnits="userSpaceOnUse" x1="1294.0" y1="775.8" x2="1292.3" y2="781.2"/><linearGradient id="g1022" href="#s14" gradientUnits="userSpaceOnUse" x1="1304.0" y1="779.0" x2="1302.2" y2="784.4"/><linearGradient id="g1023" href="#s14" gradientUnits="userSpaceOnUse" x1="1314.0" y1="782.2" x2="1312.2" y2="787.7"/><linearGradient id="g1024" href="#s14" gradientUnits="userSpaceOnUse" x1="1324.0" y1="785.4" x2="1322.2" y2="791.0"/><linearGradient id="g1025" href="#s14" gradientUnits="userSpaceOnUse" x1="1334.0" y1="788.6" x2="1332.2" y2="794.3"/><linearGradient id="g1026" href="#s14" gradientUnits="userSpaceOnUse" x1="1344.0" y1="791.9" x2="1342.1" y2="797.6"/><linearGradient id="g1027" href="#s14" gradientUnits="userSpaceOnUse" x1="1354.0" y1="795.2" x2="1352.1" y2="801.0"/><linearGradient id="g1028" href="#s14" gradientUnits="userSpaceOnUse" x1="1364.0" y1="798.5" x2="1362.1" y2="804.3"/><linearGradient id="g1029" href="#s14" gradientUnits="userSpaceOnUse" x1="1374.0" y1="801.8" x2="1372.0" y2="807.7"/><linearGradient id="g1030" href="#s14" gradientUnits="userSpaceOnUse" x1="1384.0" y1="805.1" x2="1382.0" y2="811.1"/><linearGradient id="g1031" href="#s14" gradientUnits="userSpaceOnUse" x1="1394.0" y1="808.4" x2="1392.0" y2="814.5"/><linearGradient id="g1032" href="#s14" gradientUnits="userSpaceOnUse" x1="1404.0" y1="811.8" x2="1401.9" y2="817.9"/><linearGradient id="g1033" href="#s14" gradientUnits="userSpaceOnUse" x1="1414.0" y1="815.1" x2="1411.9" y2="821.3"/><linearGradient id="g1034" href="#s14" gradientUnits="userSpaceOnUse" x1="1424.0" y1="818.5" x2="1421.9" y2="824.8"/><linearGradient id="g1035" href="#s14" gradientUnits="userSpaceOnUse" x1="1434.0" y1="821.9" x2="1431.8" y2="828.2"/><linearGradient id="g1036" href="#s14" gradientUnits="userSpaceOnUse" x1="1444.0" y1="825.3" x2="1441.8" y2="831.7"/><linearGradient id="g1037" href="#s14" gradientUnits="userSpaceOnUse" x1="1454.0" y1="828.7" x2="1451.8" y2="835.2"/><linearGradient id="g1038" href="#s14" gradientUnits="userSpaceOnUse" x1="1464.0" y1="832.1" x2="1461.7" y2="838.7"/><linearGradient id="g1039" href="#s14" gradientUnits="userSpaceOnUse" x1="1474.0" y1="835.6" x2="1471.7" y2="842.2"/><linearGradient id="g1040" href="#s14" gradientUnits="userSpaceOnUse" x1="1484.0" y1="839.1" x2="1481.7" y2="845.7"/><linearGradient id="g1041" href="#s14" gradientUnits="userSpaceOnUse" x1="1494.0" y1="842.5" x2="1491.7" y2="849.3"/><linearGradient id="g1042" href="#s14" gradientUnits="userSpaceOnUse" x1="1504.0" y1="846.0" x2="1501.6" y2="852.8"/><linearGradient id="g1043" href="#s14" gradientUnits="userSpaceOnUse" x1="1514.0" y1="849.6" x2="1511.6" y2="856.4"/><linearGradient id="g1044" href="#s14" gradientUnits="userSpaceOnUse" x1="1524.0" y1="853.1" x2="1521.5" y2="860.0"/><linearGradient id="g1045" href="#s14" gradientUnits="userSpaceOnUse" x1="1534.0" y1="856.6" x2="1531.5" y2="863.6"/><linearGradient id="g1046" href="#s14" gradientUnits="userSpaceOnUse" x1="1544.0" y1="860.2" x2="1541.5" y2="867.3"/><linearGradient id="g1047" href="#s14" gradientUnits="userSpaceOnUse" x1="1554.0" y1="863.8" x2="1551.4" y2="870.9"/><linearGradient id="g1048" href="#s14" gradientUnits="userSpaceOnUse" x1="1564.0" y1="867.4" x2="1561.4" y2="874.6"/><linearGradient id="g1049" href="#s14" gradientUnits="userSpaceOnUse" x1="1574.0" y1="871.0" x2="1571.4" y2="878.2"/><linearGradient id="g1050" href="#s14" gradientUnits="userSpaceOnUse" x1="1584.0" y1="874.6" x2="1581.3" y2="881.9"/><linearGradient id="g1051" href="#s14" gradientUnits="userSpaceOnUse" x1="1594.0" y1="878.3" x2="1591.3" y2="885.6"/><linearGradient id="g1052" href="#s14" gradientUnits="userSpaceOnUse" x1="1604.0" y1="881.9" x2="1601.3" y2="889.3"/><linearGradient id="g1053" href="#s14" gradientUnits="userSpaceOnUse" x1="1614.0" y1="885.6" x2="1611.2" y2="893.1"/><linearGradient id="g1054" href="#s14" gradientUnits="userSpaceOnUse" x1="1624.0" y1="889.3" x2="1621.2" y2="896.8"/><linearGradient id="g1055" href="#s14" gradientUnits="userSpaceOnUse" x1="1634.0" y1="893.0" x2="1631.2" y2="900.6"/><linearGradient id="g1056" href="#s14" gradientUnits="userSpaceOnUse" x1="1644.0" y1="896.7" x2="1641.1" y2="904.4"/><linearGradient id="g1057" href="#s14" gradientUnits="userSpaceOnUse" x1="1654.0" y1="900.5" x2="1651.1" y2="908.2"/><linearGradient id="g1058" href="#s14" gradientUnits="userSpaceOnUse" x1="1664.0" y1="904.2" x2="1661.1" y2="912.0"/><linearGradient id="g1059" href="#s14" gradientUnits="userSpaceOnUse" x1="1674.0" y1="908.0" x2="1671.0" y2="915.9"/><linearGradient id="g1060" href="#s14" gradientUnits="userSpaceOnUse" x1="1684.0" y1="911.8" x2="1681.0" y2="919.7"/><linearGradient id="g1061" href="#s14" gradientUnits="userSpaceOnUse" x1="1694.0" y1="915.6" x2="1690.9" y2="923.6"/><linearGradient id="g1062" href="#s14" gradientUnits="userSpaceOnUse" x1="1704.0" y1="919.4" x2="1700.9" y2="927.5"/><linearGradient id="g1063" href="#s14" gradientUnits="userSpaceOnUse" x1="1714.0" y1="923.3" x2="1710.9" y2="931.4"/><linearGradient id="g1064" href="#s14" gradientUnits="userSpaceOnUse" x1="1724.0" y1="927.1" x2="1720.8" y2="935.3"/><linearGradient id="g1065" href="#s14" gradientUnits="userSpaceOnUse" x1="1734.0" y1="931.0" x2="1730.8" y2="939.2"/><linearGradient id="g1066" href="#s14" gradientUnits="userSpaceOnUse" x1="1744.0" y1="934.9" x2="1740.8" y2="943.2"/><linearGradient id="g1067" href="#s14" gradientUnits="userSpaceOnUse" x1="1754.0" y1="938.8" x2="1750.7" y2="947.2"/><linearGradient id="g1068" href="#s14" gradientUnits="userSpaceOnUse" x1="1764.0" y1="942.8" x2="1760.7" y2="951.2"/><linearGradient id="g1069" href="#s14" gradientUnits="userSpaceOnUse" x1="1774.0" y1="946.7" x2="1770.6" y2="955.2"/><linearGradient id="g1070" href="#s14" gradientUnits="userSpaceOnUse" x1="1784.0" y1="950.7" x2="1780.6" y2="959.2"/><linearGradient id="g1071" href="#s14" gradientUnits="userSpaceOnUse" x1="1794.0" y1="954.7" x2="1790.6" y2="963.2"/><linearGradient id="g1072" href="#s14" gradientUnits="userSpaceOnUse" x1="1804.0" y1="958.7" x2="1800.5" y2="967.3"/><linearGradient id="g1073" href="#s14" gradientUnits="userSpaceOnUse" x1="1814.0" y1="962.7" x2="1810.5" y2="971.3"/><linearGradient id="g1074" href="#s14" gradientUnits="userSpaceOnUse" x1="1824.0" y1="966.7" x2="1820.5" y2="975.3"/><linearGradient id="g1075" href="#s14" gradientUnits="userSpaceOnUse" x1="1834.0" y1="970.8" x2="1830.5" y2="979.4"/><linearGradient id="g1076" href="#s14" gradientUnits="userSpaceOnUse" x1="1844.0" y1="974.9" x2="1840.5" y2="983.4"/><linearGradient id="g1077" href="#s14" gradientUnits="userSpaceOnUse" x1="1854.0" y1="978.9" x2="1850.5" y2="987.5"/><linearGradient id="g1078" href="#s14" gradientUnits="userSpaceOnUse" x1="1864.0" y1="983.1" x2="1860.5" y2="991.6"/><linearGradient id="g1079" href="#s14" gradientUnits="userSpaceOnUse" x1="1874.0" y1="987.2" x2="1870.5" y2="995.7"/><linearGradient id="g1080" href="#s14" gradientUnits="userSpaceOnUse" x1="1884.0" y1="991.3" x2="1880.5" y2="999.9"/><linearGradient id="g1081" href="#s14" gradientUnits="userSpaceOnUse" x1="1894.0" y1="995.5" x2="1890.4" y2="1004.0"/><linearGradient id="g1082" href="#s14" gradientUnits="userSpaceOnUse" x1="1904.0" y1="999.7" x2="1900.4" y2="1008.2"/><linearGradient id="g1083" href="#s14" gradientUnits="userSpaceOnUse" x1="1914.0" y1="1003.9" x2="1910.4" y2="1012.4"/><linearGradient id="g1084" href="#s14" gradientUnits="userSpaceOnUse" x1="1924.0" y1="1008.1" x2="1920.4" y2="1016.6"/><linearGradient id="g1085" href="#s14" gradientUnits="userSpaceOnUse" x1="1934.0" y1="1012.4" x2="1930.4" y2="1020.8"/><linearGradient id="g1086" href="#s14" gradientUnits="userSpaceOnUse" x1="1944.0" y1="1016.6" x2="1940.4" y2="1025.1"/><linearGradient id="g1087" href="#s14" gradientUnits="userSpaceOnUse" x1="1954.0" y1="1020.9" x2="1950.4" y2="1029.4"/><linearGradient id="g1088" href="#s14" gradientUnits="userSpaceOnUse" x1="1964.0" y1="1025.2" x2="1960.4" y2="1033.7"/><linearGradient id="g1089" href="#s14" gradientUnits="userSpaceOnUse" x1="1974.0" y1="1029.5" x2="1970.4" y2="1038.0"/><linearGradient id="g1090" href="#s14" gradientUnits="userSpaceOnUse" x1="1984.0" y1="1033.9" x2="1980.3" y2="1042.3"/><linearGradient id="g1091" href="#s14" gradientUnits="userSpaceOnUse" x1="1994.0" y1="1038.2" x2="1990.3" y2="1046.6"/><linearGradient id="g1092" href="#s14" gradientUnits="userSpaceOnUse" x1="2004.0" y1="1042.6" x2="2000.3" y2="1051.0"/><linearGradient id="g1093" href="#s14" gradientUnits="userSpaceOnUse" x1="2014.0" y1="1047.0" x2="2010.3" y2="1055.4"/><linearGradient id="g1094" href="#s14" gradientUnits="userSpaceOnUse" x1="2024.0" y1="1051.4" x2="2020.3" y2="1059.8"/><linearGradient id="g1095" href="#s14" gradientUnits="userSpaceOnUse" x1="2034.0" y1="1055.9" x2="2030.3" y2="1064.2"/><linearGradient id="g1096" href="#s14" gradientUnits="userSpaceOnUse" x1="2044.0" y1="1060.3" x2="2040.3" y2="1068.7"/><linearGradient id="g1097" href="#s14" gradientUnits="userSpaceOnUse" x1="2054.0" y1="1064.8" x2="2050.3" y2="1073.1"/><linearGradient id="g1098" href="#s14" gradientUnits="userSpaceOnUse" x1="2064.0" y1="1069.3" x2="2060.3" y2="1077.6"/><linearGradient id="g1099" href="#s14" gradientUnits="userSpaceOnUse" x1="2074.0" y1="1073.8" x2="2070.2" y2="1082.1"/><linearGradient id="g1100" href="#s14" gradientUnits="userSpaceOnUse" x1="2084.0" y1="1078.4" x2="2080.2" y2="1086.7"/><linearGradient id="g1101" href="#s14" gradientUnits="userSpaceOnUse" x1="2094.0" y1="1082.9" x2="2090.2" y2="1091.2"/><linearGradient id="g1102" href="#s14" gradientUnits="userSpaceOnUse" x1="2104.0" y1="1087.5" x2="2100.2" y2="1095.8"/><linearGradient id="g1103" href="#s14" gradientUnits="userSpaceOnUse" x1="2114.0" y1="1092.1" x2="2110.2" y2="1100.3"/><linearGradient id="g1104" href="#s14" gradientUnits="userSpaceOnUse" x1="2124.0" y1="1096.7" x2="2120.2" y2="1105.0"/><linearGradient id="g1105" href="#s14" gradientUnits="userSpaceOnUse" x1="2134.0" y1="1101.4" x2="2130.2" y2="1109.6"/><linearGradient id="g1106" href="#s14" gradientUnits="userSpaceOnUse" x1="2144.0" y1="1106.0" x2="2140.2" y2="1114.2"/><linearGradient id="g1107" href="#s14" gradientUnits="userSpaceOnUse" x1="2154.0" y1="1110.7" x2="2150.2" y2="1118.9"/><linearGradient id="g1108" href="#s14" gradientUnits="userSpaceOnUse" x1="2164.0" y1="1115.4" x2="2160.1" y2="1123.6"/><linearGradient id="g1109" href="#s14" gradientUnits="userSpaceOnUse" x1="2174.0" y1="1120.1" x2="2170.1" y2="1128.3"/><linearGradient id="g1110" href="#s14" gradientUnits="userSpaceOnUse" x1="2184.0" y1="1124.9" x2="2180.1" y2="1133.0"/><linearGradient id="g1111" href="#s14" gradientUnits="userSpaceOnUse" x1="2194.0" y1="1129.6" x2="2190.1" y2="1137.8"/><linearGradient id="g1112" href="#s14" gradientUnits="userSpaceOnUse" x1="2204.0" y1="1134.4" x2="2200.1" y2="1142.5"/><linearGradient id="g1113" href="#s14" gradientUnits="userSpaceOnUse" x1="2214.0" y1="1139.2" x2="2210.1" y2="1147.3"/><linearGradient id="g1114" href="#s14" gradientUnits="userSpaceOnUse" x1="2224.0" y1="1144.1" x2="2220.1" y2="1152.1"/><linearGradient id="g1115" href="#s14" gradientUnits="userSpaceOnUse" x1="2234.0" y1="1148.9" x2="2230.1" y2="1156.8"/><linearGradient id="g1116" href="#s14" gradientUnits="userSpaceOnUse" x1="2244.0" y1="1153.8" x2="2240.2" y2="1161.7"/><linearGradient id="g1117" href="#s14" gradientUnits="userSpaceOnUse" x1="2254.0" y1="1158.7" x2="2250.2" y2="1166.5"/><linearGradient id="g1118" href="#s14" gradientUnits="userSpaceOnUse" x1="2264.0" y1="1163.6" x2="2260.2" y2="1171.3"/><linearGradient id="g1119" href="#s14" gradientUnits="userSpaceOnUse" x1="2274.0" y1="1168.5" x2="2270.2" y2="1176.2"/><linearGradient id="g1120" href="#s14" gradientUnits="userSpaceOnUse" x1="2284.0" y1="1173.5" x2="2280.2" y2="1181.1"/><linearGradient id="g1121" href="#s14" gradientUnits="userSpaceOnUse" x1="2294.0" y1="1178.5" x2="2290.2" y2="1186.0"/><linearGradient id="g1122" href="#s14" gradientUnits="userSpaceOnUse" x1="2304.0" y1="1183.5" x2="2300.2" y2="1191.0"/><linearGradient id="g1123" href="#s14" gradientUnits="userSpaceOnUse" x1="2314.0" y1="1188.5" x2="2310.2" y2="1195.9"/><linearGradient id="g1124" href="#s14" gradientUnits="userSpaceOnUse" x1="2324.0" y1="1193.5" x2="2320.3" y2="1200.9"/><linearGradient id="g1125" href="#s14" gradientUnits="userSpaceOnUse" x1="2334.0" y1="1198.6" x2="2330.3" y2="1205.9"/><linearGradient id="g1126" href="#s14" gradientUnits="userSpaceOnUse" x1="2344.0" y1="1203.7" x2="2340.3" y2="1211.0"/><linearGradient id="g1127" href="#s14" gradientUnits="userSpaceOnUse" x1="2354.0" y1="1208.8" x2="2350.3" y2="1216.0"/><linearGradient id="g1128" href="#s14" gradientUnits="userSpaceOnUse" x1="2364.0" y1="1213.9" x2="2360.3" y2="1221.1"/><linearGradient id="g1129" href="#s14" gradientUnits="userSpaceOnUse" x1="2374.0" y1="1219.1" x2="2370.3" y2="1226.2"/><linearGradient id="g1130" href="#s14" gradientUnits="userSpaceOnUse" x1="2384.0" y1="1224.3" x2="2380.3" y2="1231.3"/><linearGradient id="g1131" href="#s14" gradientUnits="userSpaceOnUse" x1="2394.0" y1="1229.5" x2="2390.4" y2="1236.5"/><linearGradient id="g1132" href="#s14" gradientUnits="userSpaceOnUse" x1="2404.0" y1="1234.7" x2="2400.4" y2="1241.6"/><linearGradient id="g1133" href="#s14" gradientUnits="userSpaceOnUse" x1="2414.0" y1="1239.9" x2="2410.4" y2="1246.8"/><linearGradient id="g1134" href="#s14" gradientUnits="userSpaceOnUse" x1="2424.0" y1="1245.2" x2="2420.4" y2="1252.0"/><linearGradient id="g1135" href="#s14" gradientUnits="userSpaceOnUse" x1="2434.0" y1="1250.5" x2="2430.4" y2="1257.3"/><linearGradient id="g1136" href="#s14" gradientUnits="userSpaceOnUse" x1="2444.0" y1="1255.8" x2="2440.4" y2="1262.5"/><linearGradient id="g1137" href="#s14" gradientUnits="userSpaceOnUse" x1="2454.0" y1="1261.2" x2="2450.4" y2="1267.8"/><linearGradient id="g1138" href="#s14" gradientUnits="userSpaceOnUse" x1="2464.0" y1="1266.5" x2="2460.5" y2="1273.1"/><linearGradient id="g1139" href="#s14" gradientUnits="userSpaceOnUse" x1="2474.0" y1="1271.9" x2="2470.5" y2="1278.4"/><linearGradient id="g1140" href="#s14" gradientUnits="userSpaceOnUse" x1="2484.0" y1="1277.3" x2="2480.5" y2="1283.8"/><linearGradient id="g1141" href="#s14" gradientUnits="userSpaceOnUse" x1="2494.0" y1="1282.7" x2="2490.5" y2="1289.2"/><linearGradient id="g1142" href="#s14" gradientUnits="userSpaceOnUse" x1="2504.0" y1="1288.2" x2="2500.5" y2="1294.6"/><linearGradient id="g1143" href="#s14" gradientUnits="userSpaceOnUse" x1="2514.0" y1="1293.7" x2="2510.5" y2="1300.0"/><linearGradient id="g1144" href="#s14" gradientUnits="userSpaceOnUse" x1="2524.0" y1="1299.2" x2="2520.6" y2="1305.4"/><linearGradient id="g1145" href="#s14" gradientUnits="userSpaceOnUse" x1="2534.0" y1="1304.7" x2="2530.6" y2="1310.9"/><linearGradient id="g1146" href="#s14" gradientUnits="userSpaceOnUse" x1="2544.0" y1="1310.3" x2="2540.6" y2="1316.4"/><linearGradient id="g1147" href="#s14" gradientUnits="userSpaceOnUse" x1="2554.0" y1="1315.8" x2="2550.7" y2="1321.7"/><linearGradient id="g1148" href="#s14" gradientUnits="userSpaceOnUse" x1="2564.0" y1="1321.4" x2="2560.9" y2="1326.9"/><linearGradient id="g1149" href="#s14" gradientUnits="userSpaceOnUse" x1="2574.0" y1="1327.0" x2="2571.1" y2="1332.1"/><linearGradient id="g1150" href="#s14" gradientUnits="userSpaceOnUse" x1="2584.0" y1="1332.7" x2="2581.4" y2="1337.3"/><linearGradient id="g1151" href="#s14" gradientUnits="userSpaceOnUse" x1="2594.0" y1="1338.4" x2="2591.6" y2="1342.6"/><linearGradient id="g1152" href="#s14" gradientUnits="userSpaceOnUse" x1="2604.0" y1="1344.1" x2="2601.8" y2="1347.9"/><linearGradient id="g1153" href="#s14" gradientUnits="userSpaceOnUse" x1="2614.0" y1="1349.8" x2="2612.1" y2="1353.2"/><linearGradient id="g1154" href="#s14" gradientUnits="userSpaceOnUse" x1="2624.0" y1="1355.5" x2="2622.3" y2="1358.5"/><linearGradient id="g1155" href="#s14" gradientUnits="userSpaceOnUse" x1="2634.0" y1="1361.3" x2="2632.5" y2="1363.8"/><linearGradient id="g1156" href="#s14" gradientUnits="userSpaceOnUse" x1="2644.0" y1="1367.1" x2="2642.8" y2="1369.2"/><linearGradient id="g1157" href="#s14" gradientUnits="userSpaceOnUse" x1="2654.0" y1="1372.9" x2="2653.0" y2="1374.6"/><linearGradient id="g1158" href="#s14" gradientUnits="userSpaceOnUse" x1="2664.0" y1="1378.7" x2="2663.2" y2="1380.0"/><linearGradient id="g1159" href="#s14" gradientUnits="userSpaceOnUse" x1="2674.0" y1="1384.6" x2="2673.5" y2="1385.5"/><clipPath id="cv"><rect x="15" y="224" width="2850" height="1524"/></clipPath></defs><g clip-path="url(#cv)"><polygon points="62.5,589 104.8,525.8 119.4,524.5 124.7,521.9 165.7,483.5 241,471.6 264.9,466.3 267.5,454.4 332,447 338.6,446.3 346.4,445.2 357.6,444 374.1,442.8 398,442 434,441.5 480.8,441.1 531.2,440.8 578,440.8 614,441 636.9,441.4 651.5,442.1 661.2,443 669.6,444 680,445 691.4,445.9 701.6,446.8 712,447.9 724.3,449.2 740,451 760.8,453.5 785.6,456.5 812,459.7 837.6,463 860,466 877.9,468.5 893,470.8 907,473 922.1,475.5 940,478.5 961.8,482.1 986.1,486.1 1011.5,490.4 1036.6,494.7 1060,499 1081.3,503.1 1101.4,507.3 1121,511.4 1140.3,515.7 1160,520 1180.3,524.5 1201,529.2 1221.4,533.9 1241.3,538.6 1260,543 1277.6,547.3 1294.4,551.5 1310.4,555.5 1325.6,559.4 1340,563 1353,566.2 1364.5,569 1375.5,571.7 1387,574.6 1400,578 1415,581.9 1431.5,586.2 1448.5,590.7 1465,595.4 1480,600 1492.3,604.4 1502.6,608.7 1512.6,613.2 1524.5,618.2 1540,624 1560.8,631 1585.6,639.1 1612,647.6 1637.6,655.8 1660,663 1677.9,668.8 1693,673.7 1707,678.2 1722.1,683.1 1740,689 1762.4,696.4 1788,704.9 1814.4,713.7 1839.2,722 1860,729 1873.6,733.4 1881.7,735.7 1888.9,737.9 1900.1,741.9 1920,749.6 1950.8,761.9 1989.2,777.4 2032.1,795 2076.1,813.3 2118,831 2157.8,848.1 2197.6,865.5 2237.4,883.2 2277.2,901.3 2317,920 2356.6,939.1 2396.2,958.7 2435.8,978.7 2475.4,999.5 2515,1021 2557,1044.5 2601.2,1069.9 2644.4,1095.5 2683.1,1119.4 2714,1140 2735.3,1156.9 2749.2,1171.3 2758.4,1183.6 2765.5,1194.4 2773,1204 2780.7,1211.6 2786.8,1216.9 2791.8,1221.2 2796.1,1225.8 2800,1232 2803.5,1240.4 2806.3,1250.2 2808.6,1260.4 2810.4,1270.3 2812,1279 2813.3,1286.1 2814.2,1292.1 2814.8,1297.8 2815.1,1303.8 2815,1311 2814.7,1319.4 2814.2,1328.5 2813.2,1338.2 2811.9,1348.4 2810,1359 2807.4,1370.2 2804,1382.1 2800.3,1394.4 2796.5,1406.5 2793,1418 2789.9,1429.4 2786.9,1441 2783.9,1452.1 2780.7,1462 2777,1470 2773.6,1475.2 2770.6,1478.1 2766.9,1480 2761.4,1482.2 2753,1486 2740.7,1491.9 2725.4,1499 2708.3,1506.6 2690.7,1514.1 2674,1521 2657.3,1527.4 2639.9,1533.6 2622.7,1539.5 2607.1,1544.7 2594,1549 2584.3,1552 2577.3,1553.9 2571.8,1555.3 2566.4,1556.5 2560,1558 2552.5,1559.9 2544.6,1562 2536.6,1564 2528.6,1565.9 2521,1567.5 2513.6,1568.8 2506.1,1570 2498.9,1570.9 2492.2,1571.6 2486,1572 2480.6,1572.1 2475.9,1571.9 2471.6,1571.5 2467.4,1570.8 2463,1570 2459.5,1569.3 2457.2,1568.7 2454.2,1567.7 2449.1,1566 2440,1563 2426.2,1558.6 2408.9,1553 2389.2,1546.6 2368.2,1539.8 2347,1533 2325.3,1526 2302.3,1518.6 2278.5,1510.9 2254.6,1503.3 2231,1495.7 2207.8,1488.4 2184.6,1481.2 2161.3,1473.9 2138.1,1466.5 2115,1458.7 2091.4,1450.2 2067.2,1441.1 2043.4,1432 2020.7,1423.4 2000,1416 1987.8,1412.3 1983.7,1411.9 1977.7,1410.9 1959.8,1405.6 1920,1392 1847.5,1366.1 1749,1330.5 1640.6,1291.3 1538.9,1254.4 1460,1226 1411,1208.7 1381.1,1198.4 1359.7,1191.2 1336.2,1183 1300,1170 1245.8,1150 1180.7,1125.5 1112.6,1099.9 1049.7,1076.4 1000,1058 965,1045.5 939.3,1036.8 920.7,1030.8 907,1026.5 896,1023 879.1,1015.2 855.3,1004.2 827.6,991.4 798.8,978.4 772,966.5 747.2,956 722.4,945.8 697.6,935.8 672.8,925.8 648,915.5 622.6,904.8 596.5,893.8 570.7,882.7 546.2,872 524,862 503.9,852.4 485.4,843 468.5,834.2 453.3,826.2 440,819.3 429.5,814.1 421.7,810.4 415.3,807.3 408.5,804.1 400,800 389.6,795 378.4,789.6 366.5,783.8 354,777.5 341,770.8 327.3,763.4 312.9,755.5 298,747.2 283.1,738.6 268.3,730 253.7,721.4 239.2,712.7 224.6,703.8 210.1,694.6 195.5,685 180.7,674.6 165.8,663.5 150.9,652.2 136.5,641.2 122.8,631 109.1,621.2 95.1,611.3 82,602.2 70.9,594.5 63,589" fill="#9c2c12" /><polygon points="62.5,589 104.8,525.8 119.4,524.5 124.7,521.9 165.7,483.5 241,471.6 264.9,466.3 267.5,454.4 332,447 338.6,446.3 346.4,445.2 357.6,444 374.1,442.8 398,442 434,441.5 480.8,441.1 531.2,440.8 578,440.8 614,441 636.9,441.4 651.5,442.1 661.2,443 669.6,444 680,445 691.4,445.9 701.6,446.8 712,447.9 724.3,449.2 740,451 760.8,453.5 785.6,456.5 812,459.7 837.6,463 860,466 877.9,468.5 893,470.8 907,473 922.1,475.5 940,478.5 961.8,482.1 986.1,486.1 1011.5,490.4 1036.6,494.7 1060,499 1081.3,503.1 1101.4,507.3 1121,511.4 1140.3,515.7 1160,520 1180.3,524.5 1201,529.2 1221.4,533.9 1241.3,538.6 1260,543 1277.6,547.3 1294.4,551.5 1310.4,555.5 1325.6,559.4 1340,563 1353,566.2 1364.5,569 1375.5,571.7 1387,574.6 1400,578 1415,581.9 1431.5,586.2 1448.5,590.7 1465,595.4 1480,600 1492.3,604.4 1502.6,608.7 1512.6,613.2 1524.5,618.2 1540,624 1560.8,631 1585.6,639.1 1612,647.6 1637.6,655.8 1660,663 1677.9,668.8 1693,673.7 1707,678.2 1722.1,683.1 1740,689 1762.4,696.4 1788,704.9 1814.4,713.7 1839.2,722 1860,729 1873.6,733.4 1881.7,735.7 1888.9,737.9 1900.1,741.9 1920,749.6 1950.8,761.9 1989.2,777.4 2032.1,795 2076.1,813.3 2118,831 2157.8,848.1 2197.6,865.5 2237.4,883.2 2277.2,901.3 2317,920 2356.6,939.1 2396.2,958.7 2435.8,978.7 2475.4,999.5 2515,1021 2557,1044.5 2601.2,1069.9 2644.4,1095.5 2683.1,1119.4 2714,1140 2735.3,1156.9 2749.2,1171.3 2758.4,1183.6 2765.5,1194.4 2773,1204 2780.7,1211.6 2786.8,1216.9 2791.8,1221.2 2796.1,1225.8 2800,1232 2803.5,1240.4 2806.3,1250.2 2808.6,1260.4 2810.4,1270.3 2812,1279 2813.3,1286.1 2814.2,1292.1 2814.8,1297.8 2815.1,1303.8 2815,1311 2814.7,1319.4 2814.2,1328.5 2813.2,1338.2 2811.9,1348.4 2810,1359 2807.4,1370.2 2804,1382.1 2800.3,1394.4 2796.5,1406.5 2793,1418 2789.9,1429.4 2786.9,1441 2783.9,1452.1 2780.7,1462 2777,1470 2773.6,1475.2 2770.6,1478.1 2766.9,1480 2761.4,1482.2 2753,1486 2740.7,1491.9 2725.4,1499 2708.3,1506.6 2690.7,1514.1 2674,1521 2657.3,1527.4 2639.9,1533.6 2622.7,1539.5 2607.1,1544.7 2594,1549 2584.3,1552 2577.3,1553.9 2571.8,1555.3 2566.4,1556.5 2560,1558 2552.5,1559.9 2544.6,1562 2536.6,1564 2528.6,1565.9 2521,1567.5 2513.6,1568.8 2506.1,1570 2498.9,1570.9 2492.2,1571.6 2486,1572 2480.6,1572.1 2475.9,1571.9 2471.6,1571.5 2467.4,1570.8 2463,1570 2459.5,1569.3 2457.2,1568.7 2454.2,1567.7 2449.1,1566 2440,1563 2426.2,1558.6 2408.9,1553 2389.2,1546.6 2368.2,1539.8 2347,1533 2325.3,1526 2302.3,1518.6 2278.5,1510.9 2254.6,1503.3 2231,1495.7 2207.8,1488.4 2184.6,1481.2 2161.3,1473.9 2138.1,1466.5 2115,1458.7 2091.4,1450.2 2067.2,1441.1 2043.4,1432 2020.7,1423.4 2000,1416 1987.8,1412.3 1983.7,1411.9 1977.7,1410.9 1959.8,1405.6 1920,1392 1847.5,1366.1 1749,1330.5 1640.6,1291.3 1538.9,1254.4 1460,1226 1411,1208.7 1381.1,1198.4 1359.7,1191.2 1336.2,1183 1300,1170 1245.8,1150 1180.7,1125.5 1112.6,1099.9 1049.7,1076.4 1000,1058 965,1045.5 939.3,1036.8 920.7,1030.8 907,1026.5 896,1023 879.1,1015.2 855.3,1004.2 827.6,991.4 798.8,978.4 772,966.5 747.2,956 722.4,945.8 697.6,935.8 672.8,925.8 648,915.5 622.6,904.8 596.5,893.8 570.7,882.7 546.2,872 524,862 503.9,852.4 485.4,843 468.5,834.2 453.3,826.2 440,819.3 429.5,814.1 421.7,810.4 415.3,807.3 408.5,804.1 400,800 389.6,795 378.4,789.6 366.5,783.8 354,777.5 341,770.8 327.3,763.4 312.9,755.5 298,747.2 283.1,738.6 268.3,730 253.7,721.4 239.2,712.7 224.6,703.8 210.1,694.6 195.5,685 180.7,674.6 165.8,663.5 150.9,652.2 136.5,641.2 122.8,631 109.1,621.2 95.1,611.3 82,602.2 70.9,594.5 63,589" fill="url(#tailtone)" /><polygon points="122.4,630.9 133.6,635.4 133.6,638.6 122.4,631.1" fill="url(#g1)" /><polygon points="132.4,635.4 143.6,640 143.6,646 132.4,638.6" fill="url(#g2)" /><polygon points="142.4,640 153.6,643.7 153.6,653.4 142.4,646" fill="url(#g3)" /><polygon points="152.4,643.7 163.6,645.5 163.6,660.9 152.4,653.4" fill="url(#g4)" /><polygon points="162.4,645.5 173.6,647.3 173.6,668.3 162.4,660.9" fill="url(#g5)" /><polygon points="172.4,647.3 183.6,649.1 183.6,675.7 172.4,668.3" fill="url(#g6)" /><polygon points="182.4,649.1 193.6,650.8 193.6,683.1 182.4,675.7" fill="url(#g7)" /><polygon points="192.4,650.8 203.6,654.7 203.6,689.6 192.4,683.1" fill="url(#g8)" /><polygon points="202.4,654.7 213.6,659.5 213.6,695.8 202.4,689.6" fill="url(#g9)" /><polygon points="212.4,659.5 223.6,664.2 223.6,702 212.4,695.8" fill="url(#g10)" /><polygon points="222.4,664.2 233.6,669 233.6,708.2 222.4,702" fill="url(#g11)" /><polygon points="232.4,669 243.6,673.8 243.6,714.4 232.4,708.2" fill="url(#g12)" /><polygon points="242.4,673.8 253.6,678.6 253.6,720.5 242.4,714.4" fill="url(#g13)" /><polygon points="252.4,678.6 263.6,683.4 263.6,726.7 252.4,720.5" fill="url(#g14)" /><polygon points="262.4,683.4 273.6,687.9 273.6,732.6 262.4,726.7" fill="url(#g15)" /><polygon points="272.4,687.9 283.6,692 283.6,738.2 272.4,732.6" fill="url(#g16)" /><polygon points="282.4,692 293.6,696.1 293.6,743.9 282.4,738.2" fill="url(#g17)" /><polygon points="292.4,696.1 303.6,700.2 303.6,749.5 292.4,743.9" fill="url(#g18)" /><polygon points="302.4,700.2 313.6,704.3 313.6,755.1 302.4,749.5" fill="url(#g19)" /><polygon points="312.4,704.3 323.6,708.4 323.6,760.7 312.4,755.1" fill="url(#g20)" /><polygon points="322.4,708.4 333.6,712.5 333.6,766.3 322.4,760.7" fill="url(#g21)" /><polygon points="332.4,712.5 343.6,716.7 343.6,771.8 332.4,766.3" fill="url(#g22)" /><polygon points="342.4,716.7 353.6,721.1 353.6,776.7 342.4,771.8" fill="url(#g23)" /><polygon points="352.4,721.1 363.6,725.6 363.6,781.7 352.4,776.7" fill="url(#g24)" /><polygon points="362.4,725.6 373.6,730 373.6,786.6 362.4,781.7" fill="url(#g25)" /><polygon points="372.4,730 383.6,734.5 383.6,791.6 372.4,786.6" fill="url(#g26)" /><polygon points="382.4,734.5 393.6,738.9 393.6,796.5 382.4,791.6" fill="url(#g27)" /><polygon points="392.4,738.9 403.6,743.3 403.6,801.4 392.4,796.5" fill="url(#g28)" /><polygon points="402.4,743.3 413.6,747.6 413.6,806.3 402.4,801.4" fill="url(#g29)" /><polygon points="412.4,747.6 423.6,752 423.6,811.1 412.4,806.3" fill="url(#g30)" /><polygon points="422.4,752 433.6,756.3 433.6,815.9 422.4,811.1" fill="url(#g31)" /><polygon points="432.4,756.3 443.6,760.5 443.6,820.8 432.4,815.9" fill="url(#g32)" /><polygon points="442.4,760.5 453.6,764.5 453.6,825.9 442.4,820.8" fill="url(#g33)" /><polygon points="452.4,764.5 463.6,768.5 463.6,831 452.4,825.9" fill="url(#g34)" /><polygon points="462.4,768.5 473.6,772.4 473.6,836.1 462.4,831" fill="url(#g35)" /><polygon points="472.4,772.4 483.6,776.4 483.6,841.2 472.4,836.1" fill="url(#g36)" /><polygon points="482.4,776.4 493.6,780.4 493.6,846.2 482.4,841.2" fill="url(#g37)" /><polygon points="492.4,780.4 503.6,784.4 503.6,851.3 492.4,846.2" fill="url(#g38)" /><polygon points="502.4,784.4 513.6,788.4 513.6,856.4 502.4,851.3" fill="url(#g39)" /><polygon points="512.4,788.4 523.6,792.4 523.6,861.5 512.4,856.4" fill="url(#g40)" /><polygon points="522.4,792.4 533.6,795.7 533.6,865.9 522.4,861.5" fill="url(#g41)" /><polygon points="532.4,795.7 543.6,798.7 543.6,870.2 532.4,865.9" fill="url(#g42)" /><polygon points="542.4,798.7 553.6,801.6 553.6,874.5 542.4,870.2" fill="url(#g43)" /><polygon points="552.4,801.6 563.6,804.4 563.6,878.8 552.4,874.5" fill="url(#g44)" /><polygon points="562.4,804.4 573.6,807.2 573.6,883.1 562.4,878.8" fill="url(#g45)" /><polygon points="572.4,807.2 583.6,810 583.6,887.5 572.4,883.1" fill="url(#g46)" /><polygon points="582.4,810 593.6,812.8 593.6,891.8 582.4,887.5" fill="url(#g47)" /><polygon points="592.4,812.8 603.6,815.6 603.6,896.1 592.4,891.8" fill="url(#g48)" /><polygon points="602.4,815.6 613.6,818.4 613.6,900.4 602.4,896.1" fill="url(#g49)" /><polygon points="612.4,818.4 623.6,821.3 623.6,904.7 612.4,900.4" fill="url(#g50)" /><polygon points="622.4,821.3 633.6,824.1 633.6,909 622.4,904.7" fill="url(#g51)" /><polygon points="632.4,824.1 643.6,827.1 643.6,913.3 632.4,909" fill="url(#g52)" /><polygon points="642.4,827.1 653.6,830.4 653.6,917.6 642.4,913.3" fill="url(#g53)" /><polygon points="652.4,830.4 663.6,833.6 663.6,921.7 652.4,917.6" fill="url(#g54)" /><polygon points="662.4,833.6 673.6,836.8 673.6,925.8 662.4,921.7" fill="url(#g55)" /><polygon points="672.4,836.8 683.6,840 683.6,929.9 672.4,925.8" fill="url(#g56)" /><polygon points="682.4,840 693.6,843.2 693.6,934 682.4,929.9" fill="url(#g57)" /><polygon points="692.4,843.2 703.6,846.5 703.6,938.1 692.4,934" fill="url(#g58)" /><polygon points="702.4,846.5 713.6,849.7 713.6,942.2 702.4,938.1" fill="url(#g59)" /><polygon points="712.4,849.7 723.6,852.9 723.6,946.3 712.4,942.2" fill="url(#g60)" /><polygon points="722.4,852.9 733.6,856.1 733.6,950.5 722.4,946.3" fill="url(#g61)" /><polygon points="732.4,856.1 743.6,859.4 743.6,954.6 732.4,950.5" fill="url(#g62)" /><polygon points="742.4,859.4 753.6,863 753.6,958.7 742.4,954.6" fill="url(#g63)" /><polygon points="752.4,863 763.6,866.6 763.6,962.8 752.4,958.7" fill="url(#g64)" /><polygon points="762.4,866.6 773.6,870.3 773.6,967 762.4,962.8" fill="url(#g65)" /><polygon points="772.4,870.3 783.6,874.4 783.6,971.5 772.4,967" fill="url(#g66)" /><polygon points="782.4,874.4 793.6,878.4 793.6,976.1 782.4,971.5" fill="url(#g67)" /><polygon points="792.4,878.4 803.6,882.5 803.6,980.6 792.4,976.1" fill="url(#g68)" /><polygon points="802.4,882.5 813.6,886.5 813.6,985.2 802.4,980.6" fill="url(#g69)" /><polygon points="812.4,886.5 823.6,890.6 823.6,989.7 812.4,985.2" fill="url(#g70)" /><polygon points="822.4,890.6 833.6,894.6 833.6,994.3 822.4,989.7" fill="url(#g71)" /><polygon points="832.4,894.6 843.6,898.9 843.6,998.9 832.4,994.3" fill="url(#g72)" /><polygon points="842.4,898.9 853.6,903.4 853.6,1003.4 842.4,998.9" fill="url(#g73)" /><polygon points="852.4,903.4 863.6,908 863.6,1008 852.4,1003.4" fill="url(#g74)" /><polygon points="862.4,908 873.6,912.5 873.6,1012.5 862.4,1008" fill="url(#g75)" /><polygon points="872.4,912.5 883.6,917.1 883.6,1017.1 872.4,1012.5" fill="url(#g76)" /><polygon points="882.4,917.1 893.6,921.6 893.6,1021.6 882.4,1017.1" fill="url(#g77)" /><polygon points="892.4,921.6 903.6,925.4 903.6,1025.4 892.4,1021.6" fill="url(#g78)" /><polygon points="902.4,925.4 913.6,928.7 913.6,1028.7 902.4,1025.4" fill="url(#g79)" /><polygon points="912.4,928.7 923.6,932.1 923.6,1032.1 912.4,1028.7" fill="url(#g80)" /><polygon points="922.4,932.1 933.6,935.5 933.6,1035.5 922.4,1032.1" fill="url(#g81)" /><polygon points="932.4,935.5 943.6,938.8 943.6,1038.8 932.4,1035.5" fill="url(#g82)" /><polygon points="942.4,938.8 953.6,942.2 953.6,1042.2 942.4,1038.8" fill="url(#g83)" /><polygon points="952.4,942.2 963.6,945.5 963.6,1045.5 952.4,1042.2" fill="url(#g84)" /><polygon points="962.4,945.5 973.6,948.9 973.6,1048.9 962.4,1045.5" fill="url(#g85)" /><polygon points="972.4,948.9 983.6,952.3 983.6,1052.3 972.4,1048.9" fill="url(#g86)" /><polygon points="982.4,952.3 993.6,955.6 993.6,1055.6 982.4,1052.3" fill="url(#g87)" /><polygon points="992.4,955.6 1003.6,959.1 1003.6,1059.1 992.4,1055.6" fill="url(#g88)" /><polygon points="1002.4,959.1 1013.6,962.7 1013.6,1062.9 1002.4,1059.1" fill="url(#g89)" /><polygon points="1012.4,962.7 1023.6,966.3 1023.6,1066.6 1012.4,1062.9" fill="url(#g90)" /><polygon points="1022.4,966.3 1033.6,969.9 1033.6,1070.3 1022.4,1066.6" fill="url(#g91)" /><polygon points="1032.4,969.9 1043.6,973.5 1043.6,1074.1 1032.4,1070.3" fill="url(#g92)" /><polygon points="1042.4,973.5 1053.6,977.1 1053.6,1077.8 1042.4,1074.1" fill="url(#g93)" /><polygon points="1052.4,977.1 1063.6,980.7 1063.6,1081.5 1052.4,1077.8" fill="url(#g94)" /><polygon points="1062.4,980.7 1073.6,984.3 1073.6,1085.3 1062.4,1081.5" fill="url(#g95)" /><polygon points="1072.4,984.3 1083.6,987.9 1083.6,1089 1072.4,1085.3" fill="url(#g96)" /><polygon points="1082.4,987.9 1093.6,991.5 1093.6,1092.7 1082.4,1089" fill="url(#g97)" /><polygon points="1092.4,991.5 1103.6,995.1 1103.6,1096.5 1092.4,1092.7" fill="url(#g98)" /><polygon points="1102.4,995.1 1113.6,998.7 1113.6,1100.2 1102.4,1096.5" fill="url(#g99)" /><polygon points="1112.4,998.7 1123.6,1002.3 1123.6,1103.9 1112.4,1100.2" fill="url(#g100)" /><polygon points="1122.4,1002.3 1133.6,1005.9 1133.6,1107.7 1122.4,1103.9" fill="url(#g101)" /><polygon points="1132.4,1005.9 1143.6,1009.5 1143.6,1111.4 1132.4,1107.7" fill="url(#g102)" /><polygon points="1142.4,1009.5 1153.6,1013.1 1153.6,1115.1 1142.4,1111.4" fill="url(#g103)" /><polygon points="1152.4,1013.1 1163.6,1016.7 1163.6,1118.9 1152.4,1115.1" fill="url(#g104)" /><polygon points="1162.4,1016.7 1173.6,1020.3 1173.6,1122.6 1162.4,1118.9" fill="url(#g105)" /><polygon points="1172.4,1020.3 1183.6,1023.9 1183.6,1126.3 1172.4,1122.6" fill="url(#g106)" /><polygon points="1182.4,1023.9 1193.6,1027.5 1193.6,1130.1 1182.4,1126.3" fill="url(#g107)" /><polygon points="1192.4,1027.5 1203.6,1031.1 1203.6,1133.8 1192.4,1130.1" fill="url(#g108)" /><polygon points="1202.4,1031.1 1213.6,1034.7 1213.6,1137.5 1202.4,1133.8" fill="url(#g109)" /><polygon points="1212.4,1034.7 1223.6,1038.3 1223.6,1141.3 1212.4,1137.5" fill="url(#g110)" /><polygon points="1222.4,1038.3 1233.6,1041.9 1233.6,1145 1222.4,1141.3" fill="url(#g111)" /><polygon points="1232.4,1041.9 1243.6,1045.5 1243.6,1148.7 1232.4,1145" fill="url(#g112)" /><polygon points="1242.4,1045.5 1253.6,1049.1 1253.6,1152.5 1242.4,1148.7" fill="url(#g113)" /><polygon points="1252.4,1049.1 1263.6,1052.7 1263.6,1156.2 1252.4,1152.5" fill="url(#g114)" /><polygon points="1262.4,1052.7 1273.6,1056.3 1273.6,1159.9 1262.4,1156.2" fill="url(#g115)" /><polygon points="1272.4,1056.3 1283.6,1059.9 1283.6,1163.7 1272.4,1159.9" fill="url(#g116)" /><polygon points="1282.4,1059.9 1293.6,1063.5 1293.6,1167.4 1282.4,1163.7" fill="url(#g117)" /><polygon points="1292.4,1063.5 1303.6,1067.1 1303.6,1171 1292.4,1167.4" fill="url(#g118)" /><polygon points="1302.4,1067.1 1313.6,1070.6 1313.6,1174.5 1302.4,1171" fill="url(#g119)" /><polygon points="1312.4,1070.6 1323.6,1074.2 1323.6,1178 1312.4,1174.5" fill="url(#g120)" /><polygon points="1322.4,1074.2 1333.6,1077.8 1333.6,1181.5 1322.4,1178" fill="url(#g121)" /><polygon points="1332.4,1077.8 1343.6,1081.3 1343.6,1185 1332.4,1181.5" fill="url(#g122)" /><polygon points="1342.4,1081.3 1353.6,1084.9 1353.6,1188.5 1342.4,1185" fill="url(#g123)" /><polygon points="1352.4,1084.9 1363.6,1088.5 1363.6,1192 1352.4,1188.5" fill="url(#g124)" /><polygon points="1362.4,1088.5 1373.6,1092 1373.6,1195.5 1362.4,1192" fill="url(#g125)" /><polygon points="1372.4,1092 1383.6,1095.6 1383.6,1199 1372.4,1195.5" fill="url(#g126)" /><polygon points="1382.4,1095.6 1393.6,1099.2 1393.6,1202.5 1382.4,1199" fill="url(#g127)" /><polygon points="1392.4,1099.2 1403.6,1102.7 1403.6,1206 1392.4,1202.5" fill="url(#g128)" /><polygon points="1402.4,1102.7 1413.6,1106.3 1413.6,1209.5 1402.4,1206" fill="url(#g129)" /><polygon points="1412.4,1106.3 1423.6,1109.9 1423.6,1213 1412.4,1209.5" fill="url(#g130)" /><polygon points="1422.4,1109.9 1433.6,1113.4 1433.6,1216.5 1422.4,1213" fill="url(#g131)" /><polygon points="1432.4,1113.4 1443.6,1117 1443.6,1220 1432.4,1216.5" fill="url(#g132)" /><polygon points="1442.4,1117 1453.6,1120.6 1453.6,1223.5 1442.4,1220" fill="url(#g133)" /><polygon points="1452.4,1120.6 1463.6,1124.2 1463.6,1227.1 1452.4,1223.5" fill="url(#g134)" /><polygon points="1462.4,1124.2 1473.6,1127.8 1473.6,1230.7 1462.4,1227.1" fill="url(#g135)" /><polygon points="1472.4,1127.8 1483.6,1131.5 1483.6,1234.3 1472.4,1230.7" fill="url(#g136)" /><polygon points="1482.4,1131.5 1493.6,1135.2 1493.6,1237.9 1482.4,1234.3" fill="url(#g137)" /><polygon points="1492.4,1135.2 1503.6,1138.9 1503.6,1241.5 1492.4,1237.9" fill="url(#g138)" /><polygon points="1502.4,1138.9 1513.6,1142.5 1513.6,1245.1 1502.4,1241.5" fill="url(#g139)" /><polygon points="1512.4,1142.5 1523.6,1146.2 1523.6,1248.7 1512.4,1245.1" fill="url(#g140)" /><polygon points="1522.4,1146.2 1533.6,1149.9 1533.6,1252.3 1522.4,1248.7" fill="url(#g141)" /><polygon points="1532.4,1149.9 1543.6,1153.6 1543.6,1256 1532.4,1252.3" fill="url(#g142)" /><polygon points="1542.4,1153.6 1553.6,1157.2 1553.6,1259.6 1542.4,1256" fill="url(#g143)" /><polygon points="1552.4,1157.2 1563.6,1160.9 1563.6,1263.2 1552.4,1259.6" fill="url(#g144)" /><polygon points="1562.4,1160.9 1573.6,1164.6 1573.6,1266.8 1562.4,1263.2" fill="url(#g145)" /><polygon points="1572.4,1164.6 1583.6,1168.3 1583.6,1270.4 1572.4,1266.8" fill="url(#g146)" /><polygon points="1582.4,1168.3 1593.6,1171.9 1593.6,1274 1582.4,1270.4" fill="url(#g147)" /><polygon points="1592.4,1171.9 1603.6,1175.6 1603.6,1277.6 1592.4,1274" fill="url(#g148)" /><polygon points="1602.4,1175.6 1613.6,1179.3 1613.6,1281.2 1602.4,1277.6" fill="url(#g149)" /><polygon points="1612.4,1179.3 1623.6,1183 1623.6,1284.8 1612.4,1281.2" fill="url(#g150)" /><polygon points="1622.4,1183 1633.6,1186.7 1633.6,1288.4 1622.4,1284.8" fill="url(#g151)" /><polygon points="1632.4,1186.7 1643.6,1190.3 1643.6,1292 1632.4,1288.4" fill="url(#g152)" /><polygon points="1642.4,1190.3 1653.6,1194 1653.6,1295.6 1642.4,1292" fill="url(#g153)" /><polygon points="1652.4,1194 1663.6,1197.7 1663.6,1299.3 1652.4,1295.6" fill="url(#g154)" /><polygon points="1662.4,1197.7 1673.6,1201.4 1673.6,1302.9 1662.4,1299.3" fill="url(#g155)" /><polygon points="1672.4,1201.4 1683.6,1205 1683.6,1306.5 1672.4,1302.9" fill="url(#g156)" /><polygon points="1682.4,1205 1693.6,1208.7 1693.6,1310.1 1682.4,1306.5" fill="url(#g157)" /><polygon points="1692.4,1208.7 1703.6,1212.4 1703.6,1313.7 1692.4,1310.1" fill="url(#g158)" /><polygon points="1702.4,1212.4 1713.6,1216.1 1713.6,1317.3 1702.4,1313.7" fill="url(#g159)" /><polygon points="1712.4,1216.1 1723.6,1219.7 1723.6,1320.9 1712.4,1317.3" fill="url(#g160)" /><polygon points="1722.4,1219.7 1733.6,1223.4 1733.6,1324.5 1722.4,1320.9" fill="url(#g161)" /><polygon points="1732.4,1223.4 1743.6,1227.1 1743.6,1328.1 1732.4,1324.5" fill="url(#g162)" /><polygon points="1742.4,1227.1 1753.6,1230.8 1753.6,1331.7 1742.4,1328.1" fill="url(#g163)" /><polygon points="1752.4,1230.8 1763.6,1234.4 1763.6,1335.3 1752.4,1331.7" fill="url(#g164)" /><polygon points="1762.4,1234.4 1773.6,1238.1 1773.6,1339 1762.4,1335.3" fill="url(#g165)" /><polygon points="1772.4,1238.1 1783.6,1241.8 1783.6,1342.6 1772.4,1339" fill="url(#g166)" /><polygon points="1782.4,1241.8 1793.6,1245.5 1793.6,1346.2 1782.4,1342.6" fill="url(#g167)" /><polygon points="1792.4,1245.5 1803.6,1249.1 1803.6,1349.8 1792.4,1346.2" fill="url(#g168)" /><polygon points="1802.4,1249.1 1813.6,1252.8 1813.6,1353.4 1802.4,1349.8" fill="url(#g169)" /><polygon points="1812.4,1252.8 1823.6,1256.5 1823.6,1357 1812.4,1353.4" fill="url(#g170)" /><polygon points="1822.4,1256.5 1833.6,1260.2 1833.6,1360.6 1822.4,1357" fill="url(#g171)" /><polygon points="1832.4,1260.2 1843.6,1263.8 1843.6,1364.2 1832.4,1360.6" fill="url(#g172)" /><polygon points="1842.4,1263.8 1853.6,1267.5 1853.6,1367.8 1842.4,1364.2" fill="url(#g173)" /><polygon points="1852.4,1267.5 1863.6,1271.2 1863.6,1371.4 1852.4,1367.8" fill="url(#g174)" /><polygon points="1862.4,1271.2 1873.6,1274.9 1873.6,1375 1862.4,1371.4" fill="url(#g175)" /><polygon points="1872.4,1274.9 1883.6,1278.5 1883.6,1378.6 1872.4,1375" fill="url(#g176)" /><polygon points="1882.4,1278.5 1893.6,1282.2 1893.6,1382.3 1882.4,1378.6" fill="url(#g177)" /><polygon points="1892.4,1282.2 1903.6,1286.2 1903.6,1385.9 1892.4,1382.3" fill="url(#g178)" /><polygon points="1902.4,1286.2 1913.6,1290.8 1913.6,1389.5 1902.4,1385.9" fill="url(#g179)" /><polygon points="1912.4,1290.8 1923.6,1295.2 1923.6,1392.9 1912.4,1389.5" fill="url(#g180)" /><polygon points="1922.4,1295.2 1933.6,1299.2 1933.6,1395.9 1922.4,1392.9" fill="url(#g181)" /><polygon points="1932.4,1299.2 1943.6,1303.2 1943.6,1398.9 1932.4,1395.9" fill="url(#g182)" /><polygon points="1942.4,1303.2 1953.6,1307.2 1953.6,1401.9 1942.4,1398.9" fill="url(#g183)" /><polygon points="1952.4,1307.2 1963.6,1311.2 1963.6,1404.9 1952.4,1401.9" fill="url(#g184)" /><polygon points="1962.4,1311.2 1973.6,1315.2 1973.6,1407.9 1962.4,1404.9" fill="url(#g185)" /><polygon points="1972.4,1315.2 1983.6,1319.2 1983.6,1410.9 1972.4,1407.9" fill="url(#g186)" /><polygon points="1982.4,1319.2 1993.6,1323.2 1993.6,1413.9 1982.4,1410.9" fill="url(#g187)" /><polygon points="1992.4,1323.2 2003.6,1327.4 2003.6,1417.1 1992.4,1413.9" fill="url(#g188)" /><polygon points="2002.4,1327.4 2013.6,1332.1 2013.6,1420.8 2002.4,1417.1" fill="url(#g189)" /><polygon points="2012.4,1332.1 2023.6,1336.8 2023.6,1424.5 2012.4,1420.8" fill="url(#g190)" /><polygon points="2022.4,1336.8 2033.6,1341.6 2033.6,1428.3 2022.4,1424.5" fill="url(#g191)" /><polygon points="2032.4,1341.6 2043.6,1346.3 2043.6,1432 2032.4,1428.3" fill="url(#g192)" /><polygon points="2042.4,1346.3 2053.6,1351 2053.6,1435.7 2042.4,1432" fill="url(#g193)" /><polygon points="2052.4,1351 2063.6,1355.7 2063.6,1439.4 2052.4,1435.7" fill="url(#g194)" /><polygon points="2062.4,1355.7 2073.6,1360.4 2073.6,1443.1 2062.4,1439.4" fill="url(#g195)" /><polygon points="2072.4,1360.4 2083.6,1365.1 2083.6,1446.8 2072.4,1443.1" fill="url(#g196)" /><polygon points="2082.4,1365.1 2093.6,1369.8 2093.6,1450.5 2082.4,1446.8" fill="url(#g197)" /><polygon points="2092.4,1369.8 2103.6,1374.6 2103.6,1454.2 2092.4,1450.5" fill="url(#g198)" /><polygon points="2102.4,1374.6 2113.6,1379.6 2113.6,1458 2102.4,1454.2" fill="url(#g199)" /><polygon points="2112.4,1379.6 2123.6,1384.1 2123.6,1461.3 2112.4,1458" fill="url(#g200)" /><polygon points="2122.4,1384.1 2133.6,1388.6 2133.6,1464.4 2122.4,1461.3" fill="url(#g201)" /><polygon points="2132.4,1388.6 2143.6,1393 2143.6,1467.6 2132.4,1464.4" fill="url(#g202)" /><polygon points="2142.4,1393 2153.6,1397.4 2153.6,1470.8 2142.4,1467.6" fill="url(#g203)" /><polygon points="2152.4,1397.4 2163.6,1401.9 2163.6,1474 2152.4,1470.8" fill="url(#g204)" /><polygon points="2162.4,1401.9 2173.6,1406.3 2173.6,1477.2 2162.4,1474" fill="url(#g205)" /><polygon points="2172.4,1406.3 2183.6,1410.8 2183.6,1480.4 2172.4,1477.2" fill="url(#g206)" /><polygon points="2182.4,1410.8 2193.6,1415.2 2193.6,1483.6 2182.4,1480.4" fill="url(#g207)" /><polygon points="2192.4,1415.2 2203.6,1419.6 2203.6,1486.8 2192.4,1483.6" fill="url(#g208)" /><polygon points="2202.4,1419.6 2213.6,1424.1 2213.6,1490 2202.4,1486.8" fill="url(#g209)" /><polygon points="2212.4,1424.1 2223.6,1428.5 2223.6,1493.1 2212.4,1490" fill="url(#g210)" /><polygon points="2222.4,1428.5 2233.6,1433 2233.6,1496.3 2222.4,1493.1" fill="url(#g211)" /><polygon points="2232.4,1433 2243.6,1437.4 2243.6,1499.6 2232.4,1496.3" fill="url(#g212)" /><polygon points="2242.4,1437.4 2253.6,1441.9 2253.6,1502.8 2242.4,1499.6" fill="url(#g213)" /><polygon points="2252.4,1441.9 2263.6,1446.4 2263.6,1506 2252.4,1502.8" fill="url(#g214)" /><polygon points="2262.4,1446.4 2273.6,1450.8 2273.6,1509.2 2262.4,1506" fill="url(#g215)" /><polygon points="2272.4,1450.8 2283.6,1455.3 2283.6,1512.4 2272.4,1509.2" fill="url(#g216)" /><polygon points="2282.4,1455.3 2293.6,1459.8 2293.6,1515.6 2282.4,1512.4" fill="url(#g217)" /><polygon points="2292.4,1459.8 2303.6,1464.6 2303.6,1518.9 2292.4,1515.6" fill="url(#g218)" /><polygon points="2302.4,1464.6 2313.6,1470.3 2313.6,1522.1 2302.4,1518.9" fill="url(#g219)" /><polygon points="2312.4,1470.3 2323.6,1476 2323.6,1525.3 2312.4,1522.1" fill="url(#g220)" /><polygon points="2322.4,1476 2333.6,1481.7 2333.6,1528.5 2322.4,1525.3" fill="url(#g221)" /><polygon points="2332.4,1481.7 2343.6,1487.5 2343.6,1531.7 2332.4,1528.5" fill="url(#g222)" /><polygon points="2342.4,1487.5 2353.6,1493.2 2353.6,1534.9 2342.4,1531.7" fill="url(#g223)" /><polygon points="2352.4,1493.2 2363.6,1498.9 2363.6,1538.2 2352.4,1534.9" fill="url(#g224)" /><polygon points="2362.4,1498.9 2373.6,1504.6 2373.6,1541.4 2362.4,1538.2" fill="url(#g225)" /><polygon points="2372.4,1504.6 2383.6,1510.4 2383.6,1544.6 2372.4,1541.4" fill="url(#g226)" /><polygon points="2382.4,1510.4 2393.6,1516.1 2393.6,1547.8 2382.4,1544.6" fill="url(#g227)" /><polygon points="2392.4,1516.1 2403.6,1521.8 2403.6,1551.1 2392.4,1547.8" fill="url(#g228)" /><polygon points="2402.4,1521.8 2413.6,1527.5 2413.6,1554.3 2402.4,1551.1" fill="url(#g229)" /><polygon points="2412.4,1527.5 2423.6,1533.3 2423.6,1557.5 2412.4,1554.3" fill="url(#g230)" /><polygon points="2422.4,1533.3 2433.6,1539 2433.6,1560.7 2422.4,1557.5" fill="url(#g231)" /><polygon points="1400,660 1420.2,664 1420.2,676.3 1400,664" fill="url(#g232)" shape-rendering="crispEdges" /><polygon points="1420.2,664 1440.4,668.1 1440.4,688.6 1420.2,676.3" fill="url(#g233)" shape-rendering="crispEdges" /><polygon points="1440.4,668.1 1460.6,672.1 1460.6,701 1440.4,688.6" fill="url(#g234)" shape-rendering="crispEdges" /><polygon points="1460.6,672.1 1480.8,676.2 1480.8,713.3 1460.6,701" fill="url(#g235)" shape-rendering="crispEdges" /><polygon points="1480.8,676.2 1501,680.2 1501,725.3 1480.8,713.3" fill="url(#g236)" shape-rendering="crispEdges" /><polygon points="1501,680.2 1521.2,684.9 1521.2,731.6 1501,725.3" fill="url(#g237)" shape-rendering="crispEdges" /><polygon points="1521.2,684.9 1541.4,689.5 1541.4,737.9 1521.2,731.6" fill="url(#g238)" shape-rendering="crispEdges" /><polygon points="1541.4,689.5 1561.6,694.1 1561.6,744.2 1541.4,737.9" fill="url(#g239)" shape-rendering="crispEdges" /><polygon points="1561.6,694.1 1581.8,698.7 1581.8,750.6 1561.6,744.2" fill="url(#g240)" shape-rendering="crispEdges" /><polygon points="1581.8,698.7 1602,703.4 1602,756.9 1581.8,750.6" fill="url(#g241)" shape-rendering="crispEdges" /><polygon points="1602,703.4 1622.2,708 1622.2,763.2 1602,756.9" fill="url(#g242)" shape-rendering="crispEdges" /><polygon points="1622.2,708 1642.4,712.6 1642.4,769.5 1622.2,763.2" fill="url(#g243)" shape-rendering="crispEdges" /><polygon points="1642.4,712.6 1662.6,717.3 1662.6,775.8 1642.4,769.5" fill="url(#g244)" shape-rendering="crispEdges" /><polygon points="1662.6,717.3 1682.8,721.9 1682.8,782.1 1662.6,775.8" fill="url(#g245)" shape-rendering="crispEdges" /><polygon points="1682.8,721.9 1703,726.5 1703,788.4 1682.8,782.1" fill="url(#g246)" shape-rendering="crispEdges" /><polygon points="1703,726.5 1723.2,731.1 1723.2,794.8 1703,788.4" fill="url(#g247)" shape-rendering="crispEdges" /><polygon points="1723.2,731.1 1743.4,736.3 1743.4,800.8 1723.2,794.8" fill="url(#g248)" shape-rendering="crispEdges" /><polygon points="1743.4,736.3 1763.6,743.8 1763.6,805.5 1743.4,800.8" fill="url(#g249)" shape-rendering="crispEdges" /><polygon points="1763.6,743.8 1783.8,751.4 1783.8,810.2 1763.6,805.5" fill="url(#g250)" shape-rendering="crispEdges" /><polygon points="1783.8,751.4 1804,759 1804,814.9 1783.8,810.2" fill="url(#g251)" shape-rendering="crispEdges" /><polygon points="1804,759 1824.2,766.6 1824.2,819.6 1804,814.9" fill="url(#g252)" shape-rendering="crispEdges" /><polygon points="1824.2,766.6 1844.4,774.2 1844.4,824.4 1824.2,819.6" fill="url(#g253)" shape-rendering="crispEdges" /><polygon points="1844.4,774.2 1864.6,781.6 1864.6,829.6 1844.4,824.4" fill="url(#g254)" shape-rendering="crispEdges" /><polygon points="1864.6,781.6 1884.8,788.7 1884.8,836.4 1864.6,829.6" fill="url(#g255)" shape-rendering="crispEdges" /><polygon points="1884.8,788.7 1905,795.8 1905,843.3 1884.8,836.4" fill="url(#g256)" shape-rendering="crispEdges" /><polygon points="1905,795.8 1925.2,802.8 1925.2,850.2 1905,843.3" fill="url(#g257)" shape-rendering="crispEdges" /><polygon points="1925.2,802.8 1945.4,809.9 1945.4,857 1925.2,850.2" fill="url(#g258)" shape-rendering="crispEdges" /><polygon points="1945.4,809.9 1965.6,817.2 1965.6,864 1945.4,857" fill="url(#g259)" shape-rendering="crispEdges" /><polygon points="1965.6,817.2 1985.8,825.1 1985.8,871.2 1965.6,864" fill="url(#g260)" shape-rendering="crispEdges" /><polygon points="1985.8,825.1 2006,833.1 2006,878.4 1985.8,871.2" fill="url(#g261)" shape-rendering="crispEdges" /><polygon points="2006,833.1 2026.2,841 2026.2,885.6 2006,878.4" fill="url(#g262)" shape-rendering="crispEdges" /><polygon points="2026.2,841 2046.4,848.9 2046.4,892.9 2026.2,885.6" fill="url(#g263)" shape-rendering="crispEdges" /><polygon points="2046.4,848.9 2066.6,856.9 2066.6,900.1 2046.4,892.9" fill="url(#g264)" shape-rendering="crispEdges" /><polygon points="2066.6,856.9 2086.8,864.8 2086.8,907.3 2066.6,900.1" fill="url(#g265)" shape-rendering="crispEdges" /><polygon points="2086.8,864.8 2107,873.5 2107,914.2 2086.8,907.3" fill="url(#g266)" shape-rendering="crispEdges" /><polygon points="2107,873.5 2127.2,883.7 2127.2,920.6 2107,914.2" fill="url(#g267)" shape-rendering="crispEdges" /><polygon points="2127.2,883.7 2147.4,893.8 2147.4,927 2127.2,920.6" fill="url(#g268)" shape-rendering="crispEdges" /><polygon points="2147.4,893.8 2167.6,904 2167.6,933.3 2147.4,927" fill="url(#g269)" shape-rendering="crispEdges" /><polygon points="2167.6,904 2187.8,914.1 2187.8,939.7 2167.6,933.3" fill="url(#g270)" shape-rendering="crispEdges" /><polygon points="2187.8,914.1 2208,924.3 2208,946.1 2187.8,939.7" fill="url(#g271)" shape-rendering="crispEdges" /><polygon points="2208,924.3 2228.2,934.4 2228.2,952.5 2208,946.1" fill="url(#g272)" shape-rendering="crispEdges" /><polygon points="2228.2,934.4 2248.4,944.6 2248.4,958.9 2228.2,952.5" fill="url(#g273)" shape-rendering="crispEdges" /><polygon points="2248.4,944.6 2268.6,954.7 2268.6,965.2 2248.4,958.9" fill="url(#g274)" shape-rendering="crispEdges" /><polygon points="2268.6,954.7 2288.8,964.9 2288.8,971.6 2268.6,965.2" fill="url(#g275)" shape-rendering="crispEdges" /><polygon points="2288.8,964.9 2309,975 2309,978 2288.8,971.6" fill="url(#g276)" shape-rendering="crispEdges" /><polygon points="788,562 802.1,563.7 802.1,569.4 788,566" fill="url(#g277)" shape-rendering="crispEdges" /><polygon points="802.1,563.7 816.2,565.3 816.2,572.9 802.1,569.4" fill="url(#g278)" shape-rendering="crispEdges" /><polygon points="816.2,565.3 830.3,567 830.3,576.3 816.2,572.9" fill="url(#g279)" shape-rendering="crispEdges" /><polygon points="830.3,567 844.4,568.7 844.4,579.7 830.3,576.3" fill="url(#g280)" shape-rendering="crispEdges" /><polygon points="844.4,568.7 858.5,570.3 858.5,583.2 844.4,579.7" fill="url(#g281)" shape-rendering="crispEdges" /><polygon points="858.5,570.3 872.6,572 872.6,586.6 858.5,583.2" fill="url(#g282)" shape-rendering="crispEdges" /><polygon points="872.6,572 886.7,573.7 886.7,590 872.6,586.6" fill="url(#g283)" shape-rendering="crispEdges" /><polygon points="886.7,573.7 900.7,575.4 900.7,593.4 886.7,590" fill="url(#g284)" shape-rendering="crispEdges" /><polygon points="900.7,575.4 914.8,577 914.8,596.9 900.7,593.4" fill="url(#g285)" shape-rendering="crispEdges" /><polygon points="914.8,577 928.9,578.7 928.9,600.3 914.8,596.9" fill="url(#g286)" shape-rendering="crispEdges" /><polygon points="928.9,578.7 943,580.3 943,603.3 928.9,600.3" fill="url(#g287)" shape-rendering="crispEdges" /><polygon points="943,580.3 957.1,581.4 957.1,604.6 943,603.3" fill="url(#g288)" shape-rendering="crispEdges" /><polygon points="957.1,581.4 971.2,582.6 971.2,605.9 957.1,604.6" fill="url(#g289)" shape-rendering="crispEdges" /><polygon points="971.2,582.6 985.3,583.8 985.3,607.2 971.2,605.9" fill="url(#g290)" shape-rendering="crispEdges" /><polygon points="985.3,583.8 999.4,585 999.4,608.4 985.3,607.2" fill="url(#g291)" shape-rendering="crispEdges" /><polygon points="999.4,585 1013.5,586.1 1013.5,609.7 999.4,608.4" fill="url(#g292)" shape-rendering="crispEdges" /><polygon points="1013.5,586.1 1027.6,587.3 1027.6,611 1013.5,609.7" fill="url(#g293)" shape-rendering="crispEdges" /><polygon points="1027.6,587.3 1041.7,588.5 1041.7,612.3 1027.6,611" fill="url(#g294)" shape-rendering="crispEdges" /><polygon points="1041.7,588.5 1055.8,589.6 1055.8,613.6 1041.7,612.3" fill="url(#g295)" shape-rendering="crispEdges" /><polygon points="1055.8,589.6 1069.9,591.2 1069.9,616.6 1055.8,613.6" fill="url(#g296)" shape-rendering="crispEdges" /><polygon points="1069.9,591.2 1084,592.9 1084,620.2 1069.9,616.6" fill="url(#g297)" shape-rendering="crispEdges" /><polygon points="1084,592.9 1098.1,594.6 1098.1,623.9 1084,620.2" fill="url(#g298)" shape-rendering="crispEdges" /><polygon points="1098.1,594.6 1112.1,596.3 1112.1,627.6 1098.1,623.9" fill="url(#g299)" shape-rendering="crispEdges" /><polygon points="1112.1,596.3 1126.2,597.9 1126.2,631.2 1112.1,627.6" fill="url(#g300)" shape-rendering="crispEdges" /><polygon points="1126.2,597.9 1140.3,599.6 1140.3,634.9 1126.2,631.2" fill="url(#g301)" shape-rendering="crispEdges" /><polygon points="1140.3,599.6 1154.4,601.3 1154.4,638.6 1140.3,634.9" fill="url(#g302)" shape-rendering="crispEdges" /><polygon points="1154.4,601.3 1168.5,603.5 1168.5,642.4 1154.4,638.6" fill="url(#g303)" shape-rendering="crispEdges" /><polygon points="1168.5,603.5 1182.6,606.1 1182.6,646.3 1168.5,642.4" fill="url(#g304)" shape-rendering="crispEdges" /><polygon points="1182.6,606.1 1196.7,608.6 1196.7,650.3 1182.6,646.3" fill="url(#g305)" shape-rendering="crispEdges" /><polygon points="1196.7,608.6 1210.8,611.1 1210.8,654.2 1196.7,650.3" fill="url(#g306)" shape-rendering="crispEdges" /><polygon points="1210.8,611.1 1224.9,613.7 1224.9,658.2 1210.8,654.2" fill="url(#g307)" shape-rendering="crispEdges" /><polygon points="1224.9,613.7 1239,616.2 1239,662.1 1224.9,658.2" fill="url(#g308)" shape-rendering="crispEdges" /><polygon points="1239,616.2 1253.1,618.8 1253.1,666.1 1239,662.1" fill="url(#g309)" shape-rendering="crispEdges" /><polygon points="1253.1,618.8 1267.2,622.2 1267.2,670.9 1253.1,666.1" fill="url(#g310)" shape-rendering="crispEdges" /><polygon points="1267.2,622.2 1281.3,626.6 1281.3,676.5 1267.2,670.9" fill="url(#g311)" shape-rendering="crispEdges" /><polygon points="1281.3,626.6 1295.4,631.1 1295.4,682.1 1281.3,676.5" fill="url(#g312)" shape-rendering="crispEdges" /><polygon points="1295.4,631.1 1309.5,635.5 1309.5,687.8 1295.4,682.1" fill="url(#g313)" shape-rendering="crispEdges" /><polygon points="1309.5,635.5 1323.5,639.9 1323.5,693.4 1309.5,687.8" fill="url(#g314)" shape-rendering="crispEdges" /><polygon points="1323.5,639.9 1337.6,644.3 1337.6,699.1 1323.5,693.4" fill="url(#g315)" shape-rendering="crispEdges" /><polygon points="1337.6,644.3 1351.7,647.8 1351.7,702.1 1337.6,699.1" fill="url(#g316)" shape-rendering="crispEdges" /><polygon points="1351.7,647.8 1365.8,651.1 1365.8,704.6 1351.7,702.1" fill="url(#g317)" shape-rendering="crispEdges" /><polygon points="1365.8,651.1 1379.9,654.4 1379.9,707.1 1365.8,704.6" fill="url(#g318)" shape-rendering="crispEdges" /><polygon points="1379.9,654.4 1394,657.7 1394,709.6 1379.9,707.1" fill="url(#g319)" shape-rendering="crispEdges" /><polygon points="1394,657.7 1408.1,661.1 1408.1,712.2 1394,709.6" fill="url(#g320)" shape-rendering="crispEdges" /><polygon points="1408.1,661.1 1422.2,664.4 1422.2,714.7 1408.1,712.2" fill="url(#g321)" shape-rendering="crispEdges" /><polygon points="1422.2,664.4 1436.3,667.7 1436.3,717.2 1422.2,714.7" fill="url(#g322)" shape-rendering="crispEdges" /><polygon points="1436.3,667.7 1450.4,671 1450.4,719.7 1436.3,717.2" fill="url(#g323)" shape-rendering="crispEdges" /><polygon points="1450.4,671 1464.5,674.3 1464.5,722.2 1450.4,719.7" fill="url(#g324)" shape-rendering="crispEdges" /><polygon points="1464.5,674.3 1478.6,677.7 1478.6,724.7 1464.5,722.2" fill="url(#g325)" shape-rendering="crispEdges" /><polygon points="1478.6,677.7 1492.7,679.7 1492.7,729.2 1478.6,724.7" fill="url(#g326)" shape-rendering="crispEdges" /><polygon points="1492.7,679.7 1506.8,681.6 1506.8,733.9 1492.7,729.2" fill="url(#g327)" shape-rendering="crispEdges" /><polygon points="1506.8,681.6 1520.9,683.4 1520.9,738.6 1506.8,733.9" fill="url(#g328)" shape-rendering="crispEdges" /><polygon points="1520.9,683.4 1534.9,685.3 1534.9,743.3 1520.9,738.6" fill="url(#g329)" shape-rendering="crispEdges" /><polygon points="1534.9,685.3 1549,687.9 1549,746.4 1534.9,743.3" fill="url(#g330)" shape-rendering="crispEdges" /><polygon points="1549,687.9 1563.1,690.8 1563.1,748.7 1549,746.4" fill="url(#g331)" shape-rendering="crispEdges" /><polygon points="1563.1,690.8 1577.2,693.8 1577.2,750.9 1563.1,748.7" fill="url(#g332)" shape-rendering="crispEdges" /><polygon points="1577.2,693.8 1591.3,696.7 1591.3,753.1 1577.2,750.9" fill="url(#g333)" shape-rendering="crispEdges" /><polygon points="1591.3,696.7 1605.4,699.6 1605.4,755.4 1591.3,753.1" fill="url(#g334)" shape-rendering="crispEdges" /><polygon points="1605.4,699.6 1619.5,702.6 1619.5,757.6 1605.4,755.4" fill="url(#g335)" shape-rendering="crispEdges" /><polygon points="1619.5,702.6 1633.6,705.5 1633.6,759.8 1619.5,757.6" fill="url(#g336)" shape-rendering="crispEdges" /><polygon points="1633.6,705.5 1647.7,708.4 1647.7,762.1 1633.6,759.8" fill="url(#g337)" shape-rendering="crispEdges" /><polygon points="1647.7,708.4 1661.8,711.4 1661.8,764.1 1647.7,762.1" fill="url(#g338)" shape-rendering="crispEdges" /><polygon points="1661.8,711.4 1675.9,714.6 1675.9,764.8 1661.8,764.1" fill="url(#g339)" shape-rendering="crispEdges" /><polygon points="1675.9,714.6 1690,717.7 1690,765.5 1675.9,764.8" fill="url(#g340)" shape-rendering="crispEdges" /><polygon points="1690,717.7 1704.1,720.9 1704.1,766.2 1690,765.5" fill="url(#g341)" shape-rendering="crispEdges" /><polygon points="1704.1,720.9 1718.2,724.1 1718.2,766.9 1704.1,766.2" fill="url(#g342)" shape-rendering="crispEdges" /><polygon points="1718.2,724.1 1732.3,727.3 1732.3,767.6 1718.2,766.9" fill="url(#g343)" shape-rendering="crispEdges" /><polygon points="1732.3,727.3 1746.3,729.7 1746.3,768 1732.3,767.6" fill="url(#g344)" shape-rendering="crispEdges" /><polygon points="1746.3,729.7 1760.4,731.3 1760.4,768 1746.3,768" fill="url(#g345)" shape-rendering="crispEdges" /><polygon points="1760.4,731.3 1774.5,732.8 1774.5,768 1760.4,768" fill="url(#g346)" shape-rendering="crispEdges" /><polygon points="1774.5,732.8 1788.6,734.4 1788.6,768 1774.5,768" fill="url(#g347)" shape-rendering="crispEdges" /><polygon points="1788.6,734.4 1802.7,736 1802.7,767.4 1788.6,768" fill="url(#g348)" shape-rendering="crispEdges" /><polygon points="1802.7,736 1816.8,741.9 1816.8,764.3 1802.7,767.4" fill="url(#g349)" shape-rendering="crispEdges" /><polygon points="1816.8,741.9 1830.9,748 1830.9,761.1 1816.8,764.3" fill="url(#g350)" shape-rendering="crispEdges" /><polygon points="1830.9,748 1845,754 1845,758 1830.9,761.1" fill="url(#g351)" shape-rendering="crispEdges" /><polygon points="267.5,456 332,449 398,444 614,443 680,447 740,453 860,468 940,481 1060,502 1160,523 1260,546 1340,566 1400,581 1480,603 1540,627 1660,666 1740,692 1803,736 1803,736 1740,729 1660,711 1540,686 1480,678 1340,645 1260,620 1160,602 1060,590 940,580 788,562 640,530 540,508 520,500 464.6,489.5 398,475 332,463 266,455" fill="#8a9a20" /><polygon points="699.4,461 714.7,462.4 714.7,450.4 699.4,449" fill="url(#g352)" /><polygon points="713.5,462.4 728.9,463.8 728.9,451.8 713.5,450.4" fill="url(#g353)" /><polygon points="727.7,463.8 743,465.3 743,453.3 727.7,451.8" fill="url(#g354)" /><polygon points="741.8,465.3 757.2,467.1 757.2,455.1 741.8,453.3" fill="url(#g355)" /><polygon points="756,467.1 771.3,468.8 771.3,456.8 756,455.1" fill="url(#g356)" /><polygon points="770.1,468.8 785.5,470.6 785.5,458.6 770.1,456.8" fill="url(#g357)" /><polygon points="784.3,470.6 799.6,472.4 799.6,460.4 784.3,458.6" fill="url(#g358)" /><polygon points="798.4,472.4 813.8,474.1 813.8,462.1 798.4,460.4" fill="url(#g359)" /><polygon points="812.6,474.1 827.9,475.9 827.9,463.9 812.6,462.1" fill="url(#g360)" /><polygon points="826.7,475.9 842.1,477.7 842.1,465.7 826.7,463.9" fill="url(#g361)" /><polygon points="840.9,477.7 856.2,479.5 856.2,467.5 840.9,465.7" fill="url(#g362)" /><polygon points="855,479.5 870.4,482.7 870.4,469.5 855,467.5" fill="url(#g363)" /><polygon points="869.2,482.7 884.5,486.7 884.5,471.7 869.2,469.5" fill="url(#g364)" /><polygon points="883.3,486.7 898.6,490.7 898.6,473.9 883.3,471.7" fill="url(#g365)" /><polygon points="897.4,490.7 912.8,494.7 912.8,476.2 897.4,473.9" fill="url(#g366)" /><polygon points="911.6,494.7 926.9,498.7 926.9,478.4 911.6,476.2" fill="url(#g367)" /><polygon points="925.7,498.7 941.1,502.6 941.1,480.6 925.7,478.4" fill="url(#g368)" /><polygon points="939.9,502.6 955.2,505 955.2,483 939.9,480.6" fill="url(#g369)" /><polygon points="954,505 969.4,507.4 969.4,485.4 954,483" fill="url(#g370)" /><polygon points="968.2,507.4 983.5,509.8 983.5,487.8 968.2,485.4" fill="url(#g371)" /><polygon points="982.3,509.8 997.7,512.2 997.7,490.2 982.3,487.8" fill="url(#g372)" /><polygon points="996.5,512.2 1011.8,514.7 1011.8,492.7 996.5,490.2" fill="url(#g373)" /><polygon points="1010.6,514.7 1026,517.1 1026,495.1 1010.6,492.7" fill="url(#g374)" /><polygon points="1024.8,517.1 1040.1,519.5 1040.1,497.5 1024.8,495.1" fill="url(#g375)" /><polygon points="1038.9,519.5 1054.3,521.9 1054.3,499.9 1038.9,497.5" fill="url(#g376)" /><polygon points="1053.1,521.9 1068.4,524.6 1068.4,502.6 1053.1,499.9" fill="url(#g377)" /><polygon points="1067.2,524.6 1082.6,527.6 1082.6,505.6 1067.2,502.6" fill="url(#g378)" /><polygon points="1081.4,527.6 1096.7,530.6 1096.7,508.6 1081.4,505.6" fill="url(#g379)" /><polygon points="1095.5,530.6 1110.8,533.6 1110.8,511.6 1095.5,508.6" fill="url(#g380)" /><polygon points="1109.6,533.6 1125,536.5 1125,514.5 1109.6,511.6" fill="url(#g381)" /><polygon points="1123.8,536.5 1139.1,539.5 1139.1,517.5 1123.8,514.5" fill="url(#g382)" /><polygon points="1137.9,539.5 1153.3,542.5 1153.3,520.5 1137.9,517.5" fill="url(#g383)" /><polygon points="1152.1,542.5 1167.4,545.6 1167.4,523.6 1152.1,520.5" fill="url(#g384)" /><polygon points="1166.2,545.6 1181.6,548.8 1181.6,526.8 1166.2,523.6" fill="url(#g385)" /><polygon points="1180.4,548.8 1195.7,552.1 1195.7,530.1 1180.4,526.8" fill="url(#g386)" /><polygon points="1194.5,552.1 1209.9,555.3 1209.9,533.3 1194.5,530.1" fill="url(#g387)" /><polygon points="1208.7,555.3 1224,558.6 1224,536.6 1208.7,533.3" fill="url(#g388)" /><polygon points="1222.8,558.6 1238.2,561.8 1238.2,539.8 1222.8,536.6" fill="url(#g389)" /><polygon points="1237,561.8 1252.3,565.1 1252.3,543.1 1237,539.8" fill="url(#g390)" /><polygon points="1251.1,565.1 1266.5,568.5 1266.5,546.5 1251.1,543.1" fill="url(#g391)" /><polygon points="1265.3,568.5 1280.6,572 1280.6,550 1265.3,546.5" fill="url(#g392)" /><polygon points="1279.4,572 1294.7,575.5 1294.7,553.5 1279.4,550" fill="url(#g393)" /><polygon points="1293.5,575.5 1308.9,579.1 1308.9,557.1 1293.5,553.5" fill="url(#g394)" /><polygon points="1307.7,579.1 1323,582.6 1323,560.6 1307.7,557.1" fill="url(#g395)" /><polygon points="1321.8,582.6 1337.2,586.1 1337.2,564.1 1321.8,560.6" fill="url(#g396)" /><polygon points="1336,586.1 1351.3,589.7 1351.3,567.7 1336,564.1" fill="url(#g397)" /><polygon points="1350.1,589.7 1365.5,593.2 1365.5,571.2 1350.1,567.7" fill="url(#g398)" /><polygon points="1364.3,593.2 1379.6,596.8 1379.6,574.8 1364.3,571.2" fill="url(#g399)" /><polygon points="1378.4,596.8 1393.8,600.3 1393.8,578.3 1378.4,574.8" fill="url(#g400)" /><polygon points="1392.6,600.3 1407.9,604 1407.9,582 1392.6,578.3" fill="url(#g401)" /><polygon points="1406.7,604 1422.1,607.9 1422.1,585.9 1406.7,582" fill="url(#g402)" /><polygon points="1420.9,607.9 1436.2,611.8 1436.2,589.8 1420.9,585.9" fill="url(#g403)" /><polygon points="1435,611.8 1450.4,615.7 1450.4,593.7 1435,589.8" fill="url(#g404)" /><polygon points="1449.2,615.7 1464.5,619.6 1464.5,597.6 1449.2,593.7" fill="url(#g405)" /><polygon points="1463.3,619.6 1478.6,623.5 1478.6,601.5 1463.3,597.6" fill="url(#g406)" /><polygon points="1477.4,623.5 1492.8,628.9 1492.8,606.9 1477.4,601.5" fill="url(#g407)" /><polygon points="1491.6,628.9 1506.9,634.5 1506.9,612.5 1491.6,606.9" fill="url(#g408)" /><polygon points="1505.7,634.5 1521.1,640.2 1521.1,618.2 1505.7,612.5" fill="url(#g409)" /><polygon points="1519.9,640.2 1535.2,645.9 1535.2,623.9 1519.9,618.2" fill="url(#g410)" /><polygon points="1534,645.9 1549.4,650.9 1549.4,628.9 1534,623.9" fill="url(#g411)" /><polygon points="1548.2,650.9 1563.5,655.5 1563.5,633.5 1548.2,628.9" fill="url(#g412)" /><polygon points="1562.3,655.5 1577.7,660 1577.7,638 1562.3,633.5" fill="url(#g413)" /><polygon points="1576.5,660 1591.8,664.6 1591.8,642.6 1576.5,638" fill="url(#g414)" /><polygon points="1590.6,664.6 1606,669.2 1606,647.2 1590.6,642.6" fill="url(#g415)" /><polygon points="1604.8,669.2 1620.1,673.8 1620.1,651.8 1604.8,647.2" fill="url(#g416)" /><polygon points="1618.9,673.8 1634.3,678.4 1634.3,656.4 1618.9,651.8" fill="url(#g417)" /><polygon points="1633.1,678.4 1648.4,683 1648.4,661 1633.1,656.4" fill="url(#g418)" /><polygon points="1647.2,683 1662.6,687.3 1662.6,665.6 1647.2,661" fill="url(#g419)" /><polygon points="1661.4,687.3 1676.7,689.8 1676.7,670.2 1661.4,665.6" fill="url(#g420)" /><polygon points="1675.5,689.8 1690.8,692.3 1690.8,674.8 1675.5,670.2" fill="url(#g421)" /><polygon points="1689.6,692.3 1705,694.8 1705,679.4 1689.6,674.8" fill="url(#g422)" /><polygon points="1703.8,694.8 1719.1,697.2 1719.1,684 1703.8,679.4" fill="url(#g423)" /><polygon points="1717.9,697.2 1733.3,699.7 1733.3,688.6 1717.9,684" fill="url(#g424)" /><polygon points="1732.1,699.7 1747.4,702.9 1747.4,693.3 1732.1,688.6" fill="url(#g425)" /><polygon points="1746.2,702.9 1761.6,706.9 1761.6,698 1746.2,693.3" fill="url(#g426)" /><polygon points="1760.4,706.9 1775.7,711 1775.7,702.7 1760.4,698" fill="url(#g427)" /><polygon points="1774.5,711 1789.9,715 1789.9,707.4 1774.5,702.7" fill="url(#g428)" /><polygon points="1788.7,715 1804,719 1804,712.1 1788.7,707.4" fill="url(#g429)" /><polygon points="1802.8,719 1818.2,723 1818.2,716.9 1802.8,712.1" fill="url(#g430)" /><polygon points="1817,723 1832.3,727 1832.3,721.6 1817,716.9" fill="url(#g431)" /><polygon points="1831.1,727 1846.5,731 1846.5,726.3 1831.1,721.6" fill="url(#g432)" /><polygon points="1845.3,731 1860.6,735 1860.6,731 1845.3,726.3" fill="url(#g433)" /><polygon points="398,441 614,440 680,444 740,450 860,465 940,477.5 1060,498 1160,519 1260,542 1340,562 1400,577 1480,599 1540,623 1660,662 1740,688 1860,728 1860,735 1740,695 1660,669 1540,630 1480,606 1400,584 1340,569 1260,549 1160,526 1060,505 940,484.5 860,469 740,454 680,448 614,444 398,445" fill="#9c2c12" /><polygon points="719,499 857,528 788,562" fill="url(#g434)" /><polygon points="433,443 540,446 660,446 740,462 860,470 940,500 1060,520 1160,554 1260,575 1329,590 1329,594 1260,586 1160,566 1060,540 940,517 860,503 740,490 700,488 660,470 540,455 433,446" fill="#a02e14" /><polyline points="433,447 540,456 660,471 700,489 740,491 860,504 940,518 1060,541 1160,567 1260,587 1329,595" fill="none" stroke="#1d5fae" stroke-width="2.5" stroke-linejoin="round" stroke-linecap="round" opacity="0.8"/><polygon points="425,443 520,447 600,452 600,458 520,459 444.7,450" fill="#a02e14" /><polygon points="124.7,522 165.7,484.5 241,472.6 265,467.3 266,467 332,489.5 398,506.7 464.6,525 520,541 540,551 585,566 664,594 664,594 585,582 520,571.5 332,546.4 200,528.5 121.3,524" fill="#8a9a20" /><polyline points="170,500 332,520 520,560" fill="none" stroke="#6e7a18" stroke-width="1.2" stroke-linejoin="round" stroke-linecap="round" opacity="0.5" stroke-dasharray="2 4"/><polygon points="63,589 104.8,525.8 121.3,524 131,535 405,594.5 611,652 374,654 370,655.9 282.8,640 71.8,597.6" fill="#8a9a20" /><polygon points="71.8,597.6 210,625.3 282.8,640 210,634 137.3,632.6 122.8,631 63,589" fill="#9c2c12" /><polygon points="118,628 210,625.3 282.8,640 282.8,643 137.3,634" fill="url(#g435)" /><polyline points="71.8,597.6 282.8,640 370,655.9 525,691.6" fill="none" stroke="#1d5fae" stroke-width="2.2" stroke-linejoin="round" stroke-linecap="round" opacity="0.8" stroke-dasharray="3 2"/><polygon points="1150,845 1170.3,855.2 1170.3,864.1 1150,848" fill="url(#g436)" shape-rendering="crispEdges" /><polygon points="1170.3,855.2 1190.7,865.3 1190.7,880.2 1170.3,864.1" fill="url(#g437)" shape-rendering="crispEdges" /><polygon points="1190.7,865.3 1211,875.5 1211,896.3 1190.7,880.2" fill="url(#g438)" shape-rendering="crispEdges" /><polygon points="1211,875.5 1231.4,885.7 1231.4,912.4 1211,896.3" fill="url(#g439)" shape-rendering="crispEdges" /><polygon points="1231.4,885.7 1251.7,895.9 1251.7,928.4 1231.4,912.4" fill="url(#g440)" shape-rendering="crispEdges" /><polygon points="1251.7,895.9 1272,906 1272,947.9 1251.7,928.4" fill="url(#g441)" shape-rendering="crispEdges" /><polygon points="1272,906 1292.4,916.2 1292.4,969.7 1272,947.9" fill="url(#g442)" shape-rendering="crispEdges" /><polygon points="1292.4,916.2 1312.7,926.4 1312.7,991.5 1292.4,969.7" fill="url(#g443)" shape-rendering="crispEdges" /><polygon points="1312.7,926.4 1333.1,936.4 1333.1,1010.8 1312.7,991.5" fill="url(#g444)" shape-rendering="crispEdges" /><polygon points="1333.1,936.4 1353.4,945.4 1353.4,1016.3 1333.1,1010.8" fill="url(#g445)" shape-rendering="crispEdges" /><polygon points="1353.4,945.4 1373.8,954.5 1373.8,1021.8 1353.4,1016.3" fill="url(#g446)" shape-rendering="crispEdges" /><polygon points="1373.8,954.5 1394.1,963.6 1394.1,1027.3 1373.8,1021.8" fill="url(#g447)" shape-rendering="crispEdges" /><polygon points="1394.1,963.6 1414.4,972.7 1414.4,1032.7 1394.1,1027.3" fill="url(#g448)" shape-rendering="crispEdges" /><polygon points="1414.4,972.7 1434.8,981.7 1434.8,1038.2 1414.4,1032.7" fill="url(#g449)" shape-rendering="crispEdges" /><polygon points="1434.8,981.7 1455.1,990.8 1455.1,1043.7 1434.8,1038.2" fill="url(#g450)" shape-rendering="crispEdges" /><polygon points="1455.1,990.8 1475.5,999.8 1475.5,1050.8 1455.1,1043.7" fill="url(#g451)" shape-rendering="crispEdges" /><polygon points="1475.5,999.8 1495.8,1008.7 1495.8,1058.4 1475.5,1050.8" fill="url(#g452)" shape-rendering="crispEdges" /><polygon points="1495.8,1008.7 1516.1,1017.6 1516.1,1066.1 1495.8,1058.4" fill="url(#g453)" shape-rendering="crispEdges" /><polygon points="1516.1,1017.6 1536.5,1026.5 1536.5,1073.7 1516.1,1066.1" fill="url(#g454)" shape-rendering="crispEdges" /><polygon points="1536.5,1026.5 1556.8,1034.7 1556.8,1081.3 1536.5,1073.7" fill="url(#g455)" shape-rendering="crispEdges" /><polygon points="1556.8,1034.7 1577.2,1042.9 1577.2,1088.9 1556.8,1081.3" fill="url(#g456)" shape-rendering="crispEdges" /><polygon points="1577.2,1042.9 1597.5,1051 1597.5,1096.6 1577.2,1088.9" fill="url(#g457)" shape-rendering="crispEdges" /><polygon points="1597.5,1051 1617.9,1059.1 1617.9,1104.2 1597.5,1096.6" fill="url(#g458)" shape-rendering="crispEdges" /><polygon points="1617.9,1059.1 1638.2,1067.3 1638.2,1111.8 1617.9,1104.2" fill="url(#g459)" shape-rendering="crispEdges" /><polygon points="1638.2,1067.3 1658.5,1075.4 1658.5,1119.5 1638.2,1111.8" fill="url(#g460)" shape-rendering="crispEdges" /><polygon points="1658.5,1075.4 1678.9,1084 1678.9,1127.1 1658.5,1119.5" fill="url(#g461)" shape-rendering="crispEdges" /><polygon points="1678.9,1084 1699.2,1092.7 1699.2,1134.7 1678.9,1127.1" fill="url(#g462)" shape-rendering="crispEdges" /><polygon points="1699.2,1092.7 1719.6,1101.3 1719.6,1142.3 1699.2,1134.7" fill="url(#g463)" shape-rendering="crispEdges" /><polygon points="1719.6,1101.3 1739.9,1110 1739.9,1150 1719.6,1142.3" fill="url(#g464)" shape-rendering="crispEdges" /><polygon points="1739.9,1110 1760.2,1118.4 1760.2,1156.7 1739.9,1150" fill="url(#g465)" shape-rendering="crispEdges" /><polygon points="1760.2,1118.4 1780.6,1126.9 1780.6,1163.5 1760.2,1156.7" fill="url(#g466)" shape-rendering="crispEdges" /><polygon points="1780.6,1126.9 1800.9,1135.4 1800.9,1170.3 1780.6,1163.5" fill="url(#g467)" shape-rendering="crispEdges" /><polygon points="1800.9,1135.4 1821.3,1143.9 1821.3,1177.1 1800.9,1170.3" fill="url(#g468)" shape-rendering="crispEdges" /><polygon points="1821.3,1143.9 1841.6,1152.3 1841.6,1183.9 1821.3,1177.1" fill="url(#g469)" shape-rendering="crispEdges" /><polygon points="1841.6,1152.3 1862,1160.7 1862,1190.3 1841.6,1183.9" fill="url(#g470)" shape-rendering="crispEdges" /><polygon points="1862,1160.7 1882.3,1168.1 1882.3,1193.2 1862,1190.3" fill="url(#g471)" shape-rendering="crispEdges" /><polygon points="1882.3,1168.1 1902.6,1175.5 1902.6,1196.2 1882.3,1193.2" fill="url(#g472)" shape-rendering="crispEdges" /><polygon points="1902.6,1175.5 1923,1182.9 1923,1199.1 1902.6,1196.2" fill="url(#g473)" shape-rendering="crispEdges" /><polygon points="1923,1182.9 1943.3,1190.2 1943.3,1202.1 1923,1199.1" fill="url(#g474)" shape-rendering="crispEdges" /><polygon points="1943.3,1190.2 1963.7,1197.6 1963.7,1205 1943.3,1202.1" fill="url(#g475)" shape-rendering="crispEdges" /><polygon points="1963.7,1197.6 1984,1205 1984,1208 1963.7,1205" fill="url(#g476)" shape-rendering="crispEdges" /><polygon points="600,653.1 610,661.8 610,649.5 600,646" fill="url(#g477)" shape-rendering="crispEdges" /><polygon points="610,661.8 620,670.6 620,653 610,649.5" fill="url(#g478)" shape-rendering="crispEdges" /><polygon points="620,670.6 630,679.3 630,656.5 620,653" fill="url(#g479)" shape-rendering="crispEdges" /><polygon points="630,679.3 640,688 640,660 630,656.5" fill="url(#g480)" shape-rendering="crispEdges" /><polygon points="640,688 650,694.7 650,662.5 640,660" fill="url(#g481)" shape-rendering="crispEdges" /><polygon points="650,694.7 660,701.3 660,665 650,662.5" fill="url(#g482)" shape-rendering="crispEdges" /><polygon points="660,701.3 670,708 670,667.5 660,665" fill="url(#g483)" shape-rendering="crispEdges" /><polygon points="670,708 680,714.7 680,670 670,667.5" fill="url(#g484)" shape-rendering="crispEdges" /><polygon points="680,714.7 690,721.3 690,672.5 680,670" fill="url(#g485)" shape-rendering="crispEdges" /><polygon points="690,721.3 700,728 700,675 690,672.5" fill="url(#g486)" shape-rendering="crispEdges" /><polygon points="700,728 710,732.5 710,679.3 700,675" fill="url(#g487)" shape-rendering="crispEdges" /><polygon points="710,732.5 720,737 720,683.7 710,679.3" fill="url(#g488)" shape-rendering="crispEdges" /><polygon points="720,737 730,741.6 730,688 720,683.7" fill="url(#g489)" shape-rendering="crispEdges" /><polygon points="730,741.6 740,746.2 740,692.4 730,688" fill="url(#g490)" shape-rendering="crispEdges" /><polygon points="740,746.2 750,751 750,696.7 740,692.4" fill="url(#g491)" shape-rendering="crispEdges" /><polygon points="750,751 760,755.8 760,701 750,696.7" fill="url(#g492)" shape-rendering="crispEdges" /><polygon points="760,755.8 770,760.7 770,704.8 760,701" fill="url(#g493)" shape-rendering="crispEdges" /><polygon points="770,760.7 780,765.5 780,708.6 770,704.8" fill="url(#g494)" shape-rendering="crispEdges" /><polygon points="780,765.5 790,770.3 790,712.4 780,708.6" fill="url(#g495)" shape-rendering="crispEdges" /><polygon points="790,770.3 800,775.2 800,716.2 790,712.4" fill="url(#g496)" shape-rendering="crispEdges" /><polygon points="800,775.2 810,780 810,720 800,716.2" fill="url(#g497)" shape-rendering="crispEdges" /><polygon points="810,780 820,783.7 820,723.5 810,720" fill="url(#g498)" shape-rendering="crispEdges" /><polygon points="820,783.7 830,787.4 830,727 820,723.5" fill="url(#g499)" shape-rendering="crispEdges" /><polygon points="830,787.4 840,791.2 840,730.5 830,727" fill="url(#g500)" shape-rendering="crispEdges" /><polygon points="840,791.2 850,794.9 850,734 840,730.5" fill="url(#g501)" shape-rendering="crispEdges" /><polygon points="850,794.9 860,798.4 860,736.6 850,734" fill="url(#g502)" shape-rendering="crispEdges" /><polygon points="860,798.4 870,801.8 870,738.9 860,736.6" fill="url(#g503)" shape-rendering="crispEdges" /><polygon points="870,801.8 880,805.2 880,741.2 870,738.9" fill="url(#g504)" shape-rendering="crispEdges" /><polygon points="880,805.2 890,808.6 890,743.4 880,741.2" fill="url(#g505)" shape-rendering="crispEdges" /><polygon points="890,808.6 900,812 900,745.7 890,743.4" fill="url(#g506)" shape-rendering="crispEdges" /><polygon points="900,812 910,815.4 910,748 900,745.7" fill="url(#g507)" shape-rendering="crispEdges" /><polygon points="910,815.4 920,818.8 920,750.3 910,748" fill="url(#g508)" shape-rendering="crispEdges" /><polygon points="920,818.8 930,822.2 930,752.5 920,750.3" fill="url(#g509)" shape-rendering="crispEdges" /><polygon points="930,822.2 940,825.6 940,755.7 930,752.5" fill="url(#g510)" shape-rendering="crispEdges" /><polygon points="940,825.6 950,829 950,759.1 940,755.7" fill="url(#g511)" shape-rendering="crispEdges" /><polygon points="950,829 960,832.7 960,762.5 950,759.1" fill="url(#g512)" shape-rendering="crispEdges" /><polygon points="960,832.7 970,838.2 970,765.9 960,762.5" fill="url(#g513)" shape-rendering="crispEdges" /><polygon points="970,838.2 980,843.7 980,769.3 970,765.9" fill="url(#g514)" shape-rendering="crispEdges" /><polygon points="980,843.7 990,849.1 990,772.7 980,769.3" fill="url(#g515)" shape-rendering="crispEdges" /><polygon points="990,849.1 1000,854.6 1000,776.1 990,772.7" fill="url(#g516)" shape-rendering="crispEdges" /><polygon points="1000,854.6 1010,860.1 1010,779.5 1000,776.1" fill="url(#g517)" shape-rendering="crispEdges" /><polygon points="1010,860.1 1020,865.6 1020,782.9 1010,779.5" fill="url(#g518)" shape-rendering="crispEdges" /><polygon points="1020,865.6 1030,871.1 1030,786.3 1020,782.9" fill="url(#g519)" shape-rendering="crispEdges" /><polygon points="1030,871.1 1040,876.5 1040,789.7 1030,786.3" fill="url(#g520)" shape-rendering="crispEdges" /><polygon points="1040,876.5 1050,882 1050,793 1040,789.7" fill="url(#g521)" shape-rendering="crispEdges" /><polygon points="1050,882 1060,887.5 1060,796.4 1050,793" fill="url(#g522)" shape-rendering="crispEdges" /><polygon points="1060,887.5 1070,893 1070,800.8 1060,796.4" fill="url(#g523)" shape-rendering="crispEdges" /><polygon points="1070,893 1080,898.6 1080,805.9 1070,800.8" fill="url(#g524)" shape-rendering="crispEdges" /><polygon points="1080,898.6 1090,904.2 1090,811.1 1080,805.9" fill="url(#g525)" shape-rendering="crispEdges" /><polygon points="1090,904.2 1100,909.8 1100,816.2 1090,811.1" fill="url(#g526)" shape-rendering="crispEdges" /><polygon points="1100,909.8 1110,915.4 1110,821.4 1100,816.2" fill="url(#g527)" shape-rendering="crispEdges" /><polygon points="1110,915.4 1120,921 1120,826.5 1110,821.4" fill="url(#g528)" shape-rendering="crispEdges" /><polygon points="1120,921 1130,926.6 1130,831.6 1120,826.5" fill="url(#g529)" shape-rendering="crispEdges" /><polygon points="1130,926.6 1140,932.2 1140,836.8 1130,831.6" fill="url(#g530)" shape-rendering="crispEdges" /><polygon points="1140,932.2 1150,937.8 1150,841.9 1140,836.8" fill="url(#g531)" shape-rendering="crispEdges" /><polygon points="1150,937.8 1160,943.4 1160,847.1 1150,841.9" fill="url(#g532)" shape-rendering="crispEdges" /><polygon points="1160,943.4 1170,949 1170,852.2 1160,847.1" fill="url(#g533)" shape-rendering="crispEdges" /><polygon points="1170,949 1180,954.6 1180,857.4 1170,852.2" fill="url(#g534)" shape-rendering="crispEdges" /><polygon points="1180,954.6 1190,960.2 1190,862.5 1180,857.4" fill="url(#g535)" shape-rendering="crispEdges" /><polygon points="1190,960.2 1200,966.1 1200,867.9 1190,862.5" fill="url(#g536)" shape-rendering="crispEdges" /><polygon points="1200,966.1 1210,972.7 1210,873.7 1200,867.9" fill="url(#g537)" shape-rendering="crispEdges" /><polygon points="1210,972.7 1220,979.3 1220,879.6 1210,873.7" fill="url(#g538)" shape-rendering="crispEdges" /><polygon points="1220,979.3 1230,986 1230,885.4 1220,879.6" fill="url(#g539)" shape-rendering="crispEdges" /><polygon points="1230,986 1240,992.6 1240,891.3 1230,885.4" fill="url(#g540)" shape-rendering="crispEdges" /><polygon points="1240,992.6 1250,999.2 1250,897.2 1240,891.3" fill="url(#g541)" shape-rendering="crispEdges" /><polygon points="1250,999.2 1260,1005.8 1260,903 1250,897.2" fill="url(#g542)" shape-rendering="crispEdges" /><polygon points="1260,1005.8 1270,1012.4 1270,908.9 1260,903" fill="url(#g543)" shape-rendering="crispEdges" /><polygon points="1270,1012.4 1280,1019 1280,914.7 1270,908.9" fill="url(#g544)" shape-rendering="crispEdges" /><polygon points="1280,1019 1290,1025.3 1290,920.9 1280,914.7" fill="url(#g545)" shape-rendering="crispEdges" /><polygon points="1290,1025.3 1300,1028.7 1300,929.5 1290,920.9" fill="url(#g546)" shape-rendering="crispEdges" /><polygon points="1300,1028.7 1310,1032 1310,938.1 1300,929.5" fill="url(#g547)" shape-rendering="crispEdges" /><polygon points="1310,1032 1320,1035.3 1320,946.8 1310,938.1" fill="url(#g548)" shape-rendering="crispEdges" /><polygon points="1320,1035.3 1330,1038.7 1330,955.4 1320,946.8" fill="url(#g549)" shape-rendering="crispEdges" /><polygon points="1330,1038.7 1340,1042 1340,964.1 1330,955.4" fill="url(#g550)" shape-rendering="crispEdges" /><polygon points="1340,1042 1350,1045.3 1350,972.7 1340,964.1" fill="url(#g551)" shape-rendering="crispEdges" /><polygon points="1350,1045.3 1360,1048.7 1360,981.4 1350,972.7" fill="url(#g552)" shape-rendering="crispEdges" /><polygon points="1360,1048.7 1370,1052 1370,990 1360,981.4" fill="url(#g553)" shape-rendering="crispEdges" /><polygon points="1370,1052 1380,1054 1380,1010 1370,990" fill="url(#g554)" shape-rendering="crispEdges" /><polygon points="1380,1054 1390,1056 1390,1030 1380,1010" fill="url(#g555)" shape-rendering="crispEdges" /><polygon points="1390,1056 1400,1058 1400,1050 1390,1030" fill="url(#g556)" shape-rendering="crispEdges" /><polygon points="833.4,903.7 844.7,906.4 844.7,917.7 833.4,914" fill="url(#g557)" /><polygon points="843.5,906.4 854.8,909.2 854.8,921.5 843.5,917.7" fill="url(#g558)" /><polygon points="853.6,909.2 864.9,912 864.9,925.4 853.6,921.5" fill="url(#g559)" /><polygon points="863.7,912 875.1,914.8 875.1,929.2 863.7,925.4" fill="url(#g560)" /><polygon points="873.9,914.8 885.2,917.5 885.2,933 873.9,929.2" fill="url(#g561)" /><polygon points="884,917.5 895.3,920.3 895.3,936.9 884,933" fill="url(#g562)" /><polygon points="894.1,920.3 905.4,923.1 905.4,940.7 894.1,936.9" fill="url(#g563)" /><polygon points="904.2,923.1 915.5,925.9 915.5,944.5 904.2,940.7" fill="url(#g564)" /><polygon points="914.3,925.9 925.6,928.7 925.6,948.4 914.3,944.5" fill="url(#g565)" /><polygon points="924.4,928.7 935.7,931.5 935.7,951.8 924.4,948.4" fill="url(#g566)" /><polygon points="934.5,931.5 945.8,934.3 945.8,954.5 934.5,951.8" fill="url(#g567)" /><polygon points="944.6,934.3 956,937.1 956,957.1 944.6,954.5" fill="url(#g568)" /><polygon points="954.8,937.1 966.1,939.5 966.1,959.8 954.8,957.1" fill="url(#g569)" /><polygon points="964.9,939.5 976.2,941.8 976.2,962.4 964.9,959.8" fill="url(#g570)" /><polygon points="975,941.8 986.3,944.1 986.3,965.1 975,962.4" fill="url(#g571)" /><polygon points="985.1,944.1 996.4,946.4 996.4,967.7 985.1,965.1" fill="url(#g572)" /><polygon points="995.2,946.4 1006.5,948.7 1006.5,970.3 995.2,967.7" fill="url(#g573)" /><polygon points="1005.3,948.7 1016.6,951 1016.6,973 1005.3,970.3" fill="url(#g574)" /><polygon points="1015.4,951 1026.8,953.3 1026.8,975.6 1015.4,973" fill="url(#g575)" /><polygon points="1025.6,953.3 1036.9,955.6 1036.9,978.3 1025.6,975.6" fill="url(#g576)" /><polygon points="1035.7,955.6 1047,957.9 1047,980.9 1035.7,978.3" fill="url(#g577)" /><polygon points="1045.8,957.9 1057.1,960.2 1057.1,983.6 1045.8,980.9" fill="url(#g578)" /><polygon points="1055.9,960.2 1067.2,962.5 1067.2,986.3 1055.9,983.6" fill="url(#g579)" /><polygon points="1066,962.5 1077.3,964.7 1077.3,989.6 1066,986.3" fill="url(#g580)" /><polygon points="1076.1,964.7 1087.4,967 1087.4,992.8 1076.1,989.6" fill="url(#g581)" /><polygon points="1086.2,967 1097.5,969.3 1097.5,996 1086.2,992.8" fill="url(#g582)" /><polygon points="1096.3,969.3 1107.7,971.6 1107.7,999.3 1096.3,996" fill="url(#g583)" /><polygon points="1106.5,971.6 1117.8,973.9 1117.8,1002.5 1106.5,999.3" fill="url(#g584)" /><polygon points="1116.6,973.9 1127.9,976.2 1127.9,1005.8 1116.6,1002.5" fill="url(#g585)" /><polygon points="1126.7,976.2 1138,978.5 1138,1009 1126.7,1005.8" fill="url(#g586)" /><polygon points="1136.8,978.5 1148.1,981.1 1148.1,1012.2 1136.8,1009" fill="url(#g587)" /><polygon points="1146.9,981.1 1158.2,984.3 1158.2,1015.5 1146.9,1012.2" fill="url(#g588)" /><polygon points="1157,984.3 1168.3,987.4 1168.3,1018.7 1157,1015.5" fill="url(#g589)" /><polygon points="1167.1,987.4 1178.4,990.6 1178.4,1021.9 1167.1,1018.7" fill="url(#g590)" /><polygon points="1177.2,990.6 1188.6,993.7 1188.6,1025.2 1177.2,1021.9" fill="url(#g591)" /><polygon points="1187.4,993.7 1198.7,996.9 1198.7,1028.3 1187.4,1025.2" fill="url(#g592)" /><polygon points="1197.5,996.9 1208.8,1000 1208.8,1030.9 1197.5,1028.3" fill="url(#g593)" /><polygon points="1207.6,1000 1218.9,1003.2 1218.9,1033.5 1207.6,1030.9" fill="url(#g594)" /><polygon points="1217.7,1003.2 1229,1006.4 1229,1036.1 1217.7,1033.5" fill="url(#g595)" /><polygon points="1227.8,1006.4 1239.1,1009.5 1239.1,1038.7 1227.8,1036.1" fill="url(#g596)" /><polygon points="1237.9,1009.5 1249.2,1012.7 1249.2,1041.3 1237.9,1038.7" fill="url(#g597)" /><polygon points="1248,1012.7 1259.4,1015.8 1259.4,1043.9 1248,1041.3" fill="url(#g598)" /><polygon points="1258.2,1015.8 1269.5,1019 1269.5,1046.5 1258.2,1043.9" fill="url(#g599)" /><polygon points="1268.3,1019 1279.6,1022.1 1279.6,1049.1 1268.3,1046.5" fill="url(#g600)" /><polygon points="1278.4,1022.1 1289.7,1025.3 1289.7,1051.7 1278.4,1049.1" fill="url(#g601)" /><polygon points="1288.5,1025.3 1299.8,1028.6 1299.8,1054.3 1288.5,1051.7" fill="url(#g602)" /><polygon points="1298.6,1028.6 1309.9,1032 1309.9,1056.9 1298.6,1054.3" fill="url(#g603)" /><polygon points="1308.7,1032 1320,1035.3 1320,1059.5 1308.7,1056.9" fill="url(#g604)" /><polygon points="1318.8,1035.3 1330.1,1038.6 1330.1,1061.9 1318.8,1059.5" fill="url(#g605)" /><polygon points="1328.9,1038.6 1340.3,1042 1340.3,1060.4 1328.9,1061.9" fill="url(#g606)" /><polygon points="1339.1,1042 1350.4,1045.3 1350.4,1059 1339.1,1060.4" fill="url(#g607)" /><polygon points="1349.2,1045.3 1360.5,1048.7 1360.5,1057.5 1349.2,1059" fill="url(#g608)" /><polygon points="1359.3,1048.7 1370.6,1052 1370.6,1056 1359.3,1057.5" fill="url(#g609)" /><polygon points="125.7,632.6 137.3,634 282.8,643 370,657.3 525.3,691.6 638.4,725.3 737.6,755 840,790.8 948,832 1064.6,890.5 1196.8,964.6 1289.4,1025.4 1289.4,1025.4 1144,980 958.7,938 834.4,903.7 737.6,858 638.4,830.5 539,796.7 440,759 370,730 341,715.5 268.3,686.4 195.5,651.5 181,645.7 151.9,644.2 125.7,632.6" fill="#8a9a20" /><polygon points="299.4,685.1 310.7,689.1 310.7,703.1 299.4,699.1" fill="url(#g610)" /><polygon points="309.5,689.1 320.8,693.2 320.8,707.2 309.5,703.1" fill="url(#g611)" /><polygon points="319.6,693.2 330.8,697.2 330.8,711.2 319.6,707.2" fill="url(#g612)" /><polygon points="329.6,697.2 340.9,701.2 340.9,715.2 329.6,711.2" fill="url(#g613)" /><polygon points="339.7,701.2 351,705.6 351,719.6 339.7,715.2" fill="url(#g614)" /><polygon points="349.8,705.6 361.1,710 361.1,724 349.8,719.6" fill="url(#g615)" /><polygon points="359.9,710 371.1,714.5 371.1,728.5 359.9,724" fill="url(#g616)" /><polygon points="369.9,714.5 381.2,718.9 381.2,732.9 369.9,728.5" fill="url(#g617)" /><polygon points="380,718.9 391.3,723.3 391.3,737.3 380,732.9" fill="url(#g618)" /><polygon points="390.1,723.3 401.4,727.8 401.4,741.8 390.1,737.3" fill="url(#g619)" /><polygon points="400.2,727.8 411.4,732.2 411.4,746.2 400.2,741.8" fill="url(#g620)" /><polygon points="410.2,732.2 421.5,736.6 421.5,750.6 410.2,746.2" fill="url(#g621)" /><polygon points="420.3,736.6 431.6,741 431.6,755 420.3,750.6" fill="url(#g622)" /><polygon points="430.4,741 441.7,745.4 441.7,759.4 430.4,755" fill="url(#g623)" /><polygon points="440.5,745.4 451.7,749.2 451.7,763.2 440.5,759.4" fill="url(#g624)" /><polygon points="450.5,749.2 461.8,753.1 461.8,767.1 450.5,763.2" fill="url(#g625)" /><polygon points="460.6,753.1 471.9,756.9 471.9,770.9 460.6,767.1" fill="url(#g626)" /><polygon points="470.7,756.9 482,760.7 482,774.7 470.7,770.9" fill="url(#g627)" /><polygon points="480.8,760.7 492,764.6 492,778.6 480.8,774.7" fill="url(#g628)" /><polygon points="490.8,764.6 502.1,768.4 502.1,782.4 490.8,778.6" fill="url(#g629)" /><polygon points="500.9,768.4 512.2,772.3 512.2,786.3 500.9,782.4" fill="url(#g630)" /><polygon points="511,772.3 522.3,776.1 522.3,790.1 511,786.3" fill="url(#g631)" /><polygon points="521.1,776.1 532.3,779.9 532.3,793.9 521.1,790.1" fill="url(#g632)" /><polygon points="531.1,779.9 542.4,783.7 542.4,797.7 531.1,793.9" fill="url(#g633)" /><polygon points="541.2,783.7 552.5,787.1 552.5,801.1 541.2,797.7" fill="url(#g634)" /><polygon points="551.3,787.1 562.6,790.5 562.6,804.5 551.3,801.1" fill="url(#g635)" /><polygon points="561.4,790.5 572.6,793.9 572.6,807.9 561.4,804.5" fill="url(#g636)" /><polygon points="571.4,793.9 582.7,797.4 582.7,811.4 571.4,807.9" fill="url(#g637)" /><polygon points="581.5,797.4 592.8,800.8 592.8,814.8 581.5,811.4" fill="url(#g638)" /><polygon points="591.6,800.8 602.9,804.2 602.9,818.2 591.6,814.8" fill="url(#g639)" /><polygon points="601.7,804.2 612.9,807.6 612.9,821.6 601.7,818.2" fill="url(#g640)" /><polygon points="611.7,807.6 623,811.1 623,825.1 611.7,821.6" fill="url(#g641)" /><polygon points="621.8,811.1 633.1,814.5 633.1,828.5 621.8,825.1" fill="url(#g642)" /><polygon points="631.9,814.5 643.2,817.7 643.2,831.7 631.9,828.5" fill="url(#g643)" /><polygon points="642,817.7 653.2,820.4 653.2,834.4 642,831.7" fill="url(#g644)" /><polygon points="652,820.4 663.3,823.2 663.3,837.2 652,834.4" fill="url(#g645)" /><polygon points="662.1,823.2 673.4,826 673.4,840 662.1,837.2" fill="url(#g646)" /><polygon points="672.2,826 683.5,828.8 683.5,842.8 672.2,840" fill="url(#g647)" /><polygon points="682.3,828.8 693.5,831.6 693.5,845.6 682.3,842.8" fill="url(#g648)" /><polygon points="692.3,831.6 703.6,834.4 703.6,848.4 692.3,845.6" fill="url(#g649)" /><polygon points="702.4,834.4 713.7,837.2 713.7,851.2 702.4,848.4" fill="url(#g650)" /><polygon points="712.5,837.2 723.8,840 723.8,854 712.5,851.2" fill="url(#g651)" /><polygon points="722.6,840 733.8,842.8 733.8,856.8 722.6,854" fill="url(#g652)" /><polygon points="732.6,842.8 743.9,846.7 743.9,860.7 732.6,856.8" fill="url(#g653)" /><polygon points="742.7,846.7 754,851.5 754,865.5 742.7,860.7" fill="url(#g654)" /><polygon points="752.8,851.5 764.1,856.2 764.1,870.2 752.8,865.5" fill="url(#g655)" /><polygon points="762.9,856.2 774.1,861 774.1,875 762.9,870.2" fill="url(#g656)" /><polygon points="772.9,861 784.2,865.7 784.2,879.7 772.9,875" fill="url(#g657)" /><polygon points="783,865.7 794.3,870.5 794.3,884.5 783,879.7" fill="url(#g658)" /><polygon points="793.1,870.5 804.4,875.2 804.4,889.2 793.1,884.5" fill="url(#g659)" /><polygon points="803.2,875.2 814.4,880 814.4,894 803.2,889.2" fill="url(#g660)" /><polygon points="813.2,880 824.5,884.8 824.5,898.8 813.2,894" fill="url(#g661)" /><polygon points="823.3,884.8 834.6,889.5 834.6,903.5 823.3,898.8" fill="url(#g662)" /><polygon points="525.3,691.6 598.7,652 640,688 700,728 737.6,745 810,780 853,796 958.7,832 948,832 840,790.8 737.6,755 638.4,725.3" fill="#8a9a20" /><polyline points="525.3,692.6 638.4,727 737.6,757 840,793 948,834 1064.6,892.5" fill="none" stroke="#1d5fae" stroke-width="9" stroke-linejoin="round" stroke-linecap="round" opacity="0.9"/><polyline points="525.3,691.6 638.4,725.3 737.6,755 840,790.8 948,832 1064.6,890.5" fill="none" stroke="#a03014" stroke-width="5" stroke-linejoin="round" stroke-linecap="round" /><polyline points="525.3,693 638.4,727 737.6,757 840,792.6 948,834 1064.6,892" fill="none" stroke="#1d5fae" stroke-width="1.6" stroke-linejoin="round" stroke-linecap="round" opacity="0.8" stroke-dasharray="3 2"/><polygon points="374,654 598.7,652 525.3,691.6" fill="url(#g663)" /><polygon points="374,654 420,653 500,680 470,676" fill="url(#g664)" /><polygon points="312,653 324,653 300,683 288,683" fill="url(#g665)" /><polygon points="330,653 342,653 318,683 306,683" fill="url(#g666)" /><polygon points="202.2,658 213.5,660.8 213.5,668.8 202.2,666" fill="url(#g667)" /><polygon points="212.3,660.8 223.6,663.6 223.6,671.6 212.3,668.8" fill="url(#g668)" /><polygon points="222.4,663.6 233.7,666.3 233.7,674.3 222.4,671.6" fill="url(#g669)" /><polygon points="232.5,666.3 243.9,669.1 243.9,677.1 232.5,674.3" fill="url(#g670)" /><polygon points="242.7,669.1 254,671.9 254,679.9 242.7,677.1" fill="url(#g671)" /><polygon points="252.8,671.9 264.1,674.7 264.1,682.7 252.8,679.9" fill="url(#g672)" /><polygon points="262.9,674.7 274.2,677.5 274.2,685.5 262.9,682.7" fill="url(#g673)" /><polygon points="273,677.5 284.3,680.3 284.3,688.3 273,685.5" fill="url(#g674)" /><polygon points="283.1,680.3 294.4,683.2 294.4,691.2 283.1,688.3" fill="url(#g675)" /><polygon points="293.2,683.2 304.5,686.1 304.5,694.1 293.2,691.2" fill="url(#g676)" /><polygon points="303.3,686.1 314.7,688.9 314.7,696.9 303.3,694.1" fill="url(#g677)" /><polygon points="313.5,688.9 324.8,691.8 324.8,699.8 313.5,696.9" fill="url(#g678)" /><polygon points="323.6,691.8 334.9,694.7 334.9,702.7 323.6,699.8" fill="url(#g679)" /><polygon points="333.7,694.7 345,697.6 345,705.6 333.7,702.7" fill="url(#g680)" /><polygon points="343.8,697.6 355.1,700.5 355.1,708.5 343.8,705.6" fill="url(#g681)" /><polygon points="353.9,700.5 365.2,703.4 365.2,711.4 353.9,708.5" fill="url(#g682)" /><polygon points="364,703.4 375.3,706.3 375.3,714.3 364,711.4" fill="url(#g683)" /><polygon points="374.1,706.3 385.5,709.2 385.5,717.2 374.1,714.3" fill="url(#g684)" /><polygon points="384.3,709.2 395.6,712.1 395.6,720.1 384.3,717.2" fill="url(#g685)" /><polygon points="394.4,712.1 405.7,715 405.7,723 394.4,720.1" fill="url(#g686)" /><polygon points="404.5,715 415.8,717.9 415.8,725.9 404.5,723" fill="url(#g687)" /><polygon points="414.6,717.9 425.9,720.8 425.9,728.8 414.6,725.9" fill="url(#g688)" /><polygon points="424.7,720.8 436,723.7 436,731.7 424.7,728.8" fill="url(#g689)" /><polygon points="434.8,723.7 446.1,726.7 446.1,734.7 434.8,731.7" fill="url(#g690)" /><polygon points="444.9,726.7 456.3,729.7 456.3,737.7 444.9,734.7" fill="url(#g691)" /><polygon points="455.1,729.7 466.4,732.8 466.4,740.8 455.1,737.7" fill="url(#g692)" /><polygon points="465.2,732.8 476.5,735.9 476.5,743.9 465.2,740.8" fill="url(#g693)" /><polygon points="475.3,735.9 486.6,738.9 486.6,746.9 475.3,743.9" fill="url(#g694)" /><polygon points="485.4,738.9 496.7,742 496.7,750 485.4,746.9" fill="url(#g695)" /><polygon points="495.5,742 506.8,745.1 506.8,753.1 495.5,750" fill="url(#g696)" /><polygon points="505.6,745.1 516.9,748.1 516.9,756.1 505.6,753.1" fill="url(#g697)" /><polygon points="515.7,748.1 527.1,751.2 527.1,759.2 515.7,756.1" fill="url(#g698)" /><polygon points="525.9,751.2 537.2,754.3 537.2,762.3 525.9,759.2" fill="url(#g699)" /><polygon points="536,754.3 547.3,757.5 547.3,765.5 536,762.3" fill="url(#g700)" /><polygon points="546.1,757.5 557.4,760.8 557.4,768.8 546.1,765.5" fill="url(#g701)" /><polygon points="556.2,760.8 567.5,764 567.5,772 556.2,768.8" fill="url(#g702)" /><polygon points="566.3,764 577.6,767.3 577.6,775.3 566.3,772" fill="url(#g703)" /><polygon points="576.4,767.3 587.7,770.6 587.7,778.6 576.4,775.3" fill="url(#g704)" /><polygon points="586.5,770.6 597.9,773.8 597.9,781.8 586.5,778.6" fill="url(#g705)" /><polygon points="596.7,773.8 608,777.1 608,785.1 596.7,781.8" fill="url(#g706)" /><polygon points="606.8,777.1 618.1,780.4 618.1,788.4 606.8,785.1" fill="url(#g707)" /><polygon points="616.9,780.4 628.2,783.6 628.2,791.6 616.9,788.4" fill="url(#g708)" /><polygon points="627,783.6 638.3,786.9 638.3,794.9 627,791.6" fill="url(#g709)" /><polygon points="637.1,786.9 648.4,791.1 648.4,799.1 637.1,794.9" fill="url(#g710)" /><polygon points="647.2,791.1 658.5,795.3 658.5,803.3 647.2,799.1" fill="url(#g711)" /><polygon points="657.3,795.3 668.7,799.5 668.7,807.5 657.3,803.3" fill="url(#g712)" /><polygon points="667.5,799.5 678.8,803.7 678.8,811.7 667.5,807.5" fill="url(#g713)" /><polygon points="677.6,803.7 688.9,808 688.9,816 677.6,811.7" fill="url(#g714)" /><polygon points="687.7,808 699,812.2 699,820.2 687.7,816" fill="url(#g715)" /><polygon points="697.8,812.2 709.1,817.3 709.1,825.3 697.8,820.2" fill="url(#g716)" /><polygon points="707.9,817.3 719.2,822.5 719.2,830.5 707.9,825.3" fill="url(#g717)" /><polygon points="718,822.5 729.3,827.6 729.3,835.6 718,830.5" fill="url(#g718)" /><polygon points="728.1,827.6 739.5,832.8 739.5,840.8 728.1,835.6" fill="url(#g719)" /><polygon points="738.3,832.8 749.6,837.9 749.6,845.9 738.3,840.8" fill="url(#g720)" /><polygon points="748.4,837.9 759.7,842.7 759.7,850.7 748.4,845.9" fill="url(#g721)" /><polygon points="758.5,842.7 769.8,846.1 769.8,854.1 758.5,850.7" fill="url(#g722)" /><polygon points="768.6,846.1 779.9,849.5 779.9,857.5 768.6,854.1" fill="url(#g723)" /><polygon points="778.7,849.5 790,852.9 790,860.9 778.7,857.5" fill="url(#g724)" /><polygon points="788.8,852.9 800.1,856.4 800.1,864.4 788.8,860.9" fill="url(#g725)" /><polygon points="798.9,856.4 810.3,859.8 810.3,867.8 798.9,864.4" fill="url(#g726)" /><polygon points="809.1,859.8 820.4,863.2 820.4,871.2 809.1,867.8" fill="url(#g727)" /><polygon points="819.2,863.2 830.5,866.6 830.5,874.6 819.2,871.2" fill="url(#g728)" /><polygon points="829.3,866.6 840.6,870 840.6,878 829.3,874.6" fill="url(#g729)" /><polygon points="202.8,655.9 282.8,672 440,713 559,750 638,772 698,794 757,826 840,860 840,870 757,842 698,812 638,787 539,755 440,725 282.8,680 202.8,658" fill="#a03014" /><polygon points="669,598 679.3,605.7 679.3,602.7 669,598" fill="url(#g730)" shape-rendering="crispEdges" /><polygon points="679.3,605.7 689.6,613.4 689.6,607.3 679.3,602.7" fill="url(#g731)" shape-rendering="crispEdges" /><polygon points="689.6,613.4 700,621.1 700,612 689.6,607.3" fill="url(#g732)" shape-rendering="crispEdges" /><polygon points="700,621.1 710.3,628.8 710.3,616.6 700,612" fill="url(#g733)" shape-rendering="crispEdges" /><polygon points="710.3,628.8 720.6,636.5 720.6,621.3 710.3,616.6" fill="url(#g734)" shape-rendering="crispEdges" /><polygon points="720.6,636.5 730.9,644.2 730.9,625.9 720.6,621.3" fill="url(#g735)" shape-rendering="crispEdges" /><polygon points="730.9,644.2 741.2,652 741.2,630.9 730.9,625.9" fill="url(#g736)" shape-rendering="crispEdges" /><polygon points="741.2,652 751.6,659.8 751.6,637.9 741.2,630.9" fill="url(#g737)" shape-rendering="crispEdges" /><polygon points="751.6,659.8 761.9,667.7 761.9,644.9 751.6,637.9" fill="url(#g738)" shape-rendering="crispEdges" /><polygon points="761.9,667.7 772.2,675.6 772.2,652 761.9,644.9" fill="url(#g739)" shape-rendering="crispEdges" /><polygon points="772.2,675.6 782.5,683.5 782.5,659 772.2,652" fill="url(#g740)" shape-rendering="crispEdges" /><polygon points="782.5,683.5 792.9,691.4 792.9,666 782.5,659" fill="url(#g741)" shape-rendering="crispEdges" /><polygon points="792.9,691.4 803.2,699.2 803.2,673.1 792.9,666" fill="url(#g742)" shape-rendering="crispEdges" /><polygon points="803.2,699.2 813.5,707.1 813.5,680.1 803.2,673.1" fill="url(#g743)" shape-rendering="crispEdges" /><polygon points="813.5,707.1 823.8,715 823.8,687.2 813.5,680.1" fill="url(#g744)" shape-rendering="crispEdges" /><polygon points="823.8,715 834.1,722.9 834.1,694.2 823.8,687.2" fill="url(#g745)" shape-rendering="crispEdges" /><polygon points="834.1,722.9 844.5,730.8 844.5,701.2 834.1,694.2" fill="url(#g746)" shape-rendering="crispEdges" /><polygon points="844.5,730.8 854.8,739.3 854.8,709.2 844.5,701.2" fill="url(#g747)" shape-rendering="crispEdges" /><polygon points="854.8,739.3 865.1,748.6 865.1,718.3 854.8,709.2" fill="url(#g748)" shape-rendering="crispEdges" /><polygon points="865.1,748.6 875.4,757.8 875.4,727.4 865.1,718.3" fill="url(#g749)" shape-rendering="crispEdges" /><polygon points="875.4,757.8 885.8,767.1 885.8,736.4 875.4,727.4" fill="url(#g750)" shape-rendering="crispEdges" /><polygon points="885.8,767.1 896.1,776.4 896.1,745.5 885.8,736.4" fill="url(#g751)" shape-rendering="crispEdges" /><polygon points="896.1,776.4 906.4,785.6 906.4,754.6 896.1,745.5" fill="url(#g752)" shape-rendering="crispEdges" /><polygon points="906.4,785.6 916.7,794.9 916.7,763.7 906.4,754.6" fill="url(#g753)" shape-rendering="crispEdges" /><polygon points="916.7,794.9 927,804.2 927,772.8 916.7,763.7" fill="url(#g754)" shape-rendering="crispEdges" /><polygon points="927,804.2 937.4,813.5 937.4,781.8 927,772.8" fill="url(#g755)" shape-rendering="crispEdges" /><polygon points="937.4,813.5 947.7,822.7 947.7,790.9 937.4,781.8" fill="url(#g756)" shape-rendering="crispEdges" /><polygon points="947.7,822.7 958,832 958,800 947.7,790.9" fill="url(#g757)" shape-rendering="crispEdges" /><polygon points="669,598 740,651 850,735 958,832 850,749 740,662 669,600" fill="#1d5fae" /><polygon points="672,599 740,653 850,738 950,826 850,746 740,660 672,600" fill="#7a9a26" /><polyline points="669,597 740,597 860,601 940,605 1060,619 1140,632 1280,650" fill="none" stroke="#1d5fae" stroke-width="5" stroke-linejoin="round" stroke-linecap="round" opacity="0.8"/><polyline points="669,597 740,597 860,601 940,605 1060,619 1140,632 1280,650" fill="none" stroke="#7a9a28" stroke-width="2.2" stroke-linejoin="round" stroke-linecap="round" /><polygon points="668.4,600.4 679.6,602.9 679.6,600.8 668.4,598.4" fill="url(#g758)" /><polygon points="678.4,602.9 689.6,605.3 689.6,603.2 678.4,600.8" fill="url(#g759)" /><polygon points="688.4,605.3 699.6,607.8 699.6,605.6 688.4,603.2" fill="url(#g760)" /><polygon points="698.4,607.8 709.6,610.3 709.6,608 698.4,605.6" fill="url(#g761)" /><polygon points="708.4,610.3 719.6,612.8 719.6,610.4 708.4,608" fill="url(#g762)" /><polygon points="718.4,612.8 729.6,615.4 729.6,612.8 718.4,610.4" fill="url(#g763)" /><polygon points="728.4,615.4 739.6,617.9 739.6,615.3 728.4,612.8" fill="url(#g764)" /><polygon points="738.4,617.9 749.6,620.4 749.6,617.7 738.4,615.3" fill="url(#g765)" /><polygon points="748.4,620.4 759.6,623 759.6,620.2 748.4,617.7" fill="url(#g766)" /><polygon points="758.4,623 769.6,625.5 769.6,622.7 758.4,620.2" fill="url(#g767)" /><polygon points="768.4,625.5 779.6,628.1 779.6,625.2 768.4,622.7" fill="url(#g768)" /><polygon points="778.4,628.1 789.6,630.7 789.6,627.6 778.4,625.2" fill="url(#g769)" /><polygon points="788.4,630.7 799.6,633.3 799.6,630.1 788.4,627.6" fill="url(#g770)" /><polygon points="798.4,633.3 809.6,635.9 809.6,632.7 798.4,630.1" fill="url(#g771)" /><polygon points="808.4,635.9 819.6,638.5 819.6,635.2 808.4,632.7" fill="url(#g772)" /><polygon points="818.4,638.5 829.6,641.1 829.6,637.7 818.4,635.2" fill="url(#g773)" /><polygon points="828.4,641.1 839.6,643.7 839.6,640.3 828.4,637.7" fill="url(#g774)" /><polygon points="838.4,643.7 849.6,646.4 849.6,642.8 838.4,640.3" fill="url(#g775)" /><polygon points="848.4,646.4 859.6,649 859.6,645.4 848.4,642.8" fill="url(#g776)" /><polygon points="858.4,649 869.6,651.7 869.6,648 858.4,645.4" fill="url(#g777)" /><polygon points="868.4,651.7 879.6,654.4 879.6,650.5 868.4,648" fill="url(#g778)" /><polygon points="878.4,654.4 889.6,657 889.6,653.1 878.4,650.5" fill="url(#g779)" /><polygon points="888.4,657 899.6,659.7 899.6,655.7 888.4,653.1" fill="url(#g780)" /><polygon points="898.4,659.7 909.6,662.4 909.6,658.4 898.4,655.7" fill="url(#g781)" /><polygon points="908.4,662.4 919.6,665.2 919.6,661.1 908.4,658.4" fill="url(#g782)" /><polygon points="918.4,665.2 929.6,667.9 929.6,663.7 918.4,661.1" fill="url(#g783)" /><polygon points="928.4,667.9 939.6,670.6 939.6,666.4 928.4,663.7" fill="url(#g784)" /><polygon points="938.4,670.6 949.6,673.4 949.6,669.1 938.4,666.4" fill="url(#g785)" /><polygon points="948.4,673.4 959.6,676.1 959.6,671.8 948.4,669.1" fill="url(#g786)" /><polygon points="958.4,676.1 969.6,678.9 969.6,674.6 958.4,671.8" fill="url(#g787)" /><polygon points="968.4,678.9 979.6,681.7 979.6,677.3 968.4,674.6" fill="url(#g788)" /><polygon points="978.4,681.7 989.6,684.5 989.6,680 978.4,677.3" fill="url(#g789)" /><polygon points="988.4,684.5 999.6,687.3 999.6,682.8 988.4,680" fill="url(#g790)" /><polygon points="998.4,687.3 1009.6,690.1 1009.6,685.6 998.4,682.8" fill="url(#g791)" /><polygon points="1008.4,690.1 1019.6,693 1019.6,688.4 1008.4,685.6" fill="url(#g792)" /><polygon points="1018.4,693 1029.6,695.8 1029.6,691.2 1018.4,688.4" fill="url(#g793)" /><polygon points="1028.4,695.8 1039.6,698.7 1039.6,694 1028.4,691.2" fill="url(#g794)" /><polygon points="1038.4,698.7 1049.6,701.5 1049.6,696.8 1038.4,694" fill="url(#g795)" /><polygon points="1048.4,701.5 1059.6,704.4 1059.6,699.6 1048.4,696.8" fill="url(#g796)" /><polygon points="1058.4,704.4 1069.6,707.3 1069.6,702.4 1058.4,699.6" fill="url(#g797)" /><polygon points="1068.4,707.3 1079.6,710.2 1079.6,705.3 1068.4,702.4" fill="url(#g798)" /><polygon points="1078.4,710.2 1089.6,713.1 1089.6,708.2 1078.4,705.3" fill="url(#g799)" /><polygon points="1088.4,713.1 1099.6,716 1099.6,711 1088.4,708.2" fill="url(#g800)" /><polygon points="1098.4,716 1109.6,719 1109.6,713.9 1098.4,711" fill="url(#g801)" /><polygon points="1108.4,719 1119.6,721.9 1119.6,716.8 1108.4,713.9" fill="url(#g802)" /><polygon points="1118.4,721.9 1129.6,724.9 1129.6,719.8 1118.4,716.8" fill="url(#g803)" /><polygon points="1128.4,724.9 1139.6,727.9 1139.6,722.7 1128.4,719.8" fill="url(#g804)" /><polygon points="1138.4,727.9 1149.6,730.9 1149.6,725.6 1138.4,722.7" fill="url(#g805)" /><polygon points="1148.4,730.9 1159.6,733.9 1159.6,728.6 1148.4,725.6" fill="url(#g806)" /><polygon points="1158.4,733.9 1169.6,736.9 1169.6,731.5 1158.4,728.6" fill="url(#g807)" /><polygon points="1168.4,736.9 1179.6,739.9 1179.6,734.5 1168.4,731.5" fill="url(#g808)" /><polygon points="1178.4,739.9 1189.6,743 1189.6,737.5 1178.4,734.5" fill="url(#g809)" /><polygon points="1188.4,743 1199.6,746 1199.6,740.5 1188.4,737.5" fill="url(#g810)" /><polygon points="1198.4,746 1209.6,749.1 1209.6,743.6 1198.4,740.5" fill="url(#g811)" /><polygon points="1208.4,749.1 1219.6,752.2 1219.6,746.6 1208.4,743.6" fill="url(#g812)" /><polygon points="1218.4,752.2 1229.6,755.3 1229.6,749.6 1218.4,746.6" fill="url(#g813)" /><polygon points="1228.4,755.3 1239.6,758.4 1239.6,752.7 1228.4,749.6" fill="url(#g814)" /><polygon points="1238.4,758.4 1249.6,761.5 1249.6,755.8 1238.4,752.7" fill="url(#g815)" /><polygon points="1248.4,761.5 1259.6,764.7 1259.6,758.9 1248.4,755.8" fill="url(#g816)" /><polygon points="1258.4,764.7 1269.6,767.8 1269.6,762 1258.4,758.9" fill="url(#g817)" /><polygon points="1268.4,767.8 1279.6,771 1279.6,765.1 1268.4,762" fill="url(#g818)" /><polygon points="1278.4,771 1289.6,774.2 1289.6,768.2 1278.4,765.1" fill="url(#g819)" /><polygon points="1288.4,774.2 1299.6,777.3 1299.6,771.4 1288.4,768.2" fill="url(#g820)" /><polygon points="1298.4,777.3 1309.6,780.6 1309.6,774.5 1298.4,771.4" fill="url(#g821)" /><polygon points="1308.4,780.6 1319.6,783.8 1319.6,777.6 1308.4,774.5" fill="url(#g822)" /><polygon points="1318.4,783.8 1329.6,787 1329.6,780.8 1318.4,777.6" fill="url(#g823)" /><polygon points="1328.4,787 1339.6,790.3 1339.6,784 1328.4,780.8" fill="url(#g824)" /><polygon points="1338.4,790.3 1349.6,793.5 1349.6,787.1 1338.4,784" fill="url(#g825)" /><polygon points="1348.4,793.5 1359.6,796.8 1359.6,790.3 1348.4,787.1" fill="url(#g826)" /><polygon points="1358.4,796.8 1369.6,800.1 1369.6,793.6 1358.4,790.3" fill="url(#g827)" /><polygon points="1368.4,800.1 1379.6,803.4 1379.6,796.8 1368.4,793.6" fill="url(#g828)" /><polygon points="1378.4,803.4 1389.6,806.7 1389.6,800 1378.4,796.8" fill="url(#g829)" /><polygon points="1388.4,806.7 1399.6,810.1 1399.6,803.3 1388.4,800" fill="url(#g830)" /><polygon points="1398.4,810.1 1409.6,813.4 1409.6,806.6 1398.4,803.3" fill="url(#g831)" /><polygon points="1408.4,813.4 1419.6,816.8 1419.6,809.8 1408.4,806.6" fill="url(#g832)" /><polygon points="1418.4,816.8 1429.6,820.2 1429.6,813.2 1418.4,809.8" fill="url(#g833)" /><polygon points="1428.4,820.2 1439.6,823.6 1439.6,816.5 1428.4,813.2" fill="url(#g834)" /><polygon points="1438.4,823.6 1449.6,827 1449.6,819.8 1438.4,816.5" fill="url(#g835)" /><polygon points="1448.4,827 1459.6,830.4 1459.6,823.2 1448.4,819.8" fill="url(#g836)" /><polygon points="1458.4,830.4 1469.6,833.9 1469.6,826.5 1458.4,823.2" fill="url(#g837)" /><polygon points="1468.4,833.9 1479.6,837.3 1479.6,829.9 1468.4,826.5" fill="url(#g838)" /><polygon points="1478.4,837.3 1489.6,840.8 1489.6,833.3 1478.4,829.9" fill="url(#g839)" /><polygon points="1488.4,840.8 1499.6,844.3 1499.6,836.7 1488.4,833.3" fill="url(#g840)" /><polygon points="1498.4,844.3 1509.6,847.8 1509.6,840.1 1498.4,836.7" fill="url(#g841)" /><polygon points="1508.4,847.8 1519.6,851.3 1519.6,843.6 1508.4,840.1" fill="url(#g842)" /><polygon points="1518.4,851.3 1529.6,854.9 1529.6,847 1518.4,843.6" fill="url(#g843)" /><polygon points="1528.4,854.9 1539.6,858.4 1539.6,850.5 1528.4,847" fill="url(#g844)" /><polygon points="1538.4,858.4 1549.6,862 1549.6,854 1538.4,850.5" fill="url(#g845)" /><polygon points="1548.4,862 1559.6,865.6 1559.6,857.5 1548.4,854" fill="url(#g846)" /><polygon points="1558.4,865.6 1569.6,869.2 1569.6,861 1558.4,857.5" fill="url(#g847)" /><polygon points="1568.4,869.2 1579.6,872.8 1579.6,864.6 1568.4,861" fill="url(#g848)" /><polygon points="1578.4,872.8 1589.6,876.4 1589.6,868.1 1578.4,864.6" fill="url(#g849)" /><polygon points="1588.4,876.4 1599.6,880.1 1599.6,871.7 1588.4,868.1" fill="url(#g850)" /><polygon points="1598.4,880.1 1609.6,883.7 1609.6,875.3 1598.4,871.7" fill="url(#g851)" /><polygon points="1608.4,883.7 1619.6,887.4 1619.6,878.9 1608.4,875.3" fill="url(#g852)" /><polygon points="1618.4,887.4 1629.6,891.1 1629.6,882.5 1618.4,878.9" fill="url(#g853)" /><polygon points="1628.4,891.1 1639.6,894.8 1639.6,886.1 1628.4,882.5" fill="url(#g854)" /><polygon points="1638.4,894.8 1649.6,898.6 1649.6,889.8 1638.4,886.1" fill="url(#g855)" /><polygon points="1648.4,898.6 1659.6,902.3 1659.6,893.5 1648.4,889.8" fill="url(#g856)" /><polygon points="1658.4,902.3 1669.6,906.1 1669.6,897.1 1658.4,893.5" fill="url(#g857)" /><polygon points="1668.4,906.1 1679.6,909.9 1679.6,900.9 1668.4,897.1" fill="url(#g858)" /><polygon points="1678.4,909.9 1689.6,913.7 1689.6,904.6 1678.4,900.9" fill="url(#g859)" /><polygon points="1688.4,913.7 1699.6,917.5 1699.6,908.3 1688.4,904.6" fill="url(#g860)" /><polygon points="1698.4,917.5 1709.6,921.3 1709.6,912.1 1698.4,908.3" fill="url(#g861)" /><polygon points="1708.4,921.3 1719.6,925.2 1719.6,915.8 1708.4,912.1" fill="url(#g862)" /><polygon points="1718.4,925.2 1729.6,929.1 1729.6,919.6 1718.4,915.8" fill="url(#g863)" /><polygon points="1728.4,929.1 1739.6,933 1739.6,923.4 1728.4,919.6" fill="url(#g864)" /><polygon points="1738.4,933 1749.6,936.9 1749.6,927.3 1738.4,923.4" fill="url(#g865)" /><polygon points="1748.4,936.9 1759.6,940.8 1759.6,931.1 1748.4,927.3" fill="url(#g866)" /><polygon points="1758.4,940.8 1769.6,944.7 1769.6,935 1758.4,931.1" fill="url(#g867)" /><polygon points="1768.4,944.7 1779.6,948.7 1779.6,938.8 1768.4,935" fill="url(#g868)" /><polygon points="1778.4,948.7 1789.6,952.7 1789.6,942.7 1778.4,938.8" fill="url(#g869)" /><polygon points="1788.4,952.7 1799.6,956.7 1799.6,946.7 1788.4,942.7" fill="url(#g870)" /><polygon points="1798.4,956.7 1809.6,960.7 1809.6,950.7 1798.4,946.7" fill="url(#g871)" /><polygon points="1808.4,960.7 1819.6,964.7 1819.6,954.7 1808.4,950.7" fill="url(#g872)" /><polygon points="1818.4,964.7 1829.6,968.7 1829.6,958.7 1818.4,954.7" fill="url(#g873)" /><polygon points="1828.4,968.7 1839.6,972.8 1839.6,962.8 1828.4,958.7" fill="url(#g874)" /><polygon points="1838.4,972.8 1849.6,976.9 1849.6,966.9 1838.4,962.8" fill="url(#g875)" /><polygon points="1848.4,976.9 1859.6,981 1859.6,971 1848.4,966.9" fill="url(#g876)" /><polygon points="1858.4,981 1869.6,985.1 1869.6,975.1 1858.4,971" fill="url(#g877)" /><polygon points="1868.4,985.1 1879.6,989.3 1879.6,979.3 1868.4,975.1" fill="url(#g878)" /><polygon points="1878.4,989.3 1889.6,993.4 1889.6,983.4 1878.4,979.3" fill="url(#g879)" /><polygon points="1888.4,993.4 1899.6,997.6 1899.6,987.6 1888.4,983.4" fill="url(#g880)" /><polygon points="1898.4,997.6 1909.6,1001.8 1909.6,991.8 1898.4,987.6" fill="url(#g881)" /><polygon points="1908.4,1001.8 1919.6,1006 1919.6,996 1908.4,991.8" fill="url(#g882)" /><polygon points="1918.4,1006 1929.6,1010.2 1929.6,1000.2 1918.4,996" fill="url(#g883)" /><polygon points="1928.4,1010.2 1939.6,1014.5 1939.6,1004.5 1928.4,1000.2" fill="url(#g884)" /><polygon points="1938.4,1014.5 1949.6,1018.8 1949.6,1008.8 1938.4,1004.5" fill="url(#g885)" /><polygon points="1948.4,1018.8 1959.6,1023.1 1959.6,1013.1 1948.4,1008.8" fill="url(#g886)" /><polygon points="1958.4,1023.1 1969.6,1027.4 1969.6,1017.4 1958.4,1013.1" fill="url(#g887)" /><polygon points="1968.4,1027.4 1979.6,1031.7 1979.6,1021.7 1968.4,1017.4" fill="url(#g888)" /><polygon points="1978.4,1031.7 1989.6,1036.1 1989.6,1026.1 1978.4,1021.7" fill="url(#g889)" /><polygon points="1988.4,1036.1 1999.6,1040.4 1999.6,1030.4 1988.4,1026.1" fill="url(#g890)" /><polygon points="1998.4,1040.4 2009.6,1044.8 2009.6,1034.8 1998.4,1030.4" fill="url(#g891)" /><polygon points="2008.4,1044.8 2019.6,1049.2 2019.6,1039.2 2008.4,1034.8" fill="url(#g892)" /><polygon points="2018.4,1049.2 2029.6,1053.7 2029.6,1043.7 2018.4,1039.2" fill="url(#g893)" /><polygon points="2028.4,1053.7 2039.6,1058.1 2039.6,1048.1 2028.4,1043.7" fill="url(#g894)" /><polygon points="2038.4,1058.1 2049.6,1062.6 2049.6,1052.6 2038.4,1048.1" fill="url(#g895)" /><polygon points="2048.4,1062.6 2059.6,1067.1 2059.6,1057.1 2048.4,1052.6" fill="url(#g896)" /><polygon points="2058.4,1067.1 2069.6,1071.6 2069.6,1061.6 2058.4,1057.1" fill="url(#g897)" /><polygon points="2068.4,1071.6 2079.6,1076.1 2079.6,1066.1 2068.4,1061.6" fill="url(#g898)" /><polygon points="2078.4,1076.1 2089.6,1080.6 2089.6,1070.6 2078.4,1066.1" fill="url(#g899)" /><polygon points="2088.4,1080.6 2099.6,1085.2 2099.6,1075.2 2088.4,1070.6" fill="url(#g900)" /><polygon points="2098.4,1085.2 2109.6,1089.8 2109.6,1079.8 2098.4,1075.2" fill="url(#g901)" /><polygon points="2108.4,1089.8 2119.6,1094.4 2119.6,1084.4 2108.4,1079.8" fill="url(#g902)" /><polygon points="2118.4,1094.4 2129.6,1099 2129.6,1089 2118.4,1084.4" fill="url(#g903)" /><polygon points="2128.4,1099 2139.6,1103.7 2139.6,1093.7 2128.4,1089" fill="url(#g904)" /><polygon points="2138.4,1103.7 2149.6,1108.4 2149.6,1098.4 2138.4,1093.7" fill="url(#g905)" /><polygon points="2148.4,1108.4 2159.6,1113 2159.6,1103 2148.4,1098.4" fill="url(#g906)" /><polygon points="2158.4,1113 2169.6,1117.8 2169.6,1107.8 2158.4,1103" fill="url(#g907)" /><polygon points="2168.4,1117.8 2179.6,1122.5 2179.6,1112.5 2168.4,1107.8" fill="url(#g908)" /><polygon points="2178.4,1122.5 2189.6,1127.2 2189.6,1117.2 2178.4,1112.5" fill="url(#g909)" /><polygon points="2188.4,1127.2 2199.6,1132 2199.6,1122 2188.4,1117.2" fill="url(#g910)" /><polygon points="2198.4,1132 2209.6,1136.8 2209.6,1126.9 2198.4,1122" fill="url(#g911)" /><polygon points="2208.4,1136.8 2219.6,1141.6 2219.6,1131.7 2208.4,1126.9" fill="url(#g912)" /><polygon points="2218.4,1141.6 2229.6,1146.5 2229.6,1136.6 2218.4,1131.7" fill="url(#g913)" /><polygon points="2228.4,1146.5 2239.6,1151.3 2239.6,1141.6 2228.4,1136.6" fill="url(#g914)" /><polygon points="2238.4,1151.3 2249.6,1156.2 2249.6,1146.5 2238.4,1141.6" fill="url(#g915)" /><polygon points="2248.4,1156.2 2259.6,1161.1 2259.6,1151.5 2248.4,1146.5" fill="url(#g916)" /><polygon points="2258.4,1161.1 2269.6,1166 2269.6,1156.4 2258.4,1151.5" fill="url(#g917)" /><polygon points="2268.4,1166 2279.6,1171 2279.6,1161.4 2268.4,1156.4" fill="url(#g918)" /><polygon points="2278.4,1171 2289.6,1176 2289.6,1166.5 2278.4,1161.4" fill="url(#g919)" /><polygon points="2288.4,1176 2299.6,1181 2299.6,1171.5 2288.4,1166.5" fill="url(#g920)" /><polygon points="2298.4,1181 2309.6,1186 2309.6,1176.6 2298.4,1171.5" fill="url(#g921)" /><polygon points="2308.4,1186 2319.6,1191 2319.6,1181.7 2308.4,1176.6" fill="url(#g922)" /><polygon points="2318.4,1191 2329.6,1196.1 2329.6,1186.8 2318.4,1181.7" fill="url(#g923)" /><polygon points="2328.4,1196.1 2339.6,1201.1 2339.6,1191.9 2328.4,1186.8" fill="url(#g924)" /><polygon points="2338.4,1201.1 2349.6,1206.2 2349.6,1197.1 2338.4,1191.9" fill="url(#g925)" /><polygon points="2348.4,1206.2 2359.6,1211.4 2359.6,1202.3 2348.4,1197.1" fill="url(#g926)" /><polygon points="2358.4,1211.4 2369.6,1216.5 2369.6,1207.5 2358.4,1202.3" fill="url(#g927)" /><polygon points="2368.4,1216.5 2379.6,1221.7 2379.6,1212.7 2368.4,1207.5" fill="url(#g928)" /><polygon points="2378.4,1221.7 2389.6,1226.9 2389.6,1217.9 2378.4,1212.7" fill="url(#g929)" /><polygon points="2388.4,1226.9 2399.6,1232.1 2399.6,1223.2 2388.4,1217.9" fill="url(#g930)" /><polygon points="2398.4,1232.1 2409.6,1237.3 2409.6,1228.5 2398.4,1223.2" fill="url(#g931)" /><polygon points="2408.4,1237.3 2419.6,1242.6 2419.6,1233.8 2408.4,1228.5" fill="url(#g932)" /><polygon points="2418.4,1242.6 2429.6,1247.8 2429.6,1239.2 2418.4,1233.8" fill="url(#g933)" /><polygon points="2428.4,1247.8 2439.6,1253.2 2439.6,1244.5 2428.4,1239.2" fill="url(#g934)" /><polygon points="2438.4,1253.2 2449.6,1258.5 2449.6,1249.9 2438.4,1244.5" fill="url(#g935)" /><polygon points="2448.4,1258.5 2459.6,1263.8 2459.6,1255.3 2448.4,1249.9" fill="url(#g936)" /><polygon points="2458.4,1263.8 2469.6,1269.2 2469.6,1260.7 2458.4,1255.3" fill="url(#g937)" /><polygon points="2468.4,1269.2 2479.6,1274.6 2479.6,1266.2 2468.4,1260.7" fill="url(#g938)" /><polygon points="2478.4,1274.6 2489.6,1280 2489.6,1271.7 2478.4,1266.2" fill="url(#g939)" /><polygon points="2488.4,1280 2499.6,1285.5 2499.6,1277.2 2488.4,1271.7" fill="url(#g940)" /><polygon points="2498.4,1285.5 2509.6,1290.9 2509.6,1282.7 2498.4,1277.2" fill="url(#g941)" /><polygon points="2508.4,1290.9 2519.6,1296.4 2519.6,1288.2 2508.4,1282.7" fill="url(#g942)" /><polygon points="2518.4,1296.4 2529.6,1301.9 2529.6,1293.8 2518.4,1288.2" fill="url(#g943)" /><polygon points="2528.4,1301.9 2539.6,1307.5 2539.6,1299.4 2528.4,1293.8" fill="url(#g944)" /><polygon points="2538.4,1307.5 2549.6,1313 2549.6,1305 2538.4,1299.4" fill="url(#g945)" /><polygon points="2548.4,1313 2559.6,1318.6 2559.6,1311.1 2548.4,1305" fill="url(#g946)" /><polygon points="2558.4,1318.6 2569.6,1324.2 2569.6,1317.3 2558.4,1311.1" fill="url(#g947)" /><polygon points="2568.4,1324.2 2579.6,1329.9 2579.6,1323.4 2568.4,1317.3" fill="url(#g948)" /><polygon points="2578.4,1329.9 2589.6,1335.5 2589.6,1329.6 2578.4,1323.4" fill="url(#g949)" /><polygon points="2588.4,1335.5 2599.6,1341.2 2599.6,1335.9 2588.4,1329.6" fill="url(#g950)" /><polygon points="2598.4,1341.2 2609.6,1346.9 2609.6,1342.1 2598.4,1335.9" fill="url(#g951)" /><polygon points="2608.4,1346.9 2619.6,1352.6 2619.6,1348.4 2608.4,1342.1" fill="url(#g952)" /><polygon points="2618.4,1352.6 2629.6,1358.4 2629.6,1354.7 2618.4,1348.4" fill="url(#g953)" /><polygon points="2628.4,1358.4 2639.6,1364.2 2639.6,1361 2628.4,1354.7" fill="url(#g954)" /><polygon points="2638.4,1364.2 2649.6,1370 2649.6,1367.4 2638.4,1361" fill="url(#g955)" /><polygon points="2648.4,1370 2659.6,1375.8 2659.6,1373.8 2648.4,1367.4" fill="url(#g956)" /><polygon points="2658.4,1375.8 2669.6,1381.7 2669.6,1380.2 2658.4,1373.8" fill="url(#g957)" /><polygon points="2668.4,1381.7 2679.6,1387.5 2679.6,1386.5 2668.4,1380.2" fill="url(#g958)" /><polygon points="668.4,600.4 679.6,602.9 679.6,604.9 668.4,602.4" fill="url(#g959)" /><polygon points="678.4,602.9 689.6,605.3 689.6,607.5 678.4,604.9" fill="url(#g960)" /><polygon points="688.4,605.3 699.6,607.8 699.6,610.1 688.4,607.5" fill="url(#g961)" /><polygon points="698.4,607.8 709.6,610.3 709.6,612.7 698.4,610.1" fill="url(#g962)" /><polygon points="708.4,610.3 719.6,612.8 719.6,615.3 708.4,612.7" fill="url(#g963)" /><polygon points="718.4,612.8 729.6,615.4 729.6,617.9 718.4,615.3" fill="url(#g964)" /><polygon points="728.4,615.4 739.6,617.9 739.6,620.5 728.4,617.9" fill="url(#g965)" /><polygon points="738.4,617.9 749.6,620.4 749.6,623.1 738.4,620.5" fill="url(#g966)" /><polygon points="748.4,620.4 759.6,623 759.6,625.8 748.4,623.1" fill="url(#g967)" /><polygon points="758.4,623 769.6,625.5 769.6,628.4 758.4,625.8" fill="url(#g968)" /><polygon points="768.4,625.5 779.6,628.1 779.6,631.1 768.4,628.4" fill="url(#g969)" /><polygon points="778.4,628.1 789.6,630.7 789.6,633.7 778.4,631.1" fill="url(#g970)" /><polygon points="788.4,630.7 799.6,633.3 799.6,636.4 788.4,633.7" fill="url(#g971)" /><polygon points="798.4,633.3 809.6,635.9 809.6,639.1 798.4,636.4" fill="url(#g972)" /><polygon points="808.4,635.9 819.6,638.5 819.6,641.8 808.4,639.1" fill="url(#g973)" /><polygon points="818.4,638.5 829.6,641.1 829.6,644.5 818.4,641.8" fill="url(#g974)" /><polygon points="828.4,641.1 839.6,643.7 839.6,647.2 828.4,644.5" fill="url(#g975)" /><polygon points="838.4,643.7 849.6,646.4 849.6,649.9 838.4,647.2" fill="url(#g976)" /><polygon points="848.4,646.4 859.6,649 859.6,652.7 848.4,649.9" fill="url(#g977)" /><polygon points="858.4,649 869.6,651.7 869.6,655.4 858.4,652.7" fill="url(#g978)" /><polygon points="868.4,651.7 879.6,654.4 879.6,658.2 868.4,655.4" fill="url(#g979)" /><polygon points="878.4,654.4 889.6,657 889.6,661 878.4,658.2" fill="url(#g980)" /><polygon points="888.4,657 899.6,659.7 899.6,663.7 888.4,661" fill="url(#g981)" /><polygon points="898.4,659.7 909.6,662.4 909.6,666.5 898.4,663.7" fill="url(#g982)" /><polygon points="908.4,662.4 919.6,665.2 919.6,669.3 908.4,666.5" fill="url(#g983)" /><polygon points="918.4,665.2 929.6,667.9 929.6,672 918.4,669.3" fill="url(#g984)" /><polygon points="928.4,667.9 939.6,670.6 939.6,674.8 928.4,672" fill="url(#g985)" /><polygon points="938.4,670.6 949.6,673.4 949.6,677.6 938.4,674.8" fill="url(#g986)" /><polygon points="948.4,673.4 959.6,676.1 959.6,680.4 948.4,677.6" fill="url(#g987)" /><polygon points="958.4,676.1 969.6,678.9 969.6,683.3 958.4,680.4" fill="url(#g988)" /><polygon points="968.4,678.9 979.6,681.7 979.6,686.1 968.4,683.3" fill="url(#g989)" /><polygon points="978.4,681.7 989.6,684.5 989.6,688.9 978.4,686.1" fill="url(#g990)" /><polygon points="988.4,684.5 999.6,687.3 999.6,691.8 988.4,688.9" fill="url(#g991)" /><polygon points="998.4,687.3 1009.6,690.1 1009.6,694.7 998.4,691.8" fill="url(#g992)" /><polygon points="1008.4,690.1 1019.6,693 1019.6,697.5 1008.4,694.7" fill="url(#g993)" /><polygon points="1018.4,693 1029.6,695.8 1029.6,700.4 1018.4,697.5" fill="url(#g994)" /><polygon points="1028.4,695.8 1039.6,698.7 1039.6,703.3 1028.4,700.4" fill="url(#g995)" /><polygon points="1038.4,698.7 1049.6,701.5 1049.6,706.3 1038.4,703.3" fill="url(#g996)" /><polygon points="1048.4,701.5 1059.6,704.4 1059.6,709.2 1048.4,706.3" fill="url(#g997)" /><polygon points="1058.4,704.4 1069.6,707.3 1069.6,712.1 1058.4,709.2" fill="url(#g998)" /><polygon points="1068.4,707.3 1079.6,710.2 1079.6,715.1 1068.4,712.1" fill="url(#g999)" /><polygon points="1078.4,710.2 1089.6,713.1 1089.6,718.1 1078.4,715.1" fill="url(#g1000)" /><polygon points="1088.4,713.1 1099.6,716 1099.6,721 1088.4,718.1" fill="url(#g1001)" /><polygon points="1098.4,716 1109.6,719 1109.6,724 1098.4,721" fill="url(#g1002)" /><polygon points="1108.4,719 1119.6,721.9 1119.6,727 1108.4,724" fill="url(#g1003)" /><polygon points="1118.4,721.9 1129.6,724.9 1129.6,730 1118.4,727" fill="url(#g1004)" /><polygon points="1128.4,724.9 1139.6,727.9 1139.6,733.1 1128.4,730" fill="url(#g1005)" /><polygon points="1138.4,727.9 1149.6,730.9 1149.6,736.1 1138.4,733.1" fill="url(#g1006)" /><polygon points="1148.4,730.9 1159.6,733.9 1159.6,739.2 1148.4,736.1" fill="url(#g1007)" /><polygon points="1158.4,733.9 1169.6,736.9 1169.6,742.2 1158.4,739.2" fill="url(#g1008)" /><polygon points="1168.4,736.9 1179.6,739.9 1179.6,745.3 1168.4,742.2" fill="url(#g1009)" /><polygon points="1178.4,739.9 1189.6,743 1189.6,748.4 1178.4,745.3" fill="url(#g1010)" /><polygon points="1188.4,743 1199.6,746 1199.6,751.5 1188.4,748.4" fill="url(#g1011)" /><polygon points="1198.4,746 1209.6,749.1 1209.6,754.6 1198.4,751.5" fill="url(#g1012)" /><polygon points="1208.4,749.1 1219.6,752.2 1219.6,757.8 1208.4,754.6" fill="url(#g1013)" /><polygon points="1218.4,752.2 1229.6,755.3 1229.6,760.9 1218.4,757.8" fill="url(#g1014)" /><polygon points="1228.4,755.3 1239.6,758.4 1239.6,764.1 1228.4,760.9" fill="url(#g1015)" /><polygon points="1238.4,758.4 1249.6,761.5 1249.6,767.3 1238.4,764.1" fill="url(#g1016)" /><polygon points="1248.4,761.5 1259.6,764.7 1259.6,770.5 1248.4,767.3" fill="url(#g1017)" /><polygon points="1258.4,764.7 1269.6,767.8 1269.6,773.7 1258.4,770.5" fill="url(#g1018)" /><polygon points="1268.4,767.8 1279.6,771 1279.6,776.9 1268.4,773.7" fill="url(#g1019)" /><polygon points="1278.4,771 1289.6,774.2 1289.6,780.1 1278.4,776.9" fill="url(#g1020)" /><polygon points="1288.4,774.2 1299.6,777.3 1299.6,783.3 1288.4,780.1" fill="url(#g1021)" /><polygon points="1298.4,777.3 1309.6,780.6 1309.6,786.6 1298.4,783.3" fill="url(#g1022)" /><polygon points="1308.4,780.6 1319.6,783.8 1319.6,789.9 1308.4,786.6" fill="url(#g1023)" /><polygon points="1318.4,783.8 1329.6,787 1329.6,793.2 1318.4,789.9" fill="url(#g1024)" /><polygon points="1328.4,787 1339.6,790.3 1339.6,796.6 1328.4,793.2" fill="url(#g1025)" /><polygon points="1338.4,790.3 1349.6,793.5 1349.6,799.9 1338.4,796.6" fill="url(#g1026)" /><polygon points="1348.4,793.5 1359.6,796.8 1359.6,803.3 1348.4,799.9" fill="url(#g1027)" /><polygon points="1358.4,796.8 1369.6,800.1 1369.6,806.7 1358.4,803.3" fill="url(#g1028)" /><polygon points="1368.4,800.1 1379.6,803.4 1379.6,810 1368.4,806.7" fill="url(#g1029)" /><polygon points="1378.4,803.4 1389.6,806.7 1389.6,813.5 1378.4,810" fill="url(#g1030)" /><polygon points="1388.4,806.7 1399.6,810.1 1399.6,816.9 1388.4,813.5" fill="url(#g1031)" /><polygon points="1398.4,810.1 1409.6,813.4 1409.6,820.3 1398.4,816.9" fill="url(#g1032)" /><polygon points="1408.4,813.4 1419.6,816.8 1419.6,823.8 1408.4,820.3" fill="url(#g1033)" /><polygon points="1418.4,816.8 1429.6,820.2 1429.6,827.2 1418.4,823.8" fill="url(#g1034)" /><polygon points="1428.4,820.2 1439.6,823.6 1439.6,830.7 1428.4,827.2" fill="url(#g1035)" /><polygon points="1438.4,823.6 1449.6,827 1449.6,834.2 1438.4,830.7" fill="url(#g1036)" /><polygon points="1448.4,827 1459.6,830.4 1459.6,837.7 1448.4,834.2" fill="url(#g1037)" /><polygon points="1458.4,830.4 1469.6,833.9 1469.6,841.2 1458.4,837.7" fill="url(#g1038)" /><polygon points="1468.4,833.9 1479.6,837.3 1479.6,844.8 1468.4,841.2" fill="url(#g1039)" /><polygon points="1478.4,837.3 1489.6,840.8 1489.6,848.3 1478.4,844.8" fill="url(#g1040)" /><polygon points="1488.4,840.8 1499.6,844.3 1499.6,851.9 1488.4,848.3" fill="url(#g1041)" /><polygon points="1498.4,844.3 1509.6,847.8 1509.6,855.5 1498.4,851.9" fill="url(#g1042)" /><polygon points="1508.4,847.8 1519.6,851.3 1519.6,859.1 1508.4,855.5" fill="url(#g1043)" /><polygon points="1518.4,851.3 1529.6,854.9 1529.6,862.7 1518.4,859.1" fill="url(#g1044)" /><polygon points="1528.4,854.9 1539.6,858.4 1539.6,866.3 1528.4,862.7" fill="url(#g1045)" /><polygon points="1538.4,858.4 1549.6,862 1549.6,870 1538.4,866.3" fill="url(#g1046)" /><polygon points="1548.4,862 1559.6,865.6 1559.6,873.6 1548.4,870" fill="url(#g1047)" /><polygon points="1558.4,865.6 1569.6,869.2 1569.6,877.3 1558.4,873.6" fill="url(#g1048)" /><polygon points="1568.4,869.2 1579.6,872.8 1579.6,881 1568.4,877.3" fill="url(#g1049)" /><polygon points="1578.4,872.8 1589.6,876.4 1589.6,884.7 1578.4,881" fill="url(#g1050)" /><polygon points="1588.4,876.4 1599.6,880.1 1599.6,888.5 1588.4,884.7" fill="url(#g1051)" /><polygon points="1598.4,880.1 1609.6,883.7 1609.6,892.2 1598.4,888.5" fill="url(#g1052)" /><polygon points="1608.4,883.7 1619.6,887.4 1619.6,896 1608.4,892.2" fill="url(#g1053)" /><polygon points="1618.4,887.4 1629.6,891.1 1629.6,899.8 1618.4,896" fill="url(#g1054)" /><polygon points="1628.4,891.1 1639.6,894.8 1639.6,903.6 1628.4,899.8" fill="url(#g1055)" /><polygon points="1638.4,894.8 1649.6,898.6 1649.6,907.4 1638.4,903.6" fill="url(#g1056)" /><polygon points="1648.4,898.6 1659.6,902.3 1659.6,911.2 1648.4,907.4" fill="url(#g1057)" /><polygon points="1658.4,902.3 1669.6,906.1 1669.6,915.1 1658.4,911.2" fill="url(#g1058)" /><polygon points="1668.4,906.1 1679.6,909.9 1679.6,918.9 1668.4,915.1" fill="url(#g1059)" /><polygon points="1678.4,909.9 1689.6,913.7 1689.6,922.8 1678.4,918.9" fill="url(#g1060)" /><polygon points="1688.4,913.7 1699.6,917.5 1699.6,926.7 1688.4,922.8" fill="url(#g1061)" /><polygon points="1698.4,917.5 1709.6,921.3 1709.6,930.6 1698.4,926.7" fill="url(#g1062)" /><polygon points="1708.4,921.3 1719.6,925.2 1719.6,934.5 1708.4,930.6" fill="url(#g1063)" /><polygon points="1718.4,925.2 1729.6,929.1 1729.6,938.5 1718.4,934.5" fill="url(#g1064)" /><polygon points="1728.4,929.1 1739.6,933 1739.6,942.5 1728.4,938.5" fill="url(#g1065)" /><polygon points="1738.4,933 1749.6,936.9 1749.6,946.5 1738.4,942.5" fill="url(#g1066)" /><polygon points="1748.4,936.9 1759.6,940.8 1759.6,950.5 1748.4,946.5" fill="url(#g1067)" /><polygon points="1758.4,940.8 1769.6,944.7 1769.6,954.5 1758.4,950.5" fill="url(#g1068)" /><polygon points="1768.4,944.7 1779.6,948.7 1779.6,958.5 1768.4,954.5" fill="url(#g1069)" /><polygon points="1778.4,948.7 1789.6,952.7 1789.6,962.6 1778.4,958.5" fill="url(#g1070)" /><polygon points="1788.4,952.7 1799.6,956.7 1799.6,966.6 1788.4,962.6" fill="url(#g1071)" /><polygon points="1798.4,956.7 1809.6,960.7 1809.6,970.7 1798.4,966.6" fill="url(#g1072)" /><polygon points="1808.4,960.7 1819.6,964.7 1819.6,974.7 1808.4,970.7" fill="url(#g1073)" /><polygon points="1818.4,964.7 1829.6,968.7 1829.6,978.7 1818.4,974.7" fill="url(#g1074)" /><polygon points="1828.4,968.7 1839.6,972.8 1839.6,982.8 1828.4,978.7" fill="url(#g1075)" /><polygon points="1838.4,972.8 1849.6,976.9 1849.6,986.9 1838.4,982.8" fill="url(#g1076)" /><polygon points="1848.4,976.9 1859.6,981 1859.6,991 1848.4,986.9" fill="url(#g1077)" /><polygon points="1858.4,981 1869.6,985.1 1869.6,995.1 1858.4,991" fill="url(#g1078)" /><polygon points="1868.4,985.1 1879.6,989.3 1879.6,999.3 1868.4,995.1" fill="url(#g1079)" /><polygon points="1878.4,989.3 1889.6,993.4 1889.6,1003.4 1878.4,999.3" fill="url(#g1080)" /><polygon points="1888.4,993.4 1899.6,997.6 1899.6,1007.6 1888.4,1003.4" fill="url(#g1081)" /><polygon points="1898.4,997.6 1909.6,1001.8 1909.6,1011.8 1898.4,1007.6" fill="url(#g1082)" /><polygon points="1908.4,1001.8 1919.6,1006 1919.6,1016 1908.4,1011.8" fill="url(#g1083)" /><polygon points="1918.4,1006 1929.6,1010.2 1929.6,1020.2 1918.4,1016" fill="url(#g1084)" /><polygon points="1928.4,1010.2 1939.6,1014.5 1939.6,1024.5 1928.4,1020.2" fill="url(#g1085)" /><polygon points="1938.4,1014.5 1949.6,1018.8 1949.6,1028.8 1938.4,1024.5" fill="url(#g1086)" /><polygon points="1948.4,1018.8 1959.6,1023.1 1959.6,1033.1 1948.4,1028.8" fill="url(#g1087)" /><polygon points="1958.4,1023.1 1969.6,1027.4 1969.6,1037.4 1958.4,1033.1" fill="url(#g1088)" /><polygon points="1968.4,1027.4 1979.6,1031.7 1979.6,1041.7 1968.4,1037.4" fill="url(#g1089)" /><polygon points="1978.4,1031.7 1989.6,1036.1 1989.6,1046.1 1978.4,1041.7" fill="url(#g1090)" /><polygon points="1988.4,1036.1 1999.6,1040.4 1999.6,1050.4 1988.4,1046.1" fill="url(#g1091)" /><polygon points="1998.4,1040.4 2009.6,1044.8 2009.6,1054.8 1998.4,1050.4" fill="url(#g1092)" /><polygon points="2008.4,1044.8 2019.6,1049.2 2019.6,1059.2 2008.4,1054.8" fill="url(#g1093)" /><polygon points="2018.4,1049.2 2029.6,1053.7 2029.6,1063.7 2018.4,1059.2" fill="url(#g1094)" /><polygon points="2028.4,1053.7 2039.6,1058.1 2039.6,1068.1 2028.4,1063.7" fill="url(#g1095)" /><polygon points="2038.4,1058.1 2049.6,1062.6 2049.6,1072.6 2038.4,1068.1" fill="url(#g1096)" /><polygon points="2048.4,1062.6 2059.6,1067.1 2059.6,1077.1 2048.4,1072.6" fill="url(#g1097)" /><polygon points="2058.4,1067.1 2069.6,1071.6 2069.6,1081.6 2058.4,1077.1" fill="url(#g1098)" /><polygon points="2068.4,1071.6 2079.6,1076.1 2079.6,1086.1 2068.4,1081.6" fill="url(#g1099)" /><polygon points="2078.4,1076.1 2089.6,1080.6 2089.6,1090.6 2078.4,1086.1" fill="url(#g1100)" /><polygon points="2088.4,1080.6 2099.6,1085.2 2099.6,1095.2 2088.4,1090.6" fill="url(#g1101)" /><polygon points="2098.4,1085.2 2109.6,1089.8 2109.6,1099.8 2098.4,1095.2" fill="url(#g1102)" /><polygon points="2108.4,1089.8 2119.6,1094.4 2119.6,1104.4 2108.4,1099.8" fill="url(#g1103)" /><polygon points="2118.4,1094.4 2129.6,1099 2129.6,1109 2118.4,1104.4" fill="url(#g1104)" /><polygon points="2128.4,1099 2139.6,1103.7 2139.6,1113.7 2128.4,1109" fill="url(#g1105)" /><polygon points="2138.4,1103.7 2149.6,1108.4 2149.6,1118.4 2138.4,1113.7" fill="url(#g1106)" /><polygon points="2148.4,1108.4 2159.6,1113 2159.6,1123 2148.4,1118.4" fill="url(#g1107)" /><polygon points="2158.4,1113 2169.6,1117.8 2169.6,1127.8 2158.4,1123" fill="url(#g1108)" /><polygon points="2168.4,1117.8 2179.6,1122.5 2179.6,1132.5 2168.4,1127.8" fill="url(#g1109)" /><polygon points="2178.4,1122.5 2189.6,1127.2 2189.6,1137.2 2178.4,1132.5" fill="url(#g1110)" /><polygon points="2188.4,1127.2 2199.6,1132 2199.6,1142 2188.4,1137.2" fill="url(#g1111)" /><polygon points="2198.4,1132 2209.6,1136.8 2209.6,1146.8 2198.4,1142" fill="url(#g1112)" /><polygon points="2208.4,1136.8 2219.6,1141.6 2219.6,1151.5 2208.4,1146.8" fill="url(#g1113)" /><polygon points="2218.4,1141.6 2229.6,1146.5 2229.6,1156.3 2218.4,1151.5" fill="url(#g1114)" /><polygon points="2228.4,1146.5 2239.6,1151.3 2239.6,1161.1 2228.4,1156.3" fill="url(#g1115)" /><polygon points="2238.4,1151.3 2249.6,1156.2 2249.6,1165.9 2238.4,1161.1" fill="url(#g1116)" /><polygon points="2248.4,1156.2 2259.6,1161.1 2259.6,1170.8 2248.4,1165.9" fill="url(#g1117)" /><polygon points="2258.4,1161.1 2269.6,1166 2269.6,1175.7 2258.4,1170.8" fill="url(#g1118)" /><polygon points="2268.4,1166 2279.6,1171 2279.6,1180.5 2268.4,1175.7" fill="url(#g1119)" /><polygon points="2278.4,1171 2289.6,1176 2289.6,1185.5 2278.4,1180.5" fill="url(#g1120)" /><polygon points="2288.4,1176 2299.6,1181 2299.6,1190.4 2288.4,1185.5" fill="url(#g1121)" /><polygon points="2298.4,1181 2309.6,1186 2309.6,1195.3 2298.4,1190.4" fill="url(#g1122)" /><polygon points="2308.4,1186 2319.6,1191 2319.6,1200.3 2308.4,1195.3" fill="url(#g1123)" /><polygon points="2318.4,1191 2329.6,1196.1 2329.6,1205.3 2318.4,1200.3" fill="url(#g1124)" /><polygon points="2328.4,1196.1 2339.6,1201.1 2339.6,1210.3 2328.4,1205.3" fill="url(#g1125)" /><polygon points="2338.4,1201.1 2349.6,1206.2 2349.6,1215.4 2338.4,1210.3" fill="url(#g1126)" /><polygon points="2348.4,1206.2 2359.6,1211.4 2359.6,1220.4 2348.4,1215.4" fill="url(#g1127)" /><polygon points="2358.4,1211.4 2369.6,1216.5 2369.6,1225.5 2358.4,1220.4" fill="url(#g1128)" /><polygon points="2368.4,1216.5 2379.6,1221.7 2379.6,1230.6 2368.4,1225.5" fill="url(#g1129)" /><polygon points="2378.4,1221.7 2389.6,1226.9 2389.6,1235.8 2378.4,1230.6" fill="url(#g1130)" /><polygon points="2388.4,1226.9 2399.6,1232.1 2399.6,1240.9 2388.4,1235.8" fill="url(#g1131)" /><polygon points="2398.4,1232.1 2409.6,1237.3 2409.6,1246.1 2398.4,1240.9" fill="url(#g1132)" /><polygon points="2408.4,1237.3 2419.6,1242.6 2419.6,1251.3 2408.4,1246.1" fill="url(#g1133)" /><polygon points="2418.4,1242.6 2429.6,1247.8 2429.6,1256.5 2418.4,1251.3" fill="url(#g1134)" /><polygon points="2428.4,1247.8 2439.6,1253.2 2439.6,1261.8 2428.4,1256.5" fill="url(#g1135)" /><polygon points="2438.4,1253.2 2449.6,1258.5 2449.6,1267.1 2438.4,1261.8" fill="url(#g1136)" /><polygon points="2448.4,1258.5 2459.6,1263.8 2459.6,1272.4 2448.4,1267.1" fill="url(#g1137)" /><polygon points="2458.4,1263.8 2469.6,1269.2 2469.6,1277.7 2458.4,1272.4" fill="url(#g1138)" /><polygon points="2468.4,1269.2 2479.6,1274.6 2479.6,1283 2468.4,1277.7" fill="url(#g1139)" /><polygon points="2478.4,1274.6 2489.6,1280 2489.6,1288.4 2478.4,1283" fill="url(#g1140)" /><polygon points="2488.4,1280 2499.6,1285.5 2499.6,1293.8 2488.4,1288.4" fill="url(#g1141)" /><polygon points="2498.4,1285.5 2509.6,1290.9 2509.6,1299.2 2498.4,1293.8" fill="url(#g1142)" /><polygon points="2508.4,1290.9 2519.6,1296.4 2519.6,1304.6 2508.4,1299.2" fill="url(#g1143)" /><polygon points="2518.4,1296.4 2529.6,1301.9 2529.6,1310.1 2518.4,1304.6" fill="url(#g1144)" /><polygon points="2528.4,1301.9 2539.6,1307.5 2539.6,1315.5 2528.4,1310.1" fill="url(#g1145)" /><polygon points="2538.4,1307.5 2549.6,1313 2549.6,1321 2538.4,1315.5" fill="url(#g1146)" /><polygon points="2548.4,1313 2559.6,1318.6 2559.6,1326.1 2548.4,1321" fill="url(#g1147)" /><polygon points="2558.4,1318.6 2569.6,1324.2 2569.6,1331.2 2558.4,1326.1" fill="url(#g1148)" /><polygon points="2568.4,1324.2 2579.6,1329.9 2579.6,1336.3 2568.4,1331.2" fill="url(#g1149)" /><polygon points="2578.4,1329.9 2589.6,1335.5 2589.6,1341.4 2578.4,1336.3" fill="url(#g1150)" /><polygon points="2588.4,1335.5 2599.6,1341.2 2599.6,1346.5 2588.4,1341.4" fill="url(#g1151)" /><polygon points="2598.4,1341.2 2609.6,1346.9 2609.6,1351.7 2598.4,1346.5" fill="url(#g1152)" /><polygon points="2608.4,1346.9 2619.6,1352.6 2619.6,1356.9 2608.4,1351.7" fill="url(#g1153)" /><polygon points="2618.4,1352.6 2629.6,1358.4 2629.6,1362.1 2618.4,1356.9" fill="url(#g1154)" /><polygon points="2628.4,1358.4 2639.6,1364.2 2639.6,1367.3 2628.4,1362.1" fill="url(#g1155)" /><polygon points="2638.4,1364.2 2649.6,1370 2649.6,1372.6 2638.4,1367.3" fill="url(#g1156)" /><polygon points="2648.4,1370 2659.6,1375.8 2659.6,1377.8 2648.4,1372.6" fill="url(#g1157)" /><polygon points="2658.4,1375.8 2669.6,1381.7 2669.6,1383.1 2658.4,1377.8" fill="url(#g1158)" /><polygon points="2668.4,1381.7 2679.6,1387.5 2679.6,1388.5 2668.4,1383.1" fill="url(#g1159)" /><polyline points="669,600.4 679,602.9 689,605.3 699,607.8 709,610.3 719,612.8 729,615.4 739,617.9 749,620.4 759,623 769,625.5 779,628.1 789,630.7 799,633.3 809,635.9 819,638.5 829,641.1 839,643.7 849,646.4 859,649 869,651.7 879,654.4 889,657 899,659.7 909,662.4 919,665.2 929,667.9 939,670.6 949,673.4 959,676.1 969,678.9 979,681.7 989,684.5 999,687.3 1009,690.1 1019,693 1029,695.8 1039,698.7 1049,701.5 1059,704.4 1069,707.3 1079,710.2 1089,713.1 1099,716 1109,719 1119,721.9 1129,724.9 1139,727.9 1149,730.9 1159,733.9 1169,736.9 1179,739.9 1189,743 1199,746 1209,749.1 1219,752.2 1229,755.3 1239,758.4 1249,761.5 1259,764.7 1269,767.8 1279,771 1289,774.2 1299,777.3 1309,780.6 1319,783.8 1329,787 1339,790.3 1349,793.5 1359,796.8 1369,800.1 1379,803.4 1389,806.7 1399,810.1 1409,813.4 1419,816.8 1429,820.2 1439,823.6 1449,827 1459,830.4 1469,833.9 1479,837.3 1489,840.8 1499,844.3 1509,847.8 1519,851.3 1529,854.9 1539,858.4 1549,862 1559,865.6 1569,869.2 1579,872.8 1589,876.4 1599,880.1 1609,883.7 1619,887.4 1629,891.1 1639,894.8 1649,898.6 1659,902.3 1669,906.1 1679,909.9 1689,913.7 1699,917.5 1709,921.3 1719,925.2 1729,929.1 1739,933 1749,936.9 1759,940.8 1769,944.7 1779,948.7 1789,952.7 1799,956.7 1809,960.7 1819,964.7 1829,968.7 1839,972.8 1849,976.9 1859,981 1869,985.1 1879,989.3 1889,993.4 1899,997.6 1909,1001.8 1919,1006 1929,1010.2 1939,1014.5 1949,1018.8 1959,1023.1 1969,1027.4 1979,1031.7 1989,1036.1 1999,1040.4 2009,1044.8 2019,1049.2 2029,1053.7 2039,1058.1 2049,1062.6 2059,1067.1 2069,1071.6 2079,1076.1 2089,1080.6 2099,1085.2 2109,1089.8 2119,1094.4 2129,1099 2139,1103.7 2149,1108.4 2159,1113 2169,1117.8 2179,1122.5 2189,1127.2 2199,1132 2209,1136.8 2219,1141.6 2229,1146.5 2239,1151.3 2249,1156.2 2259,1161.1 2269,1166 2279,1171 2289,1176 2299,1181 2309,1186 2319,1191 2329,1196.1 2339,1201.1 2349,1206.2 2359,1211.4 2369,1216.5 2379,1221.7 2389,1226.9 2399,1232.1 2409,1237.3 2419,1242.6 2429,1247.8 2439,1253.2 2449,1258.5 2459,1263.8 2469,1269.2 2479,1274.6 2489,1280 2499,1285.5 2509,1290.9 2519,1296.4 2529,1301.9 2539,1307.5 2549,1313 2559,1318.6 2569,1324.2 2579,1329.9 2589,1335.5 2599,1341.2 2609,1346.9 2619,1352.6 2629,1358.4 2639,1364.2 2649,1370 2659,1375.8 2669,1381.7 2679,1387.5" fill="none" stroke="#6a8a20" stroke-width="1.2" stroke-linejoin="round" stroke-linecap="round" opacity="0.6" stroke-dasharray="1 3"/><polyline points="2677.6,1247.6 2684,1285 2689.5,1319 2688,1360 2687.5,1382.5 2673.7,1394 2594,1416 2495,1420" fill="none" stroke="#1d5fae" stroke-width="3.2" stroke-linejoin="round" stroke-linecap="round" opacity="0.75"/><polyline points="2677.6,1247.6 2684,1285 2689.5,1319 2688,1360 2687.5,1382.5 2673.7,1394 2594,1416 2495,1420" fill="none" stroke="#3a9e30" stroke-width="1.4" stroke-linejoin="round" stroke-linecap="round" opacity="0.8"/></g></svg><svg class="abs" style="left:0;top:0" width="2880" height="230" viewBox="0 0 2880 230" xmlns="http://www.w3.org/2000/svg">
<defs>
 <radialGradient id="sph" cx="0.45" cy="0.25" r="0.8">
  <stop offset="0" stop-color="#e8fbff"/><stop offset="0.25" stop-color="#3ad8ff"/><stop offset="0.7" stop-color="#1878f8"/><stop offset="1" stop-color="#1a40f0"/>
 </radialGradient>
 <radialGradient id="sph2" cx="0.5" cy="0.2" r="0.85">
  <stop offset="0" stop-color="#b8f4ff"/><stop offset="0.3" stop-color="#28c8ff"/><stop offset="0.75" stop-color="#1a70f8"/><stop offset="1" stop-color="#1f3ee8"/>
 </radialGradient>
 <linearGradient id="lensV" x1="0" y1="0" x2="1" y2="0">
  <stop offset="0" stop-color="#c8ecff"/><stop offset="0.35" stop-color="#5ab0e8"/><stop offset="0.75" stop-color="#2a7cc4"/><stop offset="1" stop-color="#6ab8e8"/>
 </linearGradient>
 <linearGradient id="ellH" x1="0" y1="0" x2="0" y2="1">
  <stop offset="0" stop-color="#9ae4ff"/><stop offset="0.4" stop-color="#4ca4e4"/><stop offset="1" stop-color="#2a6eb0"/>
 </linearGradient>
 <linearGradient id="ell2" x1="0" y1="0" x2="0" y2="1">
  <stop offset="0" stop-color="#3a88cc"/><stop offset="0.5" stop-color="#4ea0e0"/><stop offset="1" stop-color="#3a86c8"/>
 </linearGradient>
 <linearGradient id="triG" x1="0" y1="0" x2="0" y2="1">
  <stop offset="0" stop-color="#2a6aa8"/><stop offset="1" stop-color="#0e4a86"/>
 </linearGradient>
 <linearGradient id="fire" x1="0" y1="0" x2="0" y2="1">
  <stop offset="0" stop-color="#6a8a70"/><stop offset="0.3" stop-color="#ff5a10"/><stop offset="0.6" stop-color="#ffb020"/><stop offset="0.85" stop-color="#f8f8e8"/><stop offset="1" stop-color="#e8e8d0"/>
 </linearGradient>
 <linearGradient id="stripes" x1="0" y1="0" x2="0" y2="1">
  <stop offset="0" stop-color="#bbb"/><stop offset="0.12" stop-color="#333"/><stop offset="0.2" stop-color="#eee"/><stop offset="0.3" stop-color="#222"/><stop offset="0.38" stop-color="#f4f4f4"/><stop offset="0.48" stop-color="#111"/><stop offset="0.56" stop-color="#e8e8e8"/><stop offset="0.66" stop-color="#1a1a1a"/><stop offset="0.74" stop-color="#ddd"/><stop offset="0.84" stop-color="#222"/><stop offset="0.92" stop-color="#aaa"/><stop offset="1" stop-color="#666"/>
 </linearGradient>
 <linearGradient id="rainb" x1="0" y1="0" x2="0" y2="1">
  <stop offset="0" stop-color="#ff4060"/><stop offset="0.15" stop-color="#e040c0"/><stop offset="0.25" stop-color="#2080ff"/><stop offset="0.35" stop-color="#20d0f0"/><stop offset="0.5" stop-color="#f0f840"/><stop offset="0.62" stop-color="#40e060"/><stop offset="0.75" stop-color="#2090ff"/><stop offset="0.85" stop-color="#c040d0"/><stop offset="1" stop-color="#ff3050"/>
 </linearGradient>
</defs>

<!-- ===== main toolbar ===== -->
<!-- surfboard + hand -->
<ellipse cx="32.7" cy="73" rx="11.8" ry="26.3" fill="#fbfbfd" stroke="#8a8a8a" stroke-width="1.6"/>
<ellipse cx="31" cy="67" rx="8" ry="10" fill="#f6c8d0" opacity="0.8"/>
<path d="M27 62 L27 80 L24 78 L22 80 L26 86 L30 93 L42 93 L43 82 L42 74 L38 73 L36 72 L33 72 L31 71 L30 62 Z" fill="#fff" stroke="#333" stroke-width="1.3"/>
<!-- folder -->
<path d="M78 62 L96 55 L108 62 L110 84 L98 92 L81 86 Z" fill="#f0eec8" stroke="#7a7a6a" stroke-width="1.4"/>
<path d="M80 64 L96 70 L100 92 L82 86 Z" fill="#f8f088" stroke="#6e6e5e" stroke-width="1.4"/>
<path d="M96 70 L108 64 L110 84 L100 91 Z" fill="#e6e4b0" stroke="#6e6e5e" stroke-width="1.2"/>
<!-- save/flame -->
<path d="M144 55 L168 64 L169 91 L145 82 Z" fill="url(#fire)" stroke="#444" stroke-width="2"/>
<path d="M145 82 L169 91 L174 89" fill="none" stroke="#222" stroke-width="2.5"/>
<!-- ruler -->
<rect x="230" y="77.5" width="34.5" height="12.5" fill="#f8d41c"/>
<rect x="231" y="90" width="36" height="3.5" fill="#9a9aa8" opacity="0.8"/>
<rect x="264.5" y="79" width="3" height="14" fill="#9a9aa8" opacity="0.7"/>
<line x1="231" y1="77.5" x2="264" y2="77.5" stroke="#111" stroke-width="2" stroke-dasharray="2 2"/>
<line x1="238.7" y1="77" x2="238.7" y2="80" stroke="#111" stroke-width="2"/>
<line x1="255" y1="77" x2="255" y2="80" stroke="#111" stroke-width="2"/>
<text x="236" y="88" font-family="Liberation Sans" font-size="8" fill="#a07030">1</text>
<text x="252.5" y="88" font-family="Liberation Sans" font-size="8" fill="#a07030">0</text>
<line x1="230" y1="60.8" x2="265.5" y2="60.8" stroke="#888" stroke-width="2"/>
<line x1="256.8" y1="54" x2="256.8" y2="73" stroke="#888" stroke-width="2"/>
<circle cx="256.8" cy="60.8" r="1.5" fill="#111"/>
<line x1="232" y1="73" x2="265" y2="73" stroke="#888" stroke-width="1.6" stroke-dasharray="2 2"/>
<line x1="265" y1="56" x2="265" y2="73" stroke="#888" stroke-width="1.6" stroke-dasharray="2 2"/>
<!-- design icon -->
<line x1="347" y1="57" x2="363" y2="89" stroke="#111" stroke-width="2"/>
<circle cx="347" cy="57" r="3.8" fill="#2040d8" stroke="#111" stroke-width="0.8"/>
<circle cx="355" cy="73" r="5.3" fill="#f01818" stroke="#111" stroke-width="0.8"/>
<circle cx="363" cy="89" r="4" fill="#18d038" stroke="#111" stroke-width="0.8"/>
<!-- 3d sphere -->
<circle cx="515.5" cy="72.5" r="16.5" fill="url(#sph2)"/>
<!-- plan -->
<path d="M665 55 L688.5 55 L697 63.5 L697 91 L665 91 Z" fill="#fff" stroke="#464c58" stroke-width="2"/>
<path d="M688.5 55 L688.5 63.5 L697 63.5" fill="#bff4ff" stroke="#1a6a80" stroke-width="2"/>
<line x1="666" y1="60.8" x2="680" y2="60.8" stroke="#666" stroke-width="1.6"/>
<line x1="666" y1="77" x2="680" y2="77" stroke="#666" stroke-width="1.6"/>
<path d="M680 60.8 L687 64 L691 69 L687 74 L680 77" fill="none" stroke="#777" stroke-width="1.3" stroke-dasharray="2 1.5"/>
<line x1="666" y1="69" x2="692" y2="69" stroke="#888" stroke-width="1.4" stroke-dasharray="1.6 2.4"/>
<line x1="668" y1="81" x2="692" y2="81" stroke="#999" stroke-width="1.4" stroke-dasharray="1.6 2.4"/>
<path d="M672 84 h3 v3 M678 84 h3 v3" stroke="#888" stroke-width="1.5" fill="none"/>
<!-- cnc -->
<defs><pattern id="chk" width="4" height="4" patternUnits="userSpaceOnUse"><rect width="2" height="2" fill="#333"/></pattern>
<pattern id="chk2" width="3" height="3" patternUnits="userSpaceOnUse"><rect width="1.5" height="1.5" fill="#222"/><rect x="1.5" y="1.5" width="1.5" height="1.5" fill="#222"/></pattern></defs>
<rect x="837" y="53" width="8" height="11.5" fill="#f4f4ff" stroke="#1a1a60" stroke-width="2"/>
<path d="M827 64.5 L855 64.5 L855 83 L852 87 L848 90.5 L834 90.5 L830 87 L827 83 Z" fill="url(#chk)" stroke="#1a1a60" stroke-width="2"/>
<path d="M828 80 L854 80 L854 84 L850 89 L832 89 L828 84 Z" fill="url(#chk2)"/>

<!-- ===== title bar sphere ===== -->
<circle cx="31.6" cy="130.9" r="13.6" fill="url(#sph)" stroke="#6a8cff" stroke-width="1.2" stroke-dasharray="2 2"/>
<!-- window buttons -->
<g>
<rect x="2764" y="121" width="30" height="26" fill="#f4f4f6" stroke="#888" stroke-width="1"/>
<path d="M2764.5 147 L2794 147 L2794 121" fill="none" stroke="#555" stroke-width="1.6"/>
<rect x="2770" y="139" width="12" height="3" fill="#111"/>
<rect x="2797" y="121" width="30" height="26" fill="#f4f4f6" stroke="#888" stroke-width="1"/>
<path d="M2797.5 147 L2827 147 L2827 121" fill="none" stroke="#555" stroke-width="1.6"/>
<rect x="2802.5" y="128.5" width="17" height="14" fill="none" stroke="#111" stroke-width="1.5"/>
<rect x="2802.5" y="127" width="17" height="3" fill="#111"/>
<rect x="2832" y="121" width="32" height="26" fill="#f4f4f6" stroke="#888" stroke-width="1"/>
<path d="M2832.5 147 L2864 147 L2864 121" fill="none" stroke="#555" stroke-width="1.6"/>
<path d="M2841 127 L2854 140 M2854 127 L2841 140" stroke="#111" stroke-width="2.2"/>
</g>

<!-- ===== icon toolbar ===== -->
<!-- magnifier -->
<circle cx="39.7" cy="182.5" r="9" fill="none" stroke="#5d6b70" stroke-width="3.2"/>
<line x1="46" y1="189.5" x2="54" y2="202" stroke="#5d6b70" stroke-width="5" stroke-linecap="round"/>
<!-- zoom rect -->
<rect x="81" y="167.5" width="24" height="17.5" fill="none" stroke="#6a767a" stroke-width="1.5"/>
<circle cx="104" cy="186.5" r="8.8" fill="none" stroke="#5d6b70" stroke-width="3.2"/>
<line x1="110" y1="193.5" x2="119.5" y2="207" stroke="#5d6b70" stroke-width="5" stroke-linecap="round"/>
<!-- hand -->
<path d="M161 203 C166 196 168 186 172 180 C176 174 180 172 182 173 M176 178 L184 171 M180 180 L187 173 M184 181 L191 174 C193 174 195 176 193 179 L184 190 L190 196 L198 197 L197 200 L176 210 M184 190 L182 184" fill="none" stroke="#555" stroke-width="1.3" stroke-linecap="round"/>
<!-- rotate -->
<path d="M226 186 L232 182 L246 198 L256 186 L262 194 L252 206" fill="none" stroke="#4e6268" stroke-width="2.6"/>
<path d="M224 188 C228 176 236 170 245 168" fill="none" stroke="#555" stroke-width="2.6"/>
<path d="M233 195 L248 185 L242 204 Z" fill="#3a8ae6"/>
<path d="M251 169 L260 180 L255 181 L258 200 L252 196 L250 180 L246 180 Z" fill="#3a8ae6"/>
<path d="M226 184 L240 196 L236 198 Z" fill="#2a70d0"/>
<!-- light + sphere (selected) -->
<path d="M301 170 L343 185 L344.5 208 L312 209 Z" fill="#f6f000"/>
<path d="M301 168 L306 167 L311 178 L306 180 Z" fill="#555"/>
<circle cx="327.6" cy="195" r="11.2" fill="url(#sph2)"/>

<!-- ellipses / shapes -->
<path d="M374 188 C380 175 418 172 427.5 187 C420 202 380 202 374 188 Z" fill="url(#ellH)"/>
<ellipse cx="462.5" cy="189" rx="26.5" ry="11.6" fill="url(#ell2)" stroke="#3a7ab8" stroke-width="0.8"/>
<path d="M498 184 C510 190 536 190 551.5 182.5 C546 192 534 194 524 194 C512 194 502 190 498 184 Z" fill="#3e8ed2" stroke="#2a6aa8" stroke-width="0.6"/>
<path d="M562 199.5 C570 192 580 180 587 177 C594 182 604 192 612 199.5 Z" fill="url(#triG)"/>
<path d="M623.5 199.5 C632 192 642 180 649 175.5 C656 182 666 192 674 199.5 Z" fill="#135290"/>
<path d="M685 179.5 C700 176 730 188 737 196 C725 200 692 190 685 179.5 Z" fill="#4ea4e6" stroke="#2a6aa8" stroke-width="0.6"/>
<path d="M747 196 C755 186 790 176 800 178 C795 188 760 200 747 196 Z" fill="#58b0ee" stroke="#2a6aa8" stroke-width="0.6"/>
<path d="M809 201 C820 192 840 180 851 174.5 C860 182 861 196 853 201 C840 204 820 203 809 201 Z" fill="#3e96de" stroke="#1e5a98" stroke-width="0.8"/>
<path d="M872 180 C878 172 895 176 905 184 C915 192 924 200 920 202 C905 205 880 202 873 192 C870 188 870 184 872 180 Z" fill="#3a90d8" stroke="#2a6aa8" stroke-width="0.6"/>
<path d="M958 162 C966 172 970 186 968 196 C966 206 962 212 958 215.4 C953 212 948 204 946.5 190 C946 178 950 170 958 162 Z" fill="url(#lensV)"/>

<!-- rotate triangle -->
<path d="M1018 200 A21 21 0 0 1 1058 178" fill="none" stroke="#4a90d0" stroke-width="2.6"/>
<path d="M1056 172 L1064 180 L1054 184 Z" fill="#4a90d0"/>
<path d="M1022 206 A21 21 0 0 0 1054 206" fill="none" stroke="#4a90d0" stroke-width="2.6"/>
<path d="M1012 199.5 L1038 177.5 L1062.5 199.5 Z" fill="#14508c"/>
<!-- lens + ring -->
<path d="M1098 161.6 C1104 170 1109 182 1109 192 C1109 202 1104 210 1098 216 C1092 210 1087.6 202 1087.6 190 C1087.6 180 1092 170 1098 161.6 Z" fill="url(#lensV)"/>
<path d="M1087 184 C1074 186 1071 190 1073 194 C1078 199 1118 199 1124 193 C1128 188 1122 184 1114 183" fill="none" stroke="#ee2020" stroke-width="3.2"/>
<path d="M1109 182 L1117 178 L1116 187 Z" fill="#ee2020"/>
<path d="M1161 161.6 C1167 170 1172 182 1172 192 C1172 202 1167 210 1161 216 C1155 210 1150.4 202 1150.4 190 C1150.4 180 1155 170 1161 161.6 Z" fill="url(#lensV)"/>
<path d="M1150 184 C1137 186 1134 190 1136 194 C1141 199 1181 199 1187 193 C1191 188 1185 184 1177 183" fill="none" stroke="#ee2020" stroke-width="3.2"/>
<path d="M1172 182 L1180 178 L1179 187 Z" fill="#ee2020"/>
<path d="M1144 189 L1155 199 L1150 199 L1150 215 L1140 215 L1140 199 L1134 199 Z" fill="#f8b020" stroke="#7a5a10" stroke-width="0.8"/>
<!-- wire spheres -->
<g fill="none" stroke="#111" stroke-width="1.6">
<circle cx="1238" cy="188" r="16.5"/>
<ellipse cx="1238" cy="179" rx="8" ry="5"/>
<path d="M1222 190 C1228 197 1248 197 1254 190"/>
<path d="M1224 200 C1230 204 1246 204 1252 200"/>
</g>
<circle cx="1300" cy="188" r="16.5" fill="none" stroke="#222" stroke-width="1.6"/>
<g fill="none" stroke="#e82020" stroke-width="1.6">
<ellipse cx="1300" cy="179" rx="8" ry="5"/>
<path d="M1284 188 C1290 196 1310 196 1316 188"/>
</g>
<g fill="none" stroke="#111" stroke-width="1.5">
<circle cx="1362" cy="188" r="16.5"/>
<path d="M1347 180 L1377 180 L1362 204 Z M1347 196 L1377 196 L1362 172 Z"/>
<path d="M1352 174 L1372 202 M1372 174 L1352 202"/>
</g>
<!-- blue spheres -->
<circle cx="1441" cy="189" r="18.6" fill="url(#sph)"/>
<circle cx="1503" cy="189" r="18.6" fill="url(#sph2)"/>
<circle cx="1565" cy="189" r="18.6" fill="url(#sph2)"/>
<path d="M1556 203 L1580 205 L1590 207 L1584 198 L1574 195 Z" fill="#18c8e8"/>
<path d="M1555 198 L1583 170 L1588 175 L1560 203 Z" fill="#e8f0ff" stroke="#111" stroke-width="1.8"/>
<path d="M1554 198 L1560 203 L1553 205 Z" fill="#f8c890"/>
<!-- striped sphere -->
<circle cx="1643" cy="188.5" r="19" fill="url(#stripes)"/>
<!-- rainbow sphere -->
<circle cx="1705" cy="188" r="19" fill="url(#rainb)"/>
<ellipse cx="1705" cy="188" rx="19" ry="19" fill="none" stroke="#ff4060" stroke-width="1" opacity="0.5"/>
<!-- S curves -->
<path d="M1776 175 L1770 178 L1765 184 L1765 190 L1770 196 L1766 202 L1761 207" fill="none" stroke="#2a50e0" stroke-width="2.8" stroke-dasharray="2.6 1.6"/>
<line x1="1783" y1="171" x2="1783" y2="211" stroke="#222" stroke-width="1.6" stroke-dasharray="3 2.5"/>
<path d="M1803 174 L1793 182 L1790 188 L1796 196 L1793 204 L1788 210" fill="none" stroke="#2a50e0" stroke-width="2.8"/>
<!-- color squares -->
<rect x="1844" y="172" width="14" height="14" fill="#f02a10"/>
<rect x="1862" y="172" width="14" height="14" fill="#f8c818"/>
<rect x="1844" y="190" width="14" height="14" fill="#98cc40"/>
<rect x="1862" y="190" width="14" height="14" fill="#60c0d0"/>
</svg>
<!-- resize grip -->
<svg class="abs" style="left:2840px;top:1760px" width="40" height="40" viewBox="0 0 40 40">
<g stroke="#8a8a8a" stroke-width="2">
<line x1="16.5" y1="37" x2="37" y2="16.5"/><line x1="24.4" y1="37" x2="37" y2="24.4"/><line x1="32" y1="37" x2="37" y2="32"/>
</g></svg>
</body></html>
